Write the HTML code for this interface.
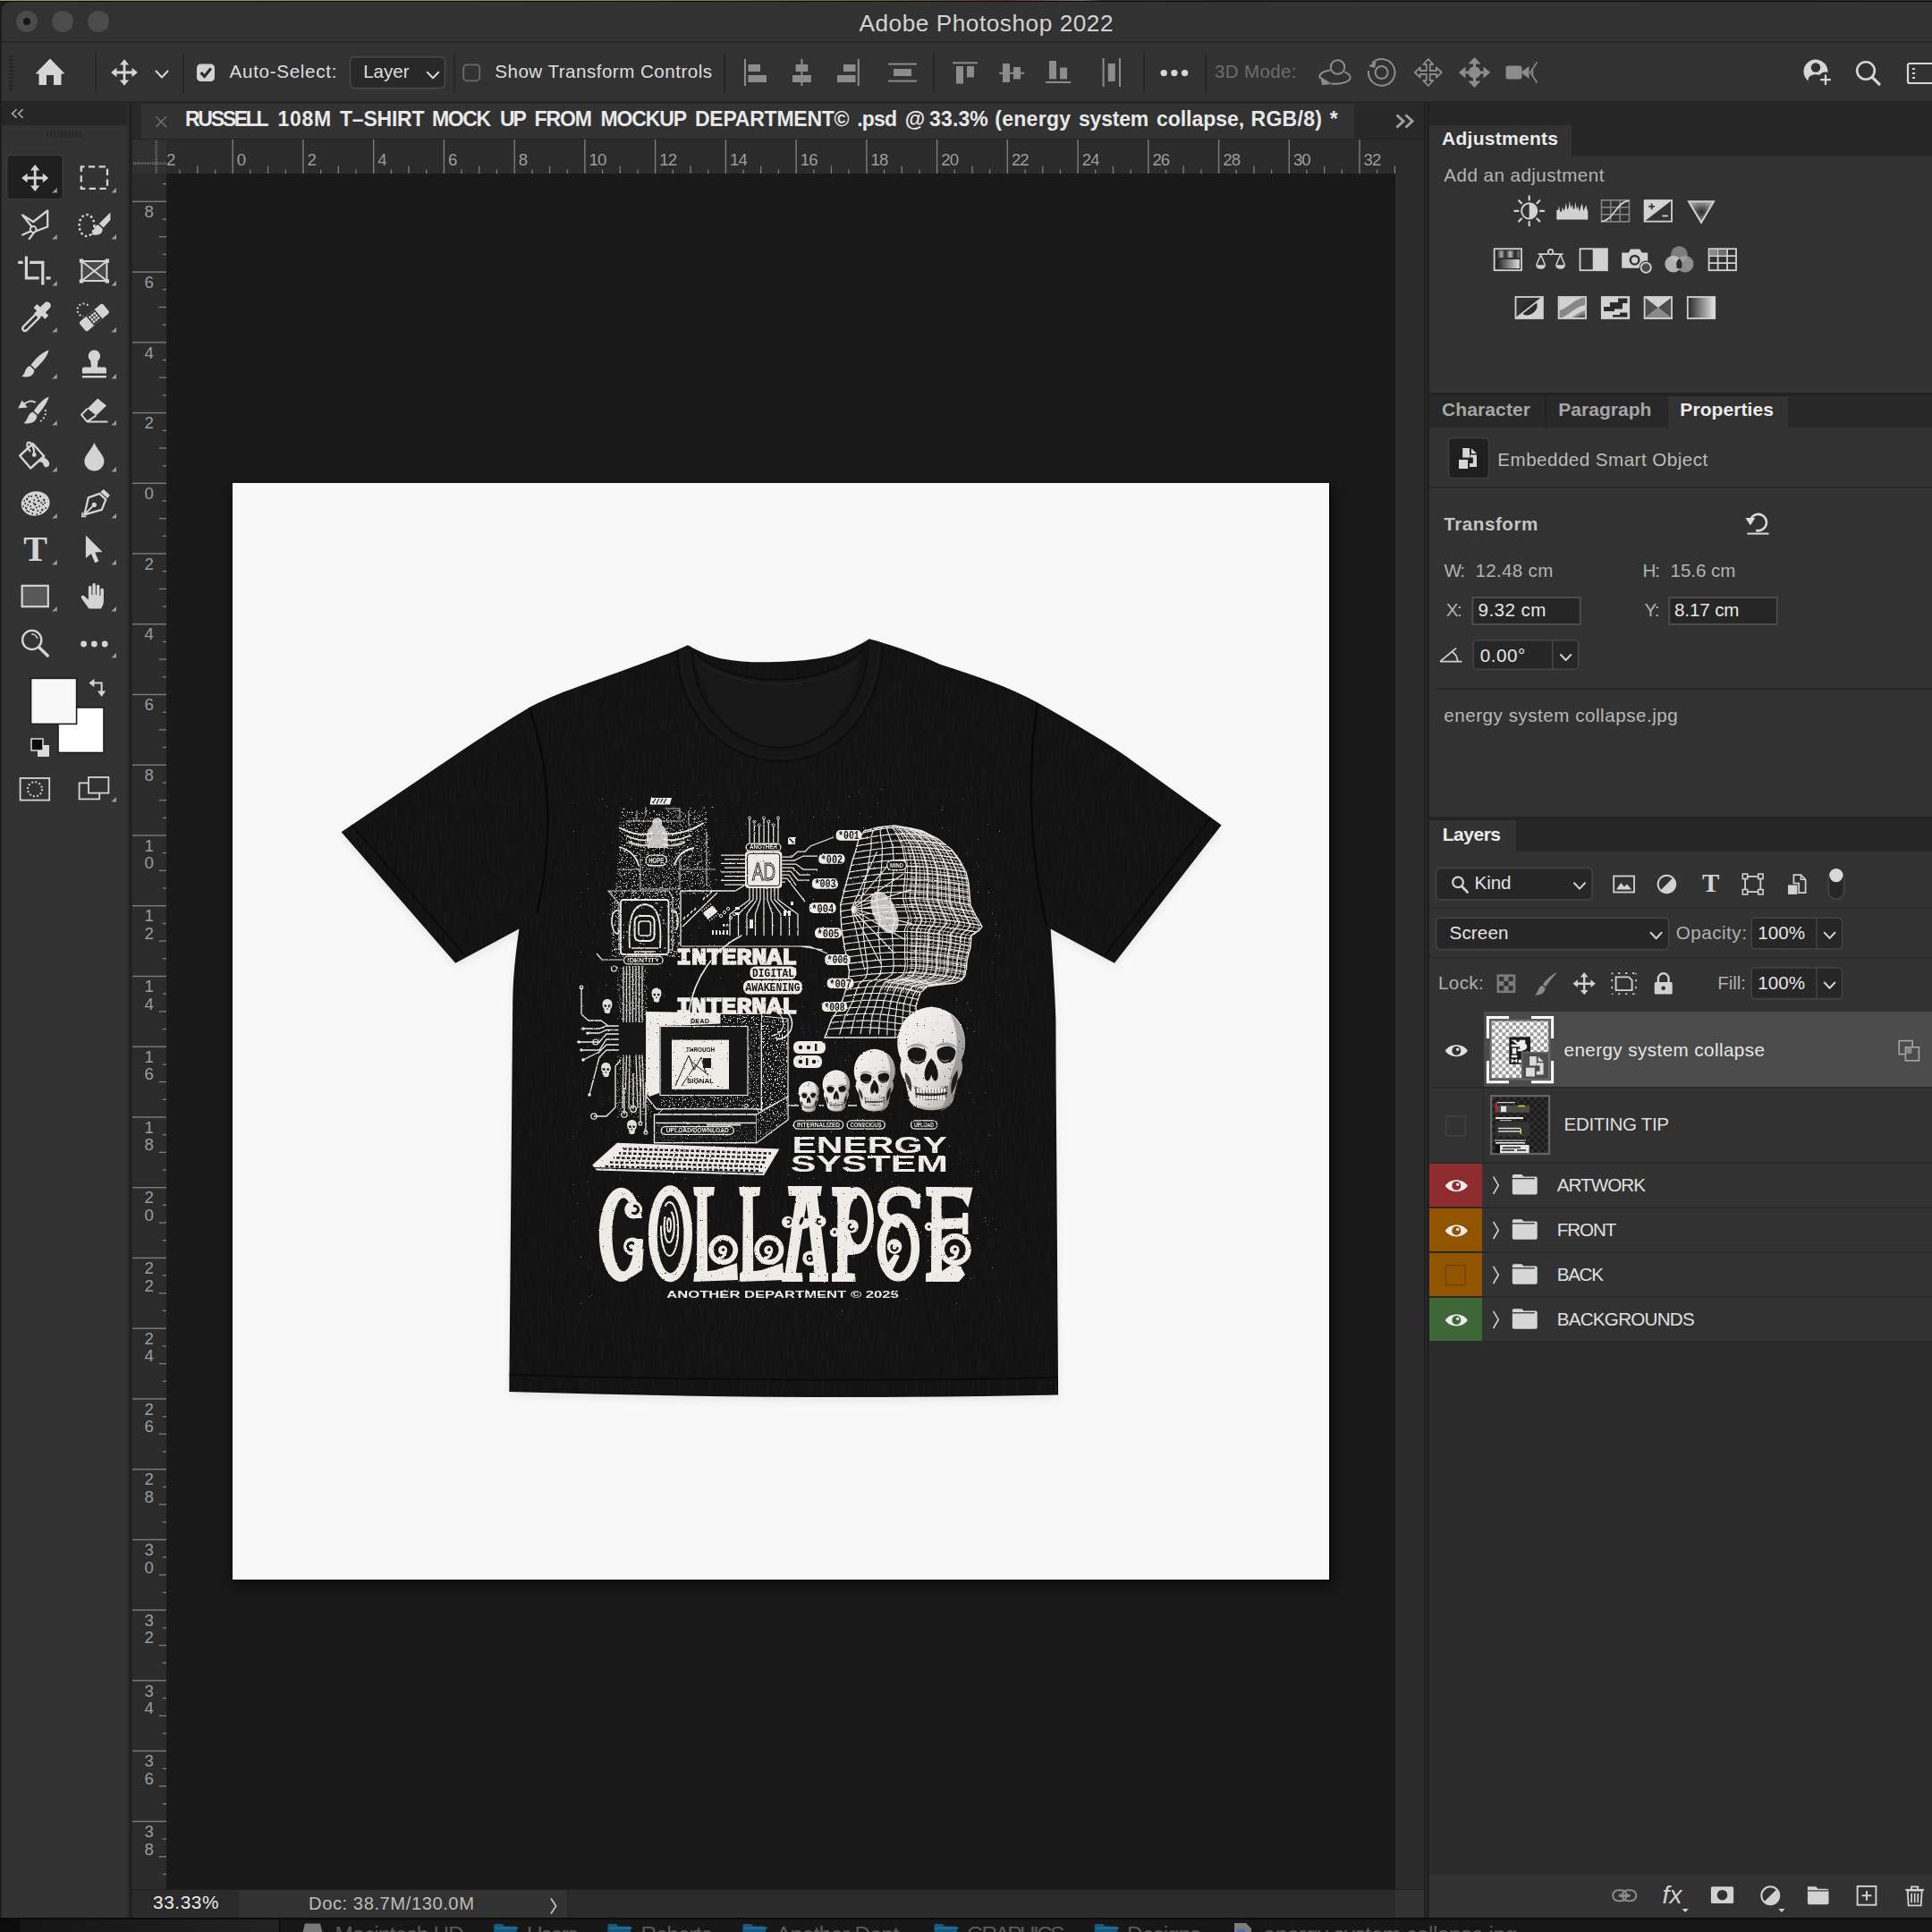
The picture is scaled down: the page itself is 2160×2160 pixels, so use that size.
<!DOCTYPE html>
<html><head><meta charset="utf-8"><title>Adobe Photoshop 2022</title>
<style>
html,body{margin:0;padding:0;background:#1c1c1c;}
body{width:2160px;height:2160px;position:relative;overflow:hidden;font-family:"Liberation Sans",sans-serif;}
.b{position:absolute;box-sizing:border-box;}
.t{position:absolute;white-space:pre;line-height:1;font-family:"Liberation Sans",sans-serif;}
svg{overflow:visible;}
</style></head>
<body>
<!-- p1_frame -->
<div class="b" style="left:0.0px;top:0.0px;width:2160.0px;height:3.0px;background:#0a0a0a;"></div>
<div class="b" style="left:0.0px;top:0.0px;width:2160.0px;height:1.3px;background:linear-gradient(90deg,#9c956a 0,#8a8560 30%,#6a6248 45%,#5a3a30 52%,#7a6a60 56%,#3a3030 57%,#20262e 70%,#2a3038 100%);"></div>
<div class="b" style="left:0.0px;top:2.0px;width:14.0px;height:2144.0px;background:#1d1d1d;"></div>
<div class="b" style="left:1.9px;top:2.4px;width:2160.0px;height:2143.6px;background:#323232;border-radius:10px 0 0 0;"></div>
<div class="b" style="left:2.0px;top:46.0px;width:2158.0px;height:2.0px;background:#262626;"></div>
<div class="b" style="left:18.0px;top:12.0px;width:24.0px;height:24.0px;background:#4b4b4b;border-radius:50%;"></div>
<div class="b" style="left:58.0px;top:12.0px;width:24.0px;height:24.0px;background:#4b4b4b;border-radius:50%;"></div>
<div class="b" style="left:98.0px;top:12.0px;width:24.0px;height:24.0px;background:#4b4b4b;border-radius:50%;"></div>
<div class="b" style="left:26.0px;top:20.0px;width:8.0px;height:8.0px;background:#151515;border-radius:50%;"></div>
<span class="t" style="left:960.5px;top:13.4px;font-size:26.2px;color:#d2d2d2;letter-spacing:0.54px;">Adobe Photoshop 2022</span>
<div class="b" style="left:2.0px;top:113.0px;width:2158.0px;height:2.0px;background:#262626;"></div>
<div class="b" style="left:2.0px;top:115.0px;width:2158.0px;height:2031.0px;background:#262626;"></div>
<div class="b" style="left:2.0px;top:115.0px;width:140.0px;height:24.0px;background:#262626;"></div>
<div class="b" style="left:2.0px;top:140.0px;width:140.0px;height:2005.0px;background:#323232;"></div>
<div class="b" style="left:142.0px;top:115.0px;width:2.0px;height:2031.0px;background:#2c2c2c;"></div>
<div class="b" style="left:144.0px;top:115.0px;width:4.0px;height:2031.0px;background:#212121;"></div>
<div class="b" style="left:148.0px;top:115.0px;width:1444.0px;height:40.0px;background:#282828;"></div>
<div class="b" style="left:158.0px;top:116.0px;width:1356.0px;height:39.0px;background:#323232;"></div>
<div class="b" style="left:148.0px;top:155.0px;width:1444.0px;height:1.5px;background:#222;"></div>
<div class="b" style="left:148.0px;top:156.0px;width:1444.0px;height:38.0px;background:#2b2b2b;"></div>
<div class="b" style="left:148.0px;top:156.0px;width:38.0px;height:38.0px;background:#303030;"></div>
<div class="b" style="left:148.0px;top:194.0px;width:38.0px;height:1918.0px;background:#2b2b2b;"></div>
<div class="b" style="left:186.0px;top:194.0px;width:1374.0px;height:1918.0px;background:#191919;"></div>
<div class="b" style="left:1560.0px;top:156.0px;width:32.0px;height:1988.0px;background:#2a2a2a;"></div>
<div class="b" style="left:148.0px;top:2112.0px;width:1412.0px;height:32.0px;background:#2a2a2a;"></div>
<div class="b" style="left:1560.0px;top:2112.0px;width:32.0px;height:32.4px;background:#323232;"></div>
<div class="b" style="left:148.0px;top:2112.0px;width:119.0px;height:32.0px;background:#2a2a2a;"></div>
<div class="b" style="left:267.0px;top:2112.0px;width:367.0px;height:32.0px;background:#323232;"></div>
<div class="b" style="left:148.0px;top:2111.5px;width:1444.0px;height:1.2px;background:#202020;"></div>
<div class="b" style="left:1592.0px;top:115.0px;width:1.5px;height:2031.0px;background:#1e1e1e;"></div>
<div class="b" style="left:1593.5px;top:115.0px;width:1.5px;height:2031.0px;background:#2d2d2d;"></div>
<div class="b" style="left:1595.0px;top:115.0px;width:2.8px;height:2031.0px;background:#202020;"></div>
<div class="b" style="left:0.0px;top:2145.5px;width:2160.0px;height:15.0px;background:#1c1c1c;"></div>
<div class="b" style="left:0.0px;top:2145.5px;width:22.0px;height:15.0px;background:#0c0c0c;"></div>
<div class="b" style="left:0.0px;top:2144.3px;width:2160.0px;height:2.2px;background:#0a0a0a;"></div>
<!-- p2_options -->
<svg class="b" style="left:0.0px;top:0.0px;" width="2160" height="114" viewBox="0 0 2160 114"><rect x="10" y="62" width="5" height="1.6" fill="#222"/><rect x="10" y="66.1" width="5" height="1.6" fill="#222"/><rect x="10" y="70.2" width="5" height="1.6" fill="#222"/><rect x="10" y="74.3" width="5" height="1.6" fill="#222"/><rect x="10" y="78.4" width="5" height="1.6" fill="#222"/><rect x="10" y="82.5" width="5" height="1.6" fill="#222"/><rect x="10" y="86.6" width="5" height="1.6" fill="#222"/><rect x="10" y="90.7" width="5" height="1.6" fill="#222"/><rect x="10" y="94.8" width="5" height="1.6" fill="#222"/><rect x="10" y="98.9" width="5" height="1.6" fill="#222"/><path d="M56,65.5 L72.5,82.5 L68.5,82.5 L68.5,95 L60,95 L60,84 L52,84 L52,95 L43.5,95 L43.5,82.5 L39.5,82.5 Z" fill="#d6d6d6"/><g transform="translate(139,81) scale(0.99)"><path d="M0,-15 L5.2,-8.6 L1.4,-8.6 L1.4,-1.4 L8.6,-1.4 L8.6,-5.2 L15,0 L8.6,5.2 L8.6,1.4 L1.4,1.4 L1.4,8.6 L5.2,8.6 L0,15 L-5.2,8.6 L-1.4,8.6 L-1.4,1.4 L-8.6,1.4 L-8.6,5.2 L-15,0 L-8.6,-5.2 L-8.6,-1.4 L-1.4,-1.4 L-1.4,-8.6 L-5.2,-8.6 Z" fill="#d6d6d6"/></g><path d="M174.5,79.5 L181,86.5 L187.5,79.5" fill="none" stroke="#d6d6d6" stroke-width="2" stroke-linecap="round" stroke-linejoin="round"/><rect x="220" y="71.5" width="20" height="19.5" rx="4.5" fill="#d2d2d2"/><path d="M224.6,81.2 L228.6,85.4 L235.8,76.6" fill="none" stroke="#2a2a2a" stroke-width="3.2"/><rect x="391.4" y="63.6" width="106" height="35" rx="5" fill="#282828" stroke="#474747" stroke-width="1.6"/><path d="M477.75,80.75 L484,87.25 L490.25,80.75" fill="none" stroke="#d6d6d6" stroke-width="2" stroke-linecap="round" stroke-linejoin="round"/><rect x="518.2" y="72.4" width="18" height="18" rx="4" fill="none" stroke="#6a6a6a" stroke-width="1.8"/><rect x="832" y="66" width="2" height="30" fill="#8c8c8c"/><rect x="836.5" y="72" width="13.5" height="8" fill="#8c8c8c"/><rect x="836.5" y="84" width="20.5" height="8" fill="#8c8c8c"/><rect x="895.4" y="66" width="2" height="30" fill="#8c8c8c"/><rect x="889.6" y="72" width="13.6" height="8" fill="#8c8c8c"/><rect x="886" y="84" width="20.8" height="8" fill="#8c8c8c"/><rect x="958.8" y="66" width="2" height="30" fill="#8c8c8c"/><rect x="943" y="72" width="13.5" height="8" fill="#8c8c8c"/><rect x="936" y="84" width="20.5" height="8" fill="#8c8c8c"/><rect x="993" y="70.6" width="32" height="2" fill="#8c8c8c"/><rect x="993" y="89.6" width="32" height="2" fill="#8c8c8c"/><rect x="999" y="77" width="20" height="8" fill="#8c8c8c"/><rect x="1065" y="69.3" width="28" height="2" fill="#8c8c8c"/><rect x="1069" y="74" width="8" height="19.6" fill="#8c8c8c"/><rect x="1081" y="74" width="8" height="12.4" fill="#8c8c8c"/><rect x="1117" y="80.8" width="28" height="2" fill="#8c8c8c"/><rect x="1121" y="71" width="8" height="21" fill="#8c8c8c"/><rect x="1133" y="75" width="8" height="13.4" fill="#8c8c8c"/><rect x="1169" y="91" width="28" height="2" fill="#8c8c8c"/><rect x="1173" y="68" width="8" height="20.4" fill="#8c8c8c"/><rect x="1185" y="75.6" width="8" height="12.8" fill="#8c8c8c"/><rect x="1232.6" y="65" width="2" height="32" fill="#8c8c8c"/><rect x="1251" y="65" width="2" height="32" fill="#8c8c8c"/><rect x="1238.8" y="71" width="8" height="20" fill="#8c8c8c"/><circle cx="1301.2" cy="81.6" r="3.7" fill="#d6d6d6"/><circle cx="1312.9" cy="81.6" r="3.7" fill="#d6d6d6"/><circle cx="1324.6" cy="81.6" r="3.7" fill="#d6d6d6"/><g transform="translate(1492.5,81)"><path d="M-5,-2.6 C-14,-1.6 -19,2.6 -16.4,6.6 M-4,12.6 C6,13.4 16,11 17,6.4 C17.6,3.6 14.6,1 10.6,-0.6" fill="none" stroke="#8c8c8c" stroke-width="2"/><circle cx="3" cy="-6" r="7.8" fill="#323232" stroke="#8c8c8c" stroke-width="2"/><path d="M-16.6,4.4 L-3.4,12.8 L-14.4,14.2 Z" fill="#8c8c8c"/></g><g transform="translate(1544.6,81)"><path d="M-10.5,-10.5 A14.8,14.8 0 1 1 -14.6,-2" fill="none" stroke="#8c8c8c" stroke-width="2"/><circle r="7" fill="none" stroke="#8c8c8c" stroke-width="2"/><path d="M-14.5,-7 L-6,-12.5 L-7.5,-5 Z" fill="#8c8c8c"/></g><g transform="translate(1596.8,81)"><path d="M0,-15 L5.5,-9 L2,-9 L2,-2 L9,-2 L9,-5.5 L15,0 L9,5.5 L9,2 L2,2 L2,9 L5.5,9 L0,15 L-5.5,9 L-2,9 L-2,2 L-9,2 L-9,5.5 L-15,0 L-9,-5.5 L-9,-2 L-2,-2 L-2,-9 L-5.5,-9 Z" fill="none" stroke="#8c8c8c" stroke-width="1.8" stroke-linejoin="round"/></g><g transform="translate(1648.5,81)"><circle r="6.8" fill="#8c8c8c"/><path d="M0,-17 L7,-9.6 L-7,-9.6 Z M0,17 L7,9.6 L-7,9.6 Z M-17.6,0 L-10,-6.6 L-10,6.6 Z M17.6,0 L10,-6.6 L10,6.6 Z" fill="#8c8c8c"/><path d="M0,-10 L0,10 M-10,0 L10,0" stroke="#8c8c8c" stroke-width="3"/></g><g transform="translate(1700.5,81)"><rect x="-17" y="-7.5" width="18" height="15" rx="2.5" fill="#8c8c8c"/><path d="M1,-1 L9,-7 L9,7 L1,1 Z" fill="#8c8c8c"/><path d="M18,-11.6 L10.4,0 L18,11.6" fill="none" stroke="#8c8c8c" stroke-width="1.6"/><path d="M12.4,-3 A6,6 0 0 1 12.4,3" fill="none" stroke="#8c8c8c" stroke-width="1.4"/></g><g transform="translate(2030,80)"><circle r="13.5" fill="#d6d6d6"/><circle cx="0" cy="-4.5" r="5.2" fill="#323232"/><path d="M-8.5,9.5 C-8.5,1 8.5,1 8.5,9.5 L8.5,14 L-8.5,14 Z" fill="#323232"/><circle cx="11" cy="9" r="8.5" fill="#323232"/><path d="M11,3.5 L11,15 M5.2,9.2 L16.8,9.2" stroke="#d6d6d6" stroke-width="2.2"/></g><g transform="translate(2086,79)"><circle r="9.8" fill="none" stroke="#d6d6d6" stroke-width="2.6"/><path d="M7.2,7.4 L15,15.2" stroke="#d6d6d6" stroke-width="3.2" stroke-linecap="round"/></g><g transform="translate(2132,70)"><rect x="1" y="1" width="34" height="22" rx="2" fill="none" stroke="#d6d6d6" stroke-width="2.2"/><path d="M6,7 L9,7 M6,12 L9,12 M6,17 L9,17" stroke="#d6d6d6" stroke-width="2"/></g></svg>
<div class="b" style="left:106.0px;top:58.5px;width:2.0px;height:45.0px;background:#272727;"></div>
<div class="b" style="left:204.0px;top:58.5px;width:2.0px;height:45.0px;background:#272727;"></div>
<div class="b" style="left:507.0px;top:58.5px;width:2.0px;height:45.0px;background:#272727;"></div>
<div class="b" style="left:809.0px;top:58.5px;width:2.0px;height:45.0px;background:#272727;"></div>
<div class="b" style="left:1043.0px;top:58.5px;width:2.0px;height:45.0px;background:#272727;"></div>
<div class="b" style="left:1277.5px;top:58.5px;width:2.0px;height:45.0px;background:#272727;"></div>
<div class="b" style="left:1347.0px;top:58.5px;width:2.0px;height:45.0px;background:#272727;"></div>
<span class="t" style="left:256.6px;top:70.3px;font-size:20.6px;color:#dedede;letter-spacing:0.69px;">Auto-Select:</span>
<span class="t" style="left:406.2px;top:70.3px;font-size:20.6px;color:#dedede;letter-spacing:-0.03px;">Layer</span>
<span class="t" style="left:553.3px;top:70.3px;font-size:20.6px;color:#dedede;letter-spacing:0.47px;">Show Transform Controls</span>
<span class="t" style="left:1358.0px;top:70.3px;font-size:20.6px;color:#6c6c6c;letter-spacing:0.30px;">3D Mode:</span>
<!-- p3_doc -->
<svg class="b" style="left:0.0px;top:0.0px;" width="2160" height="2160" viewBox="0 0 2160 2160"><path d="M174.4,130.4 L186,142 M186,130.4 L174.4,142" stroke="#7a7a7a" stroke-width="1.3"/><path d="M1561.5,128.5 L1569,135.5 L1561.5,142.5 M1571.5,128.5 L1579,135.5 L1571.5,142.5" fill="none" stroke="#a0a0a0" stroke-width="3"/><path d="M18.6,122.2 L13.6,127 L18.6,131.8 M25.6,122.2 L20.6,127 L25.6,131.8" fill="none" stroke="#b4b4b4" stroke-width="1.5"/><rect x="52.2" y="146" width="1.7" height="7.6" fill="#262626"/><rect x="56.25" y="146" width="1.7" height="7.6" fill="#262626"/><rect x="60.3" y="146" width="1.7" height="7.6" fill="#262626"/><rect x="64.35" y="146" width="1.7" height="7.6" fill="#262626"/><rect x="68.4" y="146" width="1.7" height="7.6" fill="#262626"/><rect x="72.45" y="146" width="1.7" height="7.6" fill="#262626"/><rect x="76.5" y="146" width="1.7" height="7.6" fill="#262626"/><rect x="80.55" y="146" width="1.7" height="7.6" fill="#262626"/><rect x="84.6" y="146" width="1.7" height="7.6" fill="#262626"/><rect x="88.65" y="146" width="1.7" height="7.6" fill="#262626"/><path d="M149,182.6 L186,182.6" stroke="#8a8a8a" stroke-width="2.6" stroke-dasharray="1,1.1" opacity=".75"/><path d="M174.6,157 L174.6,194" stroke="#8a8a8a" stroke-width="2.6" stroke-dasharray="1,1.1" opacity=".75"/><rect x="200.5" y="189.6" width="1.3" height="4.4" fill="#7c7c7c"/><rect x="220.2" y="185.5" width="1.3" height="8.5" fill="#7c7c7c"/><rect x="239.9" y="189.6" width="1.3" height="4.4" fill="#7c7c7c"/><rect x="259.5" y="156" width="1.4" height="38" fill="#7c7c7c"/><rect x="279.2" y="189.6" width="1.3" height="4.4" fill="#7c7c7c"/><rect x="298.9" y="185.5" width="1.3" height="8.5" fill="#7c7c7c"/><rect x="318.6" y="189.6" width="1.3" height="4.4" fill="#7c7c7c"/><rect x="338.2" y="156" width="1.4" height="38" fill="#7c7c7c"/><rect x="358.0" y="189.6" width="1.3" height="4.4" fill="#7c7c7c"/><rect x="377.7" y="185.5" width="1.3" height="8.5" fill="#7c7c7c"/><rect x="397.3" y="189.6" width="1.3" height="4.4" fill="#7c7c7c"/><rect x="417.0" y="156" width="1.4" height="38" fill="#7c7c7c"/><rect x="436.7" y="189.6" width="1.3" height="4.4" fill="#7c7c7c"/><rect x="456.4" y="185.5" width="1.3" height="8.5" fill="#7c7c7c"/><rect x="476.1" y="189.6" width="1.3" height="4.4" fill="#7c7c7c"/><rect x="495.7" y="156" width="1.4" height="38" fill="#7c7c7c"/><rect x="515.5" y="189.6" width="1.3" height="4.4" fill="#7c7c7c"/><rect x="535.1" y="185.5" width="1.3" height="8.5" fill="#7c7c7c"/><rect x="554.8" y="189.6" width="1.3" height="4.4" fill="#7c7c7c"/><rect x="574.5" y="156" width="1.4" height="38" fill="#7c7c7c"/><rect x="594.2" y="189.6" width="1.3" height="4.4" fill="#7c7c7c"/><rect x="613.9" y="185.5" width="1.3" height="8.5" fill="#7c7c7c"/><rect x="633.6" y="189.6" width="1.3" height="4.4" fill="#7c7c7c"/><rect x="653.2" y="156" width="1.4" height="38" fill="#7c7c7c"/><rect x="672.9" y="189.6" width="1.3" height="4.4" fill="#7c7c7c"/><rect x="692.6" y="185.5" width="1.3" height="8.5" fill="#7c7c7c"/><rect x="712.3" y="189.6" width="1.3" height="4.4" fill="#7c7c7c"/><rect x="731.9" y="156" width="1.4" height="38" fill="#7c7c7c"/><rect x="751.7" y="189.6" width="1.3" height="4.4" fill="#7c7c7c"/><rect x="771.4" y="185.5" width="1.3" height="8.5" fill="#7c7c7c"/><rect x="791.0" y="189.6" width="1.3" height="4.4" fill="#7c7c7c"/><rect x="810.7" y="156" width="1.4" height="38" fill="#7c7c7c"/><rect x="830.4" y="189.6" width="1.3" height="4.4" fill="#7c7c7c"/><rect x="850.1" y="185.5" width="1.3" height="8.5" fill="#7c7c7c"/><rect x="869.8" y="189.6" width="1.3" height="4.4" fill="#7c7c7c"/><rect x="889.4" y="156" width="1.4" height="38" fill="#7c7c7c"/><rect x="909.2" y="189.6" width="1.3" height="4.4" fill="#7c7c7c"/><rect x="928.8" y="185.5" width="1.3" height="8.5" fill="#7c7c7c"/><rect x="948.5" y="189.6" width="1.3" height="4.4" fill="#7c7c7c"/><rect x="968.2" y="156" width="1.4" height="38" fill="#7c7c7c"/><rect x="987.9" y="189.6" width="1.3" height="4.4" fill="#7c7c7c"/><rect x="1007.6" y="185.5" width="1.3" height="8.5" fill="#7c7c7c"/><rect x="1027.3" y="189.6" width="1.3" height="4.4" fill="#7c7c7c"/><rect x="1046.9" y="156" width="1.4" height="38" fill="#7c7c7c"/><rect x="1066.6" y="189.6" width="1.3" height="4.4" fill="#7c7c7c"/><rect x="1086.3" y="185.5" width="1.3" height="8.5" fill="#7c7c7c"/><rect x="1106.0" y="189.6" width="1.3" height="4.4" fill="#7c7c7c"/><rect x="1125.6" y="156" width="1.4" height="38" fill="#7c7c7c"/><rect x="1145.4" y="189.6" width="1.3" height="4.4" fill="#7c7c7c"/><rect x="1165.1" y="185.5" width="1.3" height="8.5" fill="#7c7c7c"/><rect x="1184.7" y="189.6" width="1.3" height="4.4" fill="#7c7c7c"/><rect x="1204.4" y="156" width="1.4" height="38" fill="#7c7c7c"/><rect x="1224.1" y="189.6" width="1.3" height="4.4" fill="#7c7c7c"/><rect x="1243.8" y="185.5" width="1.3" height="8.5" fill="#7c7c7c"/><rect x="1263.5" y="189.6" width="1.3" height="4.4" fill="#7c7c7c"/><rect x="1283.1" y="156" width="1.4" height="38" fill="#7c7c7c"/><rect x="1302.9" y="189.6" width="1.3" height="4.4" fill="#7c7c7c"/><rect x="1322.5" y="185.5" width="1.3" height="8.5" fill="#7c7c7c"/><rect x="1342.2" y="189.6" width="1.3" height="4.4" fill="#7c7c7c"/><rect x="1361.9" y="156" width="1.4" height="38" fill="#7c7c7c"/><rect x="1381.6" y="189.6" width="1.3" height="4.4" fill="#7c7c7c"/><rect x="1401.3" y="185.5" width="1.3" height="8.5" fill="#7c7c7c"/><rect x="1421.0" y="189.6" width="1.3" height="4.4" fill="#7c7c7c"/><rect x="1440.6" y="156" width="1.4" height="38" fill="#7c7c7c"/><rect x="1460.3" y="189.6" width="1.3" height="4.4" fill="#7c7c7c"/><rect x="1480.0" y="185.5" width="1.3" height="8.5" fill="#7c7c7c"/><rect x="1499.7" y="189.6" width="1.3" height="4.4" fill="#7c7c7c"/><rect x="1519.3" y="156" width="1.4" height="38" fill="#7c7c7c"/><rect x="1539.1" y="189.6" width="1.3" height="4.4" fill="#7c7c7c"/><rect x="1558.8" y="185.5" width="1.3" height="8.5" fill="#7c7c7c"/><rect x="181.8" y="205.0" width="4.2" height="1.3" fill="#7c7c7c"/><rect x="148" y="224.6" width="38" height="1.4" fill="#7c7c7c"/><rect x="181.8" y="244.4" width="4.2" height="1.3" fill="#7c7c7c"/><rect x="177.6" y="264.1" width="8.4" height="1.3" fill="#7c7c7c"/><rect x="181.8" y="283.7" width="4.2" height="1.3" fill="#7c7c7c"/><rect x="148" y="303.4" width="38" height="1.4" fill="#7c7c7c"/><rect x="181.8" y="323.1" width="4.2" height="1.3" fill="#7c7c7c"/><rect x="177.6" y="342.8" width="8.4" height="1.3" fill="#7c7c7c"/><rect x="181.8" y="362.5" width="4.2" height="1.3" fill="#7c7c7c"/><rect x="148" y="382.1" width="38" height="1.4" fill="#7c7c7c"/><rect x="181.8" y="401.9" width="4.2" height="1.3" fill="#7c7c7c"/><rect x="177.6" y="421.5" width="8.4" height="1.3" fill="#7c7c7c"/><rect x="181.8" y="441.2" width="4.2" height="1.3" fill="#7c7c7c"/><rect x="148" y="460.9" width="38" height="1.4" fill="#7c7c7c"/><rect x="181.8" y="480.6" width="4.2" height="1.3" fill="#7c7c7c"/><rect x="177.6" y="500.3" width="8.4" height="1.3" fill="#7c7c7c"/><rect x="181.8" y="520.0" width="4.2" height="1.3" fill="#7c7c7c"/><rect x="148" y="539.6" width="38" height="1.4" fill="#7c7c7c"/><rect x="181.8" y="559.3" width="4.2" height="1.3" fill="#7c7c7c"/><rect x="177.6" y="579.0" width="8.4" height="1.3" fill="#7c7c7c"/><rect x="181.8" y="598.7" width="4.2" height="1.3" fill="#7c7c7c"/><rect x="148" y="618.3" width="38" height="1.4" fill="#7c7c7c"/><rect x="181.8" y="638.1" width="4.2" height="1.3" fill="#7c7c7c"/><rect x="177.6" y="657.8" width="8.4" height="1.3" fill="#7c7c7c"/><rect x="181.8" y="677.4" width="4.2" height="1.3" fill="#7c7c7c"/><rect x="148" y="697.1" width="38" height="1.4" fill="#7c7c7c"/><rect x="181.8" y="716.8" width="4.2" height="1.3" fill="#7c7c7c"/><rect x="177.6" y="736.5" width="8.4" height="1.3" fill="#7c7c7c"/><rect x="181.8" y="756.2" width="4.2" height="1.3" fill="#7c7c7c"/><rect x="148" y="775.8" width="38" height="1.4" fill="#7c7c7c"/><rect x="181.8" y="795.6" width="4.2" height="1.3" fill="#7c7c7c"/><rect x="177.6" y="815.2" width="8.4" height="1.3" fill="#7c7c7c"/><rect x="181.8" y="834.9" width="4.2" height="1.3" fill="#7c7c7c"/><rect x="148" y="854.6" width="38" height="1.4" fill="#7c7c7c"/><rect x="181.8" y="874.3" width="4.2" height="1.3" fill="#7c7c7c"/><rect x="177.6" y="894.0" width="8.4" height="1.3" fill="#7c7c7c"/><rect x="181.8" y="913.7" width="4.2" height="1.3" fill="#7c7c7c"/><rect x="148" y="933.3" width="38" height="1.4" fill="#7c7c7c"/><rect x="181.8" y="953.0" width="4.2" height="1.3" fill="#7c7c7c"/><rect x="177.6" y="972.7" width="8.4" height="1.3" fill="#7c7c7c"/><rect x="181.8" y="992.4" width="4.2" height="1.3" fill="#7c7c7c"/><rect x="148" y="1012.0" width="38" height="1.4" fill="#7c7c7c"/><rect x="181.8" y="1031.8" width="4.2" height="1.3" fill="#7c7c7c"/><rect x="177.6" y="1051.5" width="8.4" height="1.3" fill="#7c7c7c"/><rect x="181.8" y="1071.1" width="4.2" height="1.3" fill="#7c7c7c"/><rect x="148" y="1090.8" width="38" height="1.4" fill="#7c7c7c"/><rect x="181.8" y="1110.5" width="4.2" height="1.3" fill="#7c7c7c"/><rect x="177.6" y="1130.2" width="8.4" height="1.3" fill="#7c7c7c"/><rect x="181.8" y="1149.9" width="4.2" height="1.3" fill="#7c7c7c"/><rect x="148" y="1169.5" width="38" height="1.4" fill="#7c7c7c"/><rect x="181.8" y="1189.3" width="4.2" height="1.3" fill="#7c7c7c"/><rect x="177.6" y="1208.9" width="8.4" height="1.3" fill="#7c7c7c"/><rect x="181.8" y="1228.6" width="4.2" height="1.3" fill="#7c7c7c"/><rect x="148" y="1248.3" width="38" height="1.4" fill="#7c7c7c"/><rect x="181.8" y="1268.0" width="4.2" height="1.3" fill="#7c7c7c"/><rect x="177.6" y="1287.7" width="8.4" height="1.3" fill="#7c7c7c"/><rect x="181.8" y="1307.4" width="4.2" height="1.3" fill="#7c7c7c"/><rect x="148" y="1327.0" width="38" height="1.4" fill="#7c7c7c"/><rect x="181.8" y="1346.7" width="4.2" height="1.3" fill="#7c7c7c"/><rect x="177.6" y="1366.4" width="8.4" height="1.3" fill="#7c7c7c"/><rect x="181.8" y="1386.1" width="4.2" height="1.3" fill="#7c7c7c"/><rect x="148" y="1405.7" width="38" height="1.4" fill="#7c7c7c"/><rect x="181.8" y="1425.5" width="4.2" height="1.3" fill="#7c7c7c"/><rect x="177.6" y="1445.2" width="8.4" height="1.3" fill="#7c7c7c"/><rect x="181.8" y="1464.8" width="4.2" height="1.3" fill="#7c7c7c"/><rect x="148" y="1484.5" width="38" height="1.4" fill="#7c7c7c"/><rect x="181.8" y="1504.2" width="4.2" height="1.3" fill="#7c7c7c"/><rect x="177.6" y="1523.9" width="8.4" height="1.3" fill="#7c7c7c"/><rect x="181.8" y="1543.6" width="4.2" height="1.3" fill="#7c7c7c"/><rect x="148" y="1563.2" width="38" height="1.4" fill="#7c7c7c"/><rect x="181.8" y="1583.0" width="4.2" height="1.3" fill="#7c7c7c"/><rect x="177.6" y="1602.6" width="8.4" height="1.3" fill="#7c7c7c"/><rect x="181.8" y="1622.3" width="4.2" height="1.3" fill="#7c7c7c"/><rect x="148" y="1642.0" width="38" height="1.4" fill="#7c7c7c"/><rect x="181.8" y="1661.7" width="4.2" height="1.3" fill="#7c7c7c"/><rect x="177.6" y="1681.4" width="8.4" height="1.3" fill="#7c7c7c"/><rect x="181.8" y="1701.1" width="4.2" height="1.3" fill="#7c7c7c"/><rect x="148" y="1720.7" width="38" height="1.4" fill="#7c7c7c"/><rect x="181.8" y="1740.4" width="4.2" height="1.3" fill="#7c7c7c"/><rect x="177.6" y="1760.1" width="8.4" height="1.3" fill="#7c7c7c"/><rect x="181.8" y="1779.8" width="4.2" height="1.3" fill="#7c7c7c"/><rect x="148" y="1799.4" width="38" height="1.4" fill="#7c7c7c"/><rect x="181.8" y="1819.2" width="4.2" height="1.3" fill="#7c7c7c"/><rect x="177.6" y="1838.9" width="8.4" height="1.3" fill="#7c7c7c"/><rect x="181.8" y="1858.5" width="4.2" height="1.3" fill="#7c7c7c"/><rect x="148" y="1878.2" width="38" height="1.4" fill="#7c7c7c"/><rect x="181.8" y="1897.9" width="4.2" height="1.3" fill="#7c7c7c"/><rect x="177.6" y="1917.6" width="8.4" height="1.3" fill="#7c7c7c"/><rect x="181.8" y="1937.3" width="4.2" height="1.3" fill="#7c7c7c"/><rect x="148" y="1956.9" width="38" height="1.4" fill="#7c7c7c"/><rect x="181.8" y="1976.7" width="4.2" height="1.3" fill="#7c7c7c"/><rect x="177.6" y="1996.3" width="8.4" height="1.3" fill="#7c7c7c"/><rect x="181.8" y="2016.0" width="4.2" height="1.3" fill="#7c7c7c"/><rect x="148" y="2035.7" width="38" height="1.4" fill="#7c7c7c"/><rect x="181.8" y="2055.4" width="4.2" height="1.3" fill="#7c7c7c"/><rect x="177.6" y="2075.1" width="8.4" height="1.3" fill="#7c7c7c"/><rect x="181.8" y="2094.8" width="4.2" height="1.3" fill="#7c7c7c"/><path d="M616,2122.5 L621.6,2131 L616,2139.5" fill="none" stroke="#c8c8c8" stroke-width="1.6"/></svg>
<span class="t" style="left:207.0px;top:122.0px;font-size:23.0px;color:#e8e8e8;font-weight:700;letter-spacing:-2.29px;">RUSSELL</span>
<span class="t" style="left:310.6px;top:122.0px;font-size:23.0px;color:#e8e8e8;font-weight:700;letter-spacing:0.69px;">108M</span>
<span class="t" style="left:380.0px;top:122.0px;font-size:23.0px;color:#e8e8e8;font-weight:700;letter-spacing:-0.22px;">T–SHIRT</span>
<span class="t" style="left:483.0px;top:122.0px;font-size:23.0px;color:#e8e8e8;font-weight:700;letter-spacing:-1.42px;">MOCK</span>
<span class="t" style="left:559.0px;top:122.0px;font-size:23.0px;color:#e8e8e8;font-weight:700;letter-spacing:-2.15px;">UP</span>
<span class="t" style="left:597.5px;top:122.0px;font-size:23.0px;color:#e8e8e8;font-weight:700;letter-spacing:-1.07px;">FROM</span>
<span class="t" style="left:671.5px;top:122.0px;font-size:23.0px;color:#e8e8e8;font-weight:700;letter-spacing:-1.14px;">MOCKUP</span>
<span class="t" style="left:777.0px;top:122.0px;font-size:23.0px;color:#e8e8e8;font-weight:700;letter-spacing:-0.24px;">DEPARTMENT©</span>
<span class="t" style="left:958.3px;top:122.0px;font-size:23.0px;color:#e8e8e8;font-weight:700;letter-spacing:-0.86px;">.psd</span>
<span class="t" style="left:1011.7px;top:122.0px;font-size:23.0px;color:#e8e8e8;font-weight:700;">@</span>
<span class="t" style="left:1039.0px;top:122.0px;font-size:23.0px;color:#e8e8e8;font-weight:700;letter-spacing:0.15px;">33.3%</span>
<span class="t" style="left:1112.3px;top:122.0px;font-size:23.0px;color:#e8e8e8;font-weight:700;letter-spacing:0.27px;">(energy</span>
<span class="t" style="left:1206.0px;top:122.0px;font-size:23.0px;color:#e8e8e8;font-weight:700;letter-spacing:-0.22px;">system</span>
<span class="t" style="left:1293.0px;top:122.0px;font-size:23.0px;color:#e8e8e8;font-weight:700;letter-spacing:-0.05px;">collapse,</span>
<span class="t" style="left:1398.5px;top:122.0px;font-size:23.0px;color:#e8e8e8;font-weight:700;letter-spacing:0.31px;">RGB/8)</span>
<span class="t" style="left:1486.7px;top:122.0px;font-size:23.0px;color:#e8e8e8;font-weight:700;">*</span>
<span class="t" style="left:186.1px;top:169.5px;font-size:18.6px;color:#9c9c9c;letter-spacing:-0.9px;">2</span>
<span class="t" style="left:264.8px;top:169.5px;font-size:18.6px;color:#9c9c9c;letter-spacing:-0.9px;">0</span>
<span class="t" style="left:343.5px;top:169.5px;font-size:18.6px;color:#9c9c9c;letter-spacing:-0.9px;">2</span>
<span class="t" style="left:422.3px;top:169.5px;font-size:18.6px;color:#9c9c9c;letter-spacing:-0.9px;">4</span>
<span class="t" style="left:501.0px;top:169.5px;font-size:18.6px;color:#9c9c9c;letter-spacing:-0.9px;">6</span>
<span class="t" style="left:579.8px;top:169.5px;font-size:18.6px;color:#9c9c9c;letter-spacing:-0.9px;">8</span>
<span class="t" style="left:658.5px;top:169.5px;font-size:18.6px;color:#9c9c9c;letter-spacing:-0.9px;">10</span>
<span class="t" style="left:737.2px;top:169.5px;font-size:18.6px;color:#9c9c9c;letter-spacing:-0.9px;">12</span>
<span class="t" style="left:816.0px;top:169.5px;font-size:18.6px;color:#9c9c9c;letter-spacing:-0.9px;">14</span>
<span class="t" style="left:894.7px;top:169.5px;font-size:18.6px;color:#9c9c9c;letter-spacing:-0.9px;">16</span>
<span class="t" style="left:973.5px;top:169.5px;font-size:18.6px;color:#9c9c9c;letter-spacing:-0.9px;">18</span>
<span class="t" style="left:1052.2px;top:169.5px;font-size:18.6px;color:#9c9c9c;letter-spacing:-0.9px;">20</span>
<span class="t" style="left:1130.9px;top:169.5px;font-size:18.6px;color:#9c9c9c;letter-spacing:-0.9px;">22</span>
<span class="t" style="left:1209.7px;top:169.5px;font-size:18.6px;color:#9c9c9c;letter-spacing:-0.9px;">24</span>
<span class="t" style="left:1288.4px;top:169.5px;font-size:18.6px;color:#9c9c9c;letter-spacing:-0.9px;">26</span>
<span class="t" style="left:1367.2px;top:169.5px;font-size:18.6px;color:#9c9c9c;letter-spacing:-0.9px;">28</span>
<span class="t" style="left:1445.9px;top:169.5px;font-size:18.6px;color:#9c9c9c;letter-spacing:-0.9px;">30</span>
<span class="t" style="left:1524.6px;top:169.5px;font-size:18.6px;color:#9c9c9c;letter-spacing:-0.9px;">32</span>
<span class="t" style="left:161.4px;top:228.0px;font-size:18.6px;color:#9c9c9c;">8</span>
<span class="t" style="left:161.4px;top:306.7px;font-size:18.6px;color:#9c9c9c;">6</span>
<span class="t" style="left:161.4px;top:385.5px;font-size:18.6px;color:#9c9c9c;">4</span>
<span class="t" style="left:161.4px;top:464.2px;font-size:18.6px;color:#9c9c9c;">2</span>
<span class="t" style="left:161.4px;top:543.0px;font-size:18.6px;color:#9c9c9c;">0</span>
<span class="t" style="left:161.4px;top:621.7px;font-size:18.6px;color:#9c9c9c;">2</span>
<span class="t" style="left:161.4px;top:700.4px;font-size:18.6px;color:#9c9c9c;">4</span>
<span class="t" style="left:161.4px;top:779.2px;font-size:18.6px;color:#9c9c9c;">6</span>
<span class="t" style="left:161.4px;top:857.9px;font-size:18.6px;color:#9c9c9c;">8</span>
<span class="t" style="left:161.4px;top:936.7px;font-size:18.6px;color:#9c9c9c;">1</span>
<span class="t" style="left:161.4px;top:956.2px;font-size:18.6px;color:#9c9c9c;">0</span>
<span class="t" style="left:161.4px;top:1015.4px;font-size:18.6px;color:#9c9c9c;">1</span>
<span class="t" style="left:161.4px;top:1034.9px;font-size:18.6px;color:#9c9c9c;">2</span>
<span class="t" style="left:161.4px;top:1094.1px;font-size:18.6px;color:#9c9c9c;">1</span>
<span class="t" style="left:161.4px;top:1113.6px;font-size:18.6px;color:#9c9c9c;">4</span>
<span class="t" style="left:161.4px;top:1172.9px;font-size:18.6px;color:#9c9c9c;">1</span>
<span class="t" style="left:161.4px;top:1192.4px;font-size:18.6px;color:#9c9c9c;">6</span>
<span class="t" style="left:161.4px;top:1251.6px;font-size:18.6px;color:#9c9c9c;">1</span>
<span class="t" style="left:161.4px;top:1271.1px;font-size:18.6px;color:#9c9c9c;">8</span>
<span class="t" style="left:161.4px;top:1330.4px;font-size:18.6px;color:#9c9c9c;">2</span>
<span class="t" style="left:161.4px;top:1349.9px;font-size:18.6px;color:#9c9c9c;">0</span>
<span class="t" style="left:161.4px;top:1409.1px;font-size:18.6px;color:#9c9c9c;">2</span>
<span class="t" style="left:161.4px;top:1428.6px;font-size:18.6px;color:#9c9c9c;">2</span>
<span class="t" style="left:161.4px;top:1487.8px;font-size:18.6px;color:#9c9c9c;">2</span>
<span class="t" style="left:161.4px;top:1507.3px;font-size:18.6px;color:#9c9c9c;">4</span>
<span class="t" style="left:161.4px;top:1566.6px;font-size:18.6px;color:#9c9c9c;">2</span>
<span class="t" style="left:161.4px;top:1586.1px;font-size:18.6px;color:#9c9c9c;">6</span>
<span class="t" style="left:161.4px;top:1645.3px;font-size:18.6px;color:#9c9c9c;">2</span>
<span class="t" style="left:161.4px;top:1664.8px;font-size:18.6px;color:#9c9c9c;">8</span>
<span class="t" style="left:161.4px;top:1724.1px;font-size:18.6px;color:#9c9c9c;">3</span>
<span class="t" style="left:161.4px;top:1743.6px;font-size:18.6px;color:#9c9c9c;">0</span>
<span class="t" style="left:161.4px;top:1802.8px;font-size:18.6px;color:#9c9c9c;">3</span>
<span class="t" style="left:161.4px;top:1822.3px;font-size:18.6px;color:#9c9c9c;">2</span>
<span class="t" style="left:161.4px;top:1881.5px;font-size:18.6px;color:#9c9c9c;">3</span>
<span class="t" style="left:161.4px;top:1901.0px;font-size:18.6px;color:#9c9c9c;">4</span>
<span class="t" style="left:161.4px;top:1960.3px;font-size:18.6px;color:#9c9c9c;">3</span>
<span class="t" style="left:161.4px;top:1979.8px;font-size:18.6px;color:#9c9c9c;">6</span>
<span class="t" style="left:161.4px;top:2039.0px;font-size:18.6px;color:#9c9c9c;">3</span>
<span class="t" style="left:161.4px;top:2058.5px;font-size:18.6px;color:#9c9c9c;">8</span>
<span class="t" style="left:171.0px;top:2117.4px;font-size:20.8px;color:#ececec;letter-spacing:0.59px;">33.33%</span>
<span class="t" style="left:345.0px;top:2117.9px;font-size:20.2px;color:#bdbdbd;letter-spacing:0.55px;">Doc: 38.7M/130.0M</span>
<!-- p4_tools -->
<svg class="b" style="left:0.0px;top:0.0px;" width="160" height="920" viewBox="0 0 160 920"><rect x="7.6" y="173.4" width="62.8" height="49.6" rx="4.5" fill="#1f1f1f" stroke="#3e3e3e" stroke-width="1.4"/><g transform="translate(39.2,199) scale(1)"><path d="M0,-15 L5.2,-8.6 L1.4,-8.6 L1.4,-1.4 L8.6,-1.4 L8.6,-5.2 L15,0 L8.6,5.2 L8.6,1.4 L1.4,1.4 L1.4,8.6 L5.2,8.6 L0,15 L-5.2,8.6 L-1.4,8.6 L-1.4,1.4 L-8.6,1.4 L-8.6,5.2 L-15,0 L-8.6,-5.2 L-8.6,-1.4 L-1.4,-1.4 L-1.4,-8.6 L-5.2,-8.6 Z" fill="#d4d4d4"/></g><g transform="translate(105.4,199)"><rect x="-14.6" y="-12.6" width="29.2" height="24.4" fill="none" stroke="#d4d4d4" stroke-width="2.3" stroke-dasharray="7.3,4.4" stroke-dashoffset="3.6"/></g><g transform="translate(39.2,251)"><path d="M-14,-10.5 L-2,-3 L14,-15.5 L14,2.5 L-0.5,8 L-4.5,1.5 Z" fill="none" stroke="#d4d4d4" stroke-width="2.3" stroke-linejoin="round"/><circle cx="-2" cy="5.5" r="3.4" fill="#323232" stroke="#d4d4d4" stroke-width="2"/><path d="M-4.8,7.5 L-14,11.5 M-1,8.8 L-6.5,16" stroke="#d4d4d4" stroke-width="2.2" stroke-linecap="round"/></g><g transform="translate(105.4,251)"><ellipse cx="-8.4" cy="1" rx="8.4" ry="12" fill="none" stroke="#d4d4d4" stroke-width="2.5" stroke-dasharray="2.5,2.77"/><path d="M18,-13.6 L18,-5 L10.2,3.4 L5.4,-1 Z" fill="#d4d4d4"/><path d="M4.2,0.2 L9,4.6 C10.4,10.6 3,13.4 -4,10.8 C0.4,9 -1.6,2.2 4.2,0.2 Z" fill="#d4d4d4"/></g><g transform="translate(39.2,303)"><path d="M-19,-9.6 H-13.6 M-9.8,-16.6 V7.8 H4.4 M-6,-9.6 H8.6 V15.4 M12.4,7.8 H17.4" fill="none" stroke="#d4d4d4" stroke-width="3.2"/></g><g transform="translate(105.4,303)"><rect x="-14" y="-11" width="28" height="22" fill="#4a4a4a" stroke="#d4d4d4" stroke-width="2"/><path d="M-14,-11 L14,11 M14,-11 L-14,11" stroke="#d4d4d4" stroke-width="2"/><path d="M-16.6,-13.6h4.4v4.4h-4.4z M12.2,-13.6h4.4v4.4h-4.4z M-16.6,9.2h4.4v4.4h-4.4z M12.2,9.2h4.4v4.4h-4.4z" fill="#d4d4d4"/></g><g transform="translate(39.2,355)"><path d="M1.5,-4.5 L-12.8,9.8 C-15.6,12.6 -12.6,16.6 -9.2,14 L5.4,-0.6" fill="none" stroke="#d4d4d4" stroke-width="2.4" stroke-linejoin="round"/><g transform="rotate(45 6.5 -6.5)"><rect x="-2.5" y="-9.6" width="18" height="5.6" fill="#d4d4d4"/><path d="M2.4,-9 L2.4,-16 C2.4,-22 10.6,-22 10.6,-16 L10.6,-9 Z" fill="#d4d4d4"/><rect x="2.6" y="-4.6" width="7.8" height="5" fill="#d4d4d4"/></g></g><g transform="translate(105.4,355)"><g transform="rotate(-40)"><rect x="-17" y="-6.8" width="34" height="13.6" rx="2.2" fill="#d4d4d4"/><rect x="-6" y="-6.8" width="12" height="13.6" fill="#323232"/><g fill="#d4d4d4"><circle cx="-3.3" cy="-3.4" r="1.45"/><circle cx="0" cy="-3.4" r="1.45"/><circle cx="3.3" cy="-3.4" r="1.45"/><circle cx="-3.3" cy="0" r="1.45"/><circle cx="0" cy="0" r="1.45"/><circle cx="3.3" cy="0" r="1.45"/><circle cx="-3.3" cy="3.4" r="1.45"/><circle cx="0" cy="3.4" r="1.45"/><circle cx="3.3" cy="3.4" r="1.45"/></g></g><path d="M-7,-13.5 A7,7 0 1 0 -12,-1.5" fill="none" stroke="#d4d4d4" stroke-width="2" stroke-dasharray="2,2.4"/></g><g transform="translate(39.2,407)"><path d="M15.4,-15.6 C13.6,-8 6.4,-0.4 0.2,5.4 L-4.6,1 C0.6,-6.6 8,-13.4 15.4,-15.6 Z" fill="#d4d4d4"/><path d="M-5.8,2 L-1,6.6 C-0.4,12.8 -7.6,16.2 -15,13.8 C-10.6,11.4 -11.8,4 -5.8,2 Z" fill="#d4d4d4"/></g><g transform="translate(105.4,407)"><path d="M0,-15.5 A6.6,6.6 0 0 1 4.2,-3.8 L3.4,3.5 L12,3.5 L13.5,5 L13.5,10.6 L-13.5,10.6 L-13.5,5 L-12,3.5 L-3.4,3.5 L-4.2,-3.8 A6.6,6.6 0 0 1 0,-15.5 Z" fill="#d4d4d4"/><rect x="-13.5" y="13" width="27" height="2.4" fill="#d4d4d4"/></g><g transform="translate(39.2,459)"><path d="M15.4,-15.6 C13.8,-8.6 8,-1.4 3.2,4.4 L-1.4,0.6 C3,-6.6 9,-13 15.4,-15.6 Z" fill="#d4d4d4"/><path d="M-2.6,1.6 L2,5.6 C2.4,12 -4.6,16 -12.6,14 C-8,11.6 -8.8,3.8 -2.6,1.6 Z" fill="#d4d4d4"/><path d="M-13,-6.5 C-9,-11 -3,-11.5 0.5,-9" fill="none" stroke="#d4d4d4" stroke-width="2"/><path d="M-19,-2.5 L-14.5,-11.5 L-8.5,-3.5 Z" fill="#d4d4d4"/><path d="M11.5,-1 C13,5 9,11 4,13" fill="none" stroke="#d4d4d4" stroke-width="2" stroke-dasharray="1.8,2.6"/></g><g transform="translate(105.4,459)"><path d="M-7.6,-2.2 L3.8,-13.6 L13.6,-5.6 L2.2,5.4 Z" fill="#d4d4d4"/><path d="M-7.6,-2.2 L-14.4,4.6 L-8,12.4 L15,12.4 M-8,12.4 L2.2,5.4" fill="none" stroke="#d4d4d4" stroke-width="2" stroke-linejoin="round"/></g><g transform="translate(39.2,511)"><path d="M-2.5,-15 L-17,-1.5 L-5,12.5 L10,-1 Z" fill="none" stroke="#d4d4d4" stroke-width="2.4" stroke-linejoin="round"/><path d="M-1,-3 C-1,-14 -6,-18.5 -8.5,-15.5 C-10,-13.5 -8,-9 -5,-6" fill="none" stroke="#d4d4d4" stroke-width="2.2"/><circle cx="-1" cy="-2.5" r="2.4" fill="#d4d4d4"/><path d="M9.5,0.5 L3.5,6 C8,4.5 9,7 9.5,9 C10.5,12.5 16,12 16,7.5 C16,4 12,1 9.5,0.5 Z" fill="#d4d4d4"/></g><g transform="translate(105.4,511)"><path d="M0,-16 C3,-8.5 11,-2 11,4.5 A11,11 0 0 1 -11,4.5 C-11,-2 -3,-8.5 0,-16 Z" fill="#d4d4d4"/></g><g transform="translate(39.2,563)"><ellipse cx="0.5" cy="0" rx="16" ry="13.6" fill="#d4d4d4" transform="rotate(-12)"/><circle cx="-9" cy="-5" r="1.2" fill="#323232"/><circle cx="-4" cy="-8" r="1" fill="#323232"/><circle cx="1" cy="-9" r="1.2" fill="#323232"/><circle cx="6" cy="-8" r="1" fill="#323232"/><circle cx="10" cy="-4" r="1.2" fill="#323232"/><circle cx="-11" cy="0" r="1" fill="#323232"/><circle cx="-6" cy="-2" r="1.3" fill="#323232"/><circle cx="-1" cy="-4" r="1" fill="#323232"/><circle cx="4" cy="-3" r="1.3" fill="#323232"/><circle cx="9" cy="1" r="1" fill="#323232"/><circle cx="12" cy="5" r="1" fill="#323232"/><circle cx="-10" cy="5" r="1.2" fill="#323232"/><circle cx="-5" cy="3" r="1" fill="#323232"/><circle cx="0" cy="1" r="1.3" fill="#323232"/><circle cx="5" cy="3" r="1" fill="#323232"/><circle cx="8" cy="7" r="1.2" fill="#323232"/><circle cx="-7" cy="9" r="1" fill="#323232"/><circle cx="-2" cy="7" r="1.3" fill="#323232"/><circle cx="3" cy="8" r="1" fill="#323232"/><circle cx="-3" cy="11" r="1" fill="#323232"/><circle cx="2" cy="12" r="1" fill="#323232"/><circle cx="-12" cy="-3" r="0.9" fill="#323232"/><circle cx="7" cy="-1" r="0.9" fill="#323232"/><circle cx="-8" cy="1.5" r="0.9" fill="#323232"/><circle cx="1.5" cy="4.5" r="0.9" fill="#323232"/><circle cx="-4.5" cy="6" r="0.9" fill="#323232"/><circle cx="6" cy="10" r="0.9" fill="#323232"/><circle cx="11" cy="-1" r="0.9" fill="#323232"/><circle cx="-1.5" cy="-0.5" r="0.9" fill="#323232"/><circle cx="3" cy="-6.5" r="0.9" fill="#323232"/><circle cx="-7" cy="-8" r="0.9" fill="#323232"/><circle cx="-13" cy="3" r="0.9" fill="#323232"/><circle cx="-9" cy="8" r="0.9" fill="#323232"/></g><g transform="translate(104.8,564.4)"><path d="M6.5,-12.5 L13.5,-6 L9,5.5 L-10.5,11 L-6,-8 Z" fill="none" stroke="#d4d4d4" stroke-width="2.3" stroke-linejoin="round"/><path d="M-10.5,11 L-0.5,1" stroke="#d4d4d4" stroke-width="2"/><circle cx="0.5" cy="0" r="2.6" fill="#d4d4d4"/><path d="M7.5,-14.5 L11,-17.5 L18,-11 L15.5,-7.5 Z" fill="#d4d4d4"/><path d="M-12.5,8.5 L-13,13 L-8.5,13" fill="none" stroke="#d4d4d4" stroke-width="1.6"/></g><g transform="translate(105.4,615)"><path d="M-9.5,-16.5 L-9.5,9 L-3.5,4 L0.8,14.2 L5,12.4 L0.8,2.6 L9,2 Z" fill="#d4d4d4"/></g><g transform="translate(39.2,667)"><rect x="-14.6" y="-12.2" width="29.2" height="23.4" fill="#585858" stroke="#d4d4d4" stroke-width="2.2"/></g><g transform="translate(105.4,667)"><path d="M-6,13.5 C-9,9 -12.5,4.5 -14.5,1.5 C-15.5,-0.5 -13,-2.5 -11,-0.5 L-6.5,3.5 L-6.5,-10 C-6.5,-12.6 -3,-12.6 -3,-10 L-3,-2 L-2,-2 L-2,-13 C-2,-15.6 1.5,-15.6 1.5,-13 L1.5,-2 L2.5,-2 L2.5,-11.5 C2.5,-14 6,-14 6,-11.5 L6,-1 L7,-1 L7,-7.5 C7,-10 10.5,-10 10.5,-7.5 L10.5,5 C10.5,9 9,11 7.5,13.5 Z" fill="#d4d4d4"/></g><g transform="translate(39.2,719)"><circle cx="-3.5" cy="-3.5" r="10.6" fill="none" stroke="#d4d4d4" stroke-width="2.4"/><path d="M4.5,4.8 L14,14" stroke="#d4d4d4" stroke-width="3.4" stroke-linecap="round"/><path d="M-4,-10 A6.4,6.4 0 0 1 2.6,-5" fill="none" stroke="#d4d4d4" stroke-width="1.6"/></g><g transform="translate(105.4,719)"><circle cx="-11.8" cy="1" r="3.4" fill="#d4d4d4"/><circle cx="0" cy="1" r="3.4" fill="#d4d4d4"/><circle cx="11.8" cy="1" r="3.4" fill="#d4d4d4"/></g><path d="M63.8,210 L63.8,215.6 L58.2,215.6 Z" fill="#9a9a9a"/><path d="M130,210 L130,215.6 L124.4,215.6 Z" fill="#9a9a9a"/><path d="M63.8,262 L63.8,267.6 L58.2,267.6 Z" fill="#9a9a9a"/><path d="M130,262 L130,267.6 L124.4,267.6 Z" fill="#9a9a9a"/><path d="M63.8,314 L63.8,319.6 L58.2,319.6 Z" fill="#9a9a9a"/><path d="M130,314 L130,319.6 L124.4,319.6 Z" fill="#9a9a9a"/><path d="M63.8,366 L63.8,371.6 L58.2,371.6 Z" fill="#9a9a9a"/><path d="M130,366 L130,371.6 L124.4,371.6 Z" fill="#9a9a9a"/><path d="M63.8,418 L63.8,423.6 L58.2,423.6 Z" fill="#9a9a9a"/><path d="M130,418 L130,423.6 L124.4,423.6 Z" fill="#9a9a9a"/><path d="M63.8,470 L63.8,475.6 L58.2,475.6 Z" fill="#9a9a9a"/><path d="M130,470 L130,475.6 L124.4,475.6 Z" fill="#9a9a9a"/><path d="M63.8,522 L63.8,527.6 L58.2,527.6 Z" fill="#9a9a9a"/><path d="M130,522 L130,527.6 L124.4,527.6 Z" fill="#9a9a9a"/><path d="M63.8,574 L63.8,579.6 L58.2,579.6 Z" fill="#9a9a9a"/><path d="M130,574 L130,579.6 L124.4,579.6 Z" fill="#9a9a9a"/><path d="M63.8,626 L63.8,631.6 L58.2,631.6 Z" fill="#9a9a9a"/><path d="M130,626 L130,631.6 L124.4,631.6 Z" fill="#9a9a9a"/><path d="M63.8,678 L63.8,683.6 L58.2,683.6 Z" fill="#9a9a9a"/><path d="M130,678 L130,683.6 L124.4,683.6 Z" fill="#9a9a9a"/><path d="M130,730 L130,735.6 L124.4,735.6 Z" fill="#9a9a9a"/><rect x="65" y="791" width="51" height="50.5" fill="#ffffff" stroke="#1d1d1d" stroke-width="1.6"/><rect x="34.6" y="758.4" width="51" height="51" fill="#f8f8f8" stroke="#1d1d1d" stroke-width="1.6"/><path d="M104,763.6 L113.6,763.6 L113.6,773" fill="none" stroke="#d4d4d4" stroke-width="2"/><path d="M99.4,763.6 L105.4,759 L105.4,768.2 Z M113.6,779 L109,772.6 L118.2,772.6 Z" fill="#d4d4d4"/><rect x="42" y="833" width="13" height="13" fill="#dcdcdc"/><rect x="35" y="826" width="13" height="13" fill="#0a0a0a" stroke="#dcdcdc" stroke-width="1.5"/><rect x="22.6" y="870" width="32.6" height="24.6" fill="none" stroke="#d4d4d4" stroke-width="1.8"/><circle cx="39" cy="882.3" r="8" fill="none" stroke="#d4d4d4" stroke-width="2" stroke-dasharray="2,2.2"/><rect x="88.6" y="875.4" width="22.6" height="18" fill="#323232" stroke="#d4d4d4" stroke-width="1.8"/><rect x="99" y="869" width="22.4" height="17.6" fill="#323232" stroke="#d4d4d4" stroke-width="1.8"/><path d="M130,891 L130,896.6 L124.4,896.6 Z" fill="#9a9a9a"/></svg>
<span class="t" style="left:26.2px;top:594.1px;font-size:40.0px;color:#d4d4d4;font-weight:700;font-family:'Liberation Serif',serif;">T</span>
<!-- p5_right_top -->
<div class="b" style="left:1597.7px;top:115.0px;width:562.3px;height:24.5px;background:#262626;"></div>
<div class="b" style="left:1597.7px;top:139.5px;width:562.3px;height:34.5px;background:#262626;"></div>
<div class="b" style="left:1597.7px;top:139.5px;width:159.0px;height:34.5px;background:#323232;"></div>
<div class="b" style="left:1597.7px;top:174.0px;width:562.3px;height:264.5px;background:#323232;"></div>
<div class="b" style="left:1597.7px;top:438.5px;width:562.3px;height:4.5px;background:#232323;"></div>
<div class="b" style="left:1597.7px;top:443.0px;width:562.3px;height:34.5px;background:#282828;"></div>
<div class="b" style="left:1726.7px;top:443.0px;width:2.0px;height:34.5px;background:#232323;"></div>
<div class="b" style="left:1864.7px;top:443.0px;width:134.0px;height:34.5px;background:#323232;"></div>
<div class="b" style="left:1597.7px;top:477.5px;width:562.3px;height:435.0px;background:#323232;"></div>
<div class="b" style="left:1597.7px;top:544.0px;width:562.3px;height:2.0px;background:#292929;"></div>
<div class="b" style="left:1606.0px;top:769.4px;width:554.0px;height:1.6px;background:#282828;"></div>
<div class="b" style="left:1597.7px;top:912.5px;width:562.3px;height:4.5px;background:#232323;"></div>
<svg class="b" style="left:0.0px;top:0.0px;" width="2160" height="920" viewBox="0 0 2160 920"><rect x="1646.4" y="668" width="120.4" height="30" fill="#262626" stroke="#4c4c4c" stroke-width="2"/><rect x="1866.2" y="668" width="120.6" height="30" fill="#262626" stroke="#4c4c4c" stroke-width="2"/><path d="M1610,739.6 L1634.5,739.6 M1610,739.6 L1628,724.6" fill="none" stroke="#d2d2d2" stroke-width="1.8"/><path d="M1623,728.5 A13,13 0 0 1 1629.6,739.6" fill="none" stroke="#d2d2d2" stroke-width="1.6"/><rect x="1647" y="715.8" width="117.6" height="32.4" rx="4" fill="#262626" stroke="#454545" stroke-width="1.6"/><path d="M1735.8,716 L1735.8,748" stroke="#454545" stroke-width="1.6"/><path d="M1744.85,732 L1750.6,738 L1756.35,732" fill="none" stroke="#d2d2d2" stroke-width="2" stroke-linecap="round" stroke-linejoin="round"/><rect x="1619.6" y="489.6" width="45" height="45" rx="4.5" fill="#1f1f1f" stroke="#3c3c3c" stroke-width="1.6"/><g transform="translate(1631,501) scale(1)" fill="#d6d6d6"><rect x="4.2" y="0" width="7.8" height="10.6"/><path d="M14,0.2 L20,5.9 L14,5.9 Z"/><path d="M12.5,7.5 H20 V21 H12 V17.1 H15.9 V10.4 H12.5 Z"/><rect x="0" y="12.9" width="10.1" height="10.1"/></g><g transform="translate(1965.5,584)"><path d="M-7.6,-4.6 A9.2,9.2 0 1 1 -2.4,8.9" fill="none" stroke="#dcdcdc" stroke-width="2.6"/><path d="M-14,-5 L-3.2,-5 L-8.6,3.4 Z" fill="#dcdcdc"/><rect x="-12" y="11.6" width="24" height="2" fill="#dcdcdc"/></g><g transform="translate(1709.7,235.8)"><circle r="8.6" fill="none" stroke="#d2d2d2" stroke-width="2"/><path d="M0,-8.6 A8.6,8.6 0 0 1 0,8.6 Z" fill="#d2d2d2"/><path d="M0,-12.2 L0,-16.4" stroke="#d2d2d2" stroke-width="2.2" stroke-linecap="round" transform="rotate(0)"/><path d="M0,-12.2 L0,-16.4" stroke="#d2d2d2" stroke-width="2.2" stroke-linecap="round" transform="rotate(45)"/><path d="M0,-12.2 L0,-16.4" stroke="#d2d2d2" stroke-width="2.2" stroke-linecap="round" transform="rotate(90)"/><path d="M0,-12.2 L0,-16.4" stroke="#d2d2d2" stroke-width="2.2" stroke-linecap="round" transform="rotate(135)"/><path d="M0,-12.2 L0,-16.4" stroke="#d2d2d2" stroke-width="2.2" stroke-linecap="round" transform="rotate(180)"/><path d="M0,-12.2 L0,-16.4" stroke="#d2d2d2" stroke-width="2.2" stroke-linecap="round" transform="rotate(225)"/><path d="M0,-12.2 L0,-16.4" stroke="#d2d2d2" stroke-width="2.2" stroke-linecap="round" transform="rotate(270)"/><path d="M0,-12.2 L0,-16.4" stroke="#d2d2d2" stroke-width="2.2" stroke-linecap="round" transform="rotate(315)"/></g><g transform="translate(1757.8,235.8)"><path d="M-17.5,9.6 L-17.5,-1 L-15.5,-1 L-15,-6 L-13.5,1 L-12,1 L-11,-4.5 L-9.5,0 L-8,-3 L-7,-9 L-5.5,-1 L-4,-4 L-3,-11 L-1.5,-3 L0,-7 L1,-2 L2.5,-2 L3.5,-10 L5,-1.5 L6.5,-5.5 L8,1 L9.5,-4.5 L11,-8.5 L12.5,0 L14,-3 L15.5,-6.5 L17,0 L17.5,0 L17.5,9.6 Z" fill="#d2d2d2"/></g><g transform="translate(1806,235.8)"><rect x="-15.5" y="-12" width="31" height="24" fill="none" stroke="#858585" stroke-width="1.6"/><path d="M-5.2,-12 V12 M5.2,-12 V12 M-15.5,-4 H15.5 M-15.5,4 H15.5" stroke="#858585" stroke-width="1.5"/><path d="M-15.5,11.5 C-2,11 2,-11 15.5,-11.5" fill="none" stroke="#d2d2d2" stroke-width="1.8"/></g><g transform="translate(1853.8,235.8)"><rect x="-15.2" y="-11.8" width="30.4" height="23.6" fill="#323232" stroke="#d2d2d2" stroke-width="1.8"/><path d="M-15.2,11.8 L15.2,-11.8 L-15.2,-11.8 Z" fill="#d2d2d2"/><path d="M-10.6,-5 H-3.8 M-7.2,-8.4 V-1.6" stroke="#323232" stroke-width="1.8"/><path d="M4.5,5.6 H11" stroke="#d2d2d2" stroke-width="1.8"/></g><defs><radialGradient id="vib" cx="50%%" cy="35%%" r="55%%"><stop offset="0" stop-color="#2a2a2a"/><stop offset="1" stop-color="#9a9a9a"/></radialGradient></defs><g transform="translate(1902,235.8)"><path d="M-14,-10.5 L14,-10.5 L0,13 Z" fill="url(#vib)" stroke="#d2d2d2" stroke-width="2" stroke-linejoin="miter"/></g><defs><linearGradient id="hs1" x1="0" x2="1"><stop offset="0" stop-color="#111"/><stop offset=".22" stop-color="#aaa"/><stop offset=".4" stop-color="#222"/><stop offset=".6" stop-color="#bbb"/><stop offset=".8" stop-color="#222"/><stop offset="1" stop-color="#777"/></linearGradient><linearGradient id="hs2" x1="0" x2="1"><stop offset="0" stop-color="#1a1a1a"/><stop offset="1" stop-color="#e0e0e0"/></linearGradient></defs><g transform="translate(1685.8,290.2)"><rect x="-15.2" y="-12" width="30.4" height="24" fill="#323232" stroke="#d2d2d2" stroke-width="1.8"/><rect x="-13" y="-9.8" width="26" height="7.6" fill="url(#hs1)"/><rect x="-13" y="-0.2" width="26" height="10" fill="url(#hs2)"/></g><g transform="translate(1733.6,290.2)"><circle cx="0" cy="-8.6" r="2.8" fill="none" stroke="#d2d2d2" stroke-width="1.8"/><path d="M-14,-6 H-2.8 M2.8,-6 H14" stroke="#d2d2d2" stroke-width="1.8"/><path d="M-11,-5.4 L-15.8,6 M-11,-5.4 L-6.2,6 M11,-5.4 L6.2,6 M11,-5.4 L15.8,6" stroke="#d2d2d2" stroke-width="1.5"/><path d="M-16.6,6 A5.7,5.7 0 0 0 -5.4,6 Z M5.4,6 A5.7,5.7 0 0 0 16.6,6 Z" fill="#d2d2d2"/></g><g transform="translate(1781.7,290.2)"><rect x="-15.2" y="-12" width="30.4" height="24" fill="#323232" stroke="#d2d2d2" stroke-width="1.8"/><rect x="-1" y="-12" width="16.2" height="24" fill="#d2d2d2"/></g><g transform="translate(1830.2,290.2)"><path d="M-17,-7.6 L-9.5,-7.6 L-7,-11.6 L3,-11.6 L5.5,-7.6 L12,-7.6 L12,9.6 L-17,9.6 Z" fill="#d2d2d2"/><circle cx="-2.6" cy="0.6" r="6" fill="#323232"/><circle cx="-2.6" cy="0.6" r="3.6" fill="#d2d2d2"/><circle cx="10" cy="9" r="7.6" fill="#323232"/><circle cx="10" cy="9" r="5.6" fill="#4a4a4a" stroke="#d2d2d2" stroke-width="1.8"/></g><g transform="translate(1877.4,290.2)"><circle cx="0" cy="-5.6" r="9.4" fill="#7e7e7e"/><circle cx="-6.6" cy="5" r="9.4" fill="#c8c8c8" opacity=".85"/><circle cx="6.6" cy="5" r="9.4" fill="#a4a4a4" opacity=".8"/><path d="M0,-1 C3,1 4,5 2.5,9.5 C0,10.5 -1.5,10 -2.5,9.5 C-4,5 -3,1 0,-1 Z" fill="#2e2e2e"/></g><g transform="translate(1925.8,290.2)"><rect x="-15.2" y="-12" width="30.4" height="24" fill="none" stroke="#d2d2d2" stroke-width="1.8"/><path d="M-5.2,-12 V12 M5.2,-12 V12 M-15.2,-4 H15.2 M-15.2,4 H15.2" stroke="#d2d2d2" stroke-width="1.8"/><rect x="-14.3" y="-11.1" width="8.2" height="6.2" fill="#8a8a8a"/><rect x="-4.3" y="-11.1" width="8.6" height="6.2" fill="#6e6e6e"/></g><g transform="translate(1709.7,344)"><rect x="-15.2" y="-12" width="30.4" height="24" fill="#323232" stroke="#d2d2d2" stroke-width="1.8"/><path d="M-15.2,12 L15.2,-12 L15.2,12 Z" fill="#d2d2d2"/><ellipse cx="0" cy="0" rx="10" ry="7.4" fill="#2c2c2c" transform="rotate(-38)"/><path d="M-14.4,11.4 L14.4,-11.4" stroke="#d2d2d2" stroke-width="1.8"/></g><g transform="translate(1757.8,344)"><rect x="-15.2" y="-12" width="30.4" height="24" fill="#888" stroke="#d2d2d2" stroke-width="1.8"/><clipPath id="pz"><rect x="-14.3" y="-11.1" width="28.6" height="22.2"/></clipPath><g clip-path="url(#pz)"><path d="M-16,3 C-6,3 0,-10 16,-12 L16,-18 L-16,-18 Z" fill="#d2d2d2"/><path d="M-16,12 C-4,11 2,-2 16,-3 L16,3 C6,4 0,14 -10,14 Z" fill="#d2d2d2"/><path d="M0,14 C6,10 10,7 16,7 L16,14 Z" fill="#5a5a5a"/></g></g><g transform="translate(1806,344)"><rect x="-15.2" y="-12" width="30.4" height="24" fill="#d2d2d2" stroke="#d2d2d2" stroke-width="1.8"/><path d="M-13,4 L-13,-1 L-6,-1 L-6,-6 L3,-6 L3,-10.4 L13.4,-10.4 L13.4,-5 L8,-5 L8,1.6 L-1,1.6 L-1,4 Z" fill="#2a2a2a"/><path d="M-3,10.4 L-3,8 L5,8 L5,5.4 L13.4,5.4 L13.4,10.4 Z" fill="#2a2a2a"/></g><g transform="translate(1853.8,344)"><rect x="-15.2" y="-12" width="30.4" height="24" fill="#d2d2d2" stroke="#d2d2d2" stroke-width="1.8"/><path d="M-14.3,-11.1 L0,0 L-14.3,11.1 Z" fill="#4e4e4e"/><path d="M14.3,-11.1 L0,0 L14.3,11.1 Z" fill="#4e4e4e"/><path d="M-14.3,11.1 L0,0 L14.3,11.1 Z" fill="#8a8a8a"/></g><defs><linearGradient id="gm" x1="0" x2="1"><stop offset="0" stop-color="#262626"/><stop offset="1" stop-color="#e6e6e6"/></linearGradient></defs><g transform="translate(1902,344)"><rect x="-15.2" y="-12" width="30.4" height="24" fill="url(#gm)" stroke="#d2d2d2" stroke-width="1.8"/></g></svg>
<span class="t" style="left:1612.0px;top:144.2px;font-size:21.0px;color:#ececec;font-weight:700;letter-spacing:0.28px;">Adjustments</span>
<span class="t" style="left:1614.3px;top:186.4px;font-size:20.6px;color:#b4b4b4;letter-spacing:0.46px;">Add an adjustment</span>
<span class="t" style="left:1612.0px;top:446.9px;font-size:21.0px;color:#a6a6a6;font-weight:700;letter-spacing:0.12px;">Character</span>
<span class="t" style="left:1742.3px;top:446.9px;font-size:21.0px;color:#a6a6a6;font-weight:700;letter-spacing:0.02px;">Paragraph</span>
<span class="t" style="left:1878.3px;top:446.9px;font-size:21.0px;color:#ececec;font-weight:700;letter-spacing:0.09px;">Properties</span>
<span class="t" style="left:1674.3px;top:503.6px;font-size:20.6px;color:#bcbcbc;letter-spacing:0.47px;">Embedded Smart Object</span>
<span class="t" style="left:1614.3px;top:575.6px;font-size:20.6px;color:#c4c4c4;font-weight:700;letter-spacing:0.53px;">Transform</span>
<span class="t" style="left:1614.6px;top:628.4px;font-size:20.6px;color:#b2b2b2;letter-spacing:-1.39px;">W:</span>
<span class="t" style="left:1649.4px;top:628.4px;font-size:20.6px;color:#b2b2b2;letter-spacing:0.32px;">12.48 cm</span>
<span class="t" style="left:1836.4px;top:628.4px;font-size:20.6px;color:#b2b2b2;letter-spacing:-1.00px;">H:</span>
<span class="t" style="left:1867.5px;top:628.4px;font-size:20.6px;color:#b2b2b2;letter-spacing:-0.05px;">15.6 cm</span>
<span class="t" style="left:1616.8px;top:672.2px;font-size:20.6px;color:#b2b2b2;letter-spacing:-1.46px;">X:</span>
<span class="t" style="left:1838.6px;top:672.2px;font-size:20.6px;color:#b2b2b2;letter-spacing:-1.33px;">Y:</span>
<span class="t" style="left:1652.5px;top:672.2px;font-size:20.6px;color:#e6e6e6;letter-spacing:0.45px;">9.32 cm</span>
<span class="t" style="left:1872.0px;top:672.2px;font-size:20.6px;color:#e6e6e6;letter-spacing:-0.13px;">8.17 cm</span>
<span class="t" style="left:1654.7px;top:722.5px;font-size:20.6px;color:#e6e6e6;letter-spacing:0.57px;">0.00°</span>
<span class="t" style="left:1614.3px;top:790.2px;font-size:20.6px;color:#b8b8b8;letter-spacing:0.52px;">energy system collapse.jpg</span>
<!-- p6_layers -->
<div class="b" style="left:1597.7px;top:917.0px;width:562.3px;height:34.5px;background:#262626;"></div>
<div class="b" style="left:1597.7px;top:917.0px;width:97.4px;height:34.5px;background:#323232;"></div>
<div class="b" style="left:1597.7px;top:951.5px;width:562.3px;height:180.0px;background:#323232;"></div>
<div class="b" style="left:1597.7px;top:1014.4px;width:562.3px;height:1.8px;background:#2a2a2a;"></div>
<div class="b" style="left:1597.7px;top:1070.0px;width:562.3px;height:1.8px;background:#2a2a2a;"></div>
<div class="b" style="left:1597.7px;top:1131.4px;width:562.3px;height:964.4px;background:#2b2b2b;"></div>
<div class="b" style="left:1597.7px;top:1131.4px;width:61.2px;height:84.0px;background:#323232;"></div>
<div class="b" style="left:1658.9px;top:1131.4px;width:501.1px;height:84.0px;background:#4b4b4b;"></div>
<div class="b" style="left:1597.7px;top:1215.4px;width:562.3px;height:1.6px;background:#292929;"></div>
<div class="b" style="left:1597.7px;top:1217.0px;width:562.3px;height:82.4px;background:#323232;"></div>
<div class="b" style="left:1657.5px;top:1217.0px;width:1.4px;height:82.4px;background:#2a2a2a;"></div>
<div class="b" style="left:1597.7px;top:1299.4px;width:562.3px;height:1.8px;background:#292929;"></div>
<div class="b" style="left:1597.7px;top:1301.2px;width:562.3px;height:48.0px;background:#323232;"></div>
<div class="b" style="left:1597.9px;top:1301.2px;width:59.4px;height:48.0px;background:#8f2c2f;"></div>
<div class="b" style="left:1597.7px;top:1349.2px;width:562.3px;height:2.0px;background:#292929;"></div>
<div class="b" style="left:1597.7px;top:1351.4px;width:562.3px;height:48.0px;background:#323232;"></div>
<div class="b" style="left:1597.9px;top:1351.4px;width:59.4px;height:48.0px;background:#935400;"></div>
<div class="b" style="left:1597.7px;top:1399.4px;width:562.3px;height:2.0px;background:#292929;"></div>
<div class="b" style="left:1597.7px;top:1401.4px;width:562.3px;height:48.0px;background:#323232;"></div>
<div class="b" style="left:1597.9px;top:1401.4px;width:59.4px;height:48.0px;background:#935400;"></div>
<div class="b" style="left:1597.7px;top:1449.4px;width:562.3px;height:2.0px;background:#292929;"></div>
<div class="b" style="left:1597.7px;top:1451.4px;width:562.3px;height:48.0px;background:#323232;"></div>
<div class="b" style="left:1597.9px;top:1451.4px;width:59.4px;height:48.0px;background:#3e6636;"></div>
<div class="b" style="left:1597.7px;top:1499.4px;width:562.3px;height:2.0px;background:#292929;"></div>
<div class="b" style="left:1597.7px;top:2095.8px;width:562.3px;height:48.4px;background:#323232;"></div>
<svg class="b" style="left:0.0px;top:0.0px;" width="2160" height="2160" viewBox="0 0 2160 2160"><rect x="1605.6" y="970.4" width="174.6" height="35.4" rx="4.5" fill="#262626" stroke="#434343" stroke-width="1.6"/><circle cx="1630" cy="986.4" r="5.8" fill="none" stroke="#d2d2d2" stroke-width="2.2"/><path d="M1634.4,991 L1640.6,997.4" stroke="#d2d2d2" stroke-width="2.8" stroke-linecap="round"/><path d="M1760,987.2 L1766,993.6 L1772,987.2" fill="none" stroke="#d2d2d2" stroke-width="2" stroke-linecap="round" stroke-linejoin="round"/><g transform="translate(1815.6,988.5) scale(1)"><rect x="-11.4" y="-9" width="22.8" height="18" fill="none" stroke="#d2d2d2" stroke-width="1.8"/><path d="M-8.6,6 L-3.4,-1.4 L0.4,3 L3.4,0 L8.6,6 Z" fill="#d2d2d2"/></g><g transform="translate(1863.4,988.5) scale(1)"><circle r="9.8" fill="none" stroke="#d2d2d2" stroke-width="1.9"/><path d="M6.93,-6.93 A9.8,9.8 0 0 1 -6.93,6.93 Z" fill="#d2d2d2"/></g><g transform="translate(1959.7,988.5) scale(1)"><rect x="-8.6" y="-8.6" width="17.2" height="17.2" fill="none" stroke="#d2d2d2" stroke-width="1.8"/><g fill="#323232" stroke="#d2d2d2" stroke-width="1.6"><rect x="-11.4" y="-11.4" width="5.4" height="5.4"/><rect x="6" y="-11.4" width="5.4" height="5.4"/><rect x="-11.4" y="6" width="5.4" height="5.4"/><rect x="6" y="6" width="5.4" height="5.4"/></g></g><g transform="translate(2008.8,988.5) scale(1)"><path d="M-3.4,-10.4 L4.6,-10.4 L9.8,-5.2 L9.8,9.6 L2.4,9.6 L2.4,-1 L-3.4,-1 Z" fill="none" stroke="#d2d2d2" stroke-width="1.7"/><path d="M4.6,-10.4 L4.6,-5.2 L9.8,-5.2" fill="none" stroke="#d2d2d2" stroke-width="1.5"/><rect x="-9.8" y="1" width="10.4" height="10.4" fill="#d2d2d2"/></g><rect x="2044.2" y="972.8" width="17.4" height="32.4" rx="8.7" fill="#262626" stroke="#454545" stroke-width="1.6"/><circle cx="2052.9" cy="978.6" r="7.6" fill="#d8d8d8"/><rect x="1605.6" y="1026.2" width="260" height="35.4" rx="4.5" fill="#262626" stroke="#434343" stroke-width="1.6"/><path d="M1845.6,1042.8 L1851.6,1049.2 L1857.6,1042.8" fill="none" stroke="#d2d2d2" stroke-width="2" stroke-linecap="round" stroke-linejoin="round"/><rect x="1958" y="1026.2" width="101.6" height="34.6" rx="4.5" fill="#262626" stroke="#434343" stroke-width="1.6"/><path d="M2031,1026.2 v34.6" stroke="#434343" stroke-width="1.6"/><path d="M2039.8,1042.7 L2045.6,1048.9 L2051.4,1042.7" fill="none" stroke="#d2d2d2" stroke-width="2" stroke-linecap="round" stroke-linejoin="round"/><rect x="1958" y="1082" width="101.6" height="34.6" rx="4.5" fill="#262626" stroke="#434343" stroke-width="1.6"/><path d="M2031,1082 v34.6" stroke="#434343" stroke-width="1.6"/><path d="M2039.8,1098.5 L2045.6,1104.7 L2051.4,1098.5" fill="none" stroke="#d2d2d2" stroke-width="2" stroke-linecap="round" stroke-linejoin="round"/><g transform="translate(1683.9,1099.7) scale(1)"><rect x="-10.4" y="-10.4" width="20.8" height="20.8" fill="#7a7a7a"/><path d="M-7.8,-7.8 h5.2 v5.2 h-5.2 z M2.6,-7.8 h5.2 v5.2 h-5.2 z M-2.6,-2.6 h5.2 v5.2 h-5.2 z M-7.8,2.6 h5.2 v5.2 h-5.2 z M2.6,2.6 h5.2 v5.2 h-5.2 z" fill="#323232"/></g><g transform="translate(1729.3,1099.7) scale(1)"><path d="M12.6,-13 C8,-9 2.5,-2.5 -1,3.6 L-4.4,1 C0,-5.6 7,-11 12.6,-13 Z" fill="#8a8a8a"/><path d="M-5.2,2 L-1.8,4.8 C-2,10.4 -7,13.6 -13.4,12.6 C-9.4,10.4 -10.2,3.6 -5.2,2 Z" fill="#8a8a8a"/></g><g transform="translate(1771.2,1099.7) scale(0.84)"><path d="M0,-15 L5.2,-8.6 L1.4,-8.6 L1.4,-1.4 L8.6,-1.4 L8.6,-5.2 L15,0 L8.6,5.2 L8.6,1.4 L1.4,1.4 L1.4,8.6 L5.2,8.6 L0,15 L-5.2,8.6 L-1.4,8.6 L-1.4,1.4 L-8.6,1.4 L-8.6,5.2 L-15,0 L-8.6,-5.2 L-8.6,-1.4 L-1.4,-1.4 L-1.4,-8.6 L-5.2,-8.6 Z" fill="#d2d2d2"/></g><g transform="translate(1815.6,1099.7) scale(1)"><path d="M-9,-7.4 L5.4,-7.4 L9,-3.8 L9,7.4 L-9,7.4 Z" fill="none" stroke="#d2d2d2" stroke-width="1.8"/><path d="M-13.4,-11.6 H13.4 M-13.4,11.6 H13.4 M-13.4,-11.6 V11.6 M13.4,-11.6 V11.6" stroke="#d2d2d2" stroke-width="1.6" stroke-dasharray="2.4,5.6" stroke-dashoffset="1.2"/></g><g transform="translate(1859.7,1099.7) scale(1)"><rect x="-10" y="-1.6" width="20" height="13.4" rx="1.6" fill="#d2d2d2"/><path d="M-5.8,-1.6 V-5.6 A5.8,5.8 0 0 1 5.8,-5.6 V-1.6" fill="none" stroke="#d2d2d2" stroke-width="2.4"/><circle cx="0" cy="5" r="2.3" fill="#323232"/></g><g transform="translate(1628.3,1174.8) scale(1)"><path d="M-12.6,0 C-7,-8.6 7,-8.6 12.6,0 C7,8.6 -7,8.6 -12.6,0 Z" fill="#e2e2e2"/><circle r="5" fill="#323232"/><circle cx="1.4" cy="-1.6" r="1.7" fill="#e2e2e2"/></g><defs><pattern id="chk" x="1667.7" y="1142.7" width="7.8" height="7.8" patternUnits="userSpaceOnUse"><rect width="7.8" height="7.8" fill="#fff"/><rect width="3.9" height="3.9" fill="#9c9c9c"/><rect x="3.9" y="3.9" width="3.9" height="3.9" fill="#9c9c9c"/></pattern></defs><rect x="1666.5" y="1140.5" width="65.8" height="65.8" fill="url(#chk)" stroke="#666" stroke-width="2.3"/><rect x="1687.3" y="1159.3" width="23.7" height="30.5" fill="#1c1c1c"/><path d="M1690,1163 h5 v2 h4 v-2 h6 v3 h-3 v2 h3 v3 h-4 M1690,1168 h8 v2 h-8 z M1691,1172 h4 v6 h-4 z M1697,1173 h5 v2 h-5 z M1690,1180 h6 v2 h-6 z M1690,1184 l3,2 l3,-2 l0,4 l-3,-2 l-3,2 z M1698,1185 h4 v3 h-4 z M1703,1166 a4,4 0 1 1 -0.1,0 M1706,1176 h3 v3 h-3z" fill="#f0f0f0" stroke="#f0f0f0" stroke-width=".6"/><rect x="1701.6" y="1176.6" width="30" height="30" fill="#4d4d4d" stroke="#6a6a6a" stroke-width="1.6"/><g transform="translate(1706,1181) scale(0.98)" fill="#dcdcdc"><rect x="4.2" y="0" width="7.8" height="10.6"/><path d="M14,0.2 L20,5.9 L14,5.9 Z"/><path d="M12.5,7.5 H20 V21 H12 V17.1 H15.9 V10.4 H12.5 Z"/><rect x="0" y="12.9" width="10.1" height="10.1"/></g><path d="M1663.4,1161.1 V1137.5 H1687 M1712,1137.5 H1735.6 V1161.1 M1735.6,1186.1 V1209.7 H1712 M1687,1209.7 H1663.4 V1186.1" fill="none" stroke="#fff" stroke-width="3"/><g transform="translate(2134,1174.4) scale(1)"><rect x="-10.8" y="-10.8" width="15" height="15" fill="none" stroke="#a6a6a6" stroke-width="1.6"/><rect x="-3.6" y="-3.6" width="15" height="15" fill="#4b4b4b" stroke="#a6a6a6" stroke-width="1.6"/><rect x="-2.8" y="-2.8" width="6.2" height="6.2" fill="#8a8a8a"/></g><rect x="1616.6" y="1247.8" width="21.6" height="22" fill="none" stroke="#444" stroke-width="1.4"/><defs><pattern id="chk2" x="1668" y="1226.3" width="7.8" height="7.8" patternUnits="userSpaceOnUse"><rect width="7.8" height="7.8" fill="#1b1b1b"/><rect width="3.9" height="3.9" fill="#2e2e2e"/><rect x="3.9" y="3.9" width="3.9" height="3.9" fill="#2e2e2e"/></pattern></defs><rect x="1667.2" y="1225.2" width="64.8" height="64.8" fill="url(#chk2)" stroke="#646464" stroke-width="2.3"/><g><rect x="1671.6" y="1233" width="2.4" height="10.8" fill="#a8302f"/><rect x="1674" y="1236" width="36" height="7.8" fill="#4a4a4a"/><rect x="1678" y="1236.6" width="6" height="6.6" fill="#e2e2e2"/><rect x="1697" y="1235.8" width="8" height="1.4" fill="#e8dc1e"/><rect x="1674" y="1232" width="20" height="1.2" fill="#cfcfcf"/><rect x="1672" y="1249" width="31" height="2" fill="#e6e6e6"/><rect x="1677" y="1252" width="13" height="1.2" fill="#aaa"/><rect x="1672" y="1254.5" width="38.6" height="16" rx="3" fill="#333"/><rect x="1675" y="1260.8" width="25" height="1.4" fill="#e0e0e0"/><rect x="1675" y="1264.2" width="25" height="1.4" fill="#e0e0e0"/><rect x="1699.6" y="1262" width="1.4" height="6" fill="#e8dc1e"/><rect x="1671" y="1274.4" width="35" height="1.2" fill="#bdbdbd"/><rect x="1672" y="1277" width="33" height="1.6" fill="#e6e6e6"/><rect x="1677" y="1280" width="32.6" height="9" fill="#e4e4e4"/><path d="M1680,1283 h20 M1679,1286 h14 M1696,1286 h10" stroke="#222" stroke-width="1.5"/><rect x="1672" y="1279.6" width="5" height="9.6" fill="#111"/></g><g transform="translate(1628.3,1325.8) scale(1)"><path d="M-12.6,0 C-7,-8.6 7,-8.6 12.6,0 C7,8.6 -7,8.6 -12.6,0 Z" fill="#ececec"/><circle r="5" fill="#8f2c2f"/><circle cx="1.4" cy="-1.6" r="1.7" fill="#ececec"/></g><path d="M1669.6,1315.6 l5.6,9.6 l-5.6,9.6" fill="none" stroke="#d2d2d2" stroke-width="1.6"/><path d="M1690.8,1313 h10.5 l2.2,2.4 h13.4 q1.8,0 1.8,1.8 v16.6 q0,1.8 -1.8,1.8 h-24.3 q-1.8,0 -1.8,-1.8 v-19 q0,-1.8 1.8,-1.8 z" fill="#d6d6d6"/><path d="M1690,1317.6 h25.8" stroke="#323232" stroke-width="1.3"/><g transform="translate(1628.3,1376) scale(1)"><path d="M-12.6,0 C-7,-8.6 7,-8.6 12.6,0 C7,8.6 -7,8.6 -12.6,0 Z" fill="#ececec"/><circle r="5" fill="#935400"/><circle cx="1.4" cy="-1.6" r="1.7" fill="#ececec"/></g><path d="M1669.6,1365.8 l5.6,9.6 l-5.6,9.6" fill="none" stroke="#d2d2d2" stroke-width="1.6"/><path d="M1690.8,1363.2 h10.5 l2.2,2.4 h13.4 q1.8,0 1.8,1.8 v16.6 q0,1.8 -1.8,1.8 h-24.3 q-1.8,0 -1.8,-1.8 v-19 q0,-1.8 1.8,-1.8 z" fill="#d6d6d6"/><path d="M1690,1367.8 h25.8" stroke="#323232" stroke-width="1.3"/><rect x="1616.6" y="1414.8" width="21.6" height="22" fill="none" stroke="#6e4208" stroke-width="1.4"/><path d="M1669.6,1415.8 l5.6,9.6 l-5.6,9.6" fill="none" stroke="#d2d2d2" stroke-width="1.6"/><path d="M1690.8,1413.2 h10.5 l2.2,2.4 h13.4 q1.8,0 1.8,1.8 v16.6 q0,1.8 -1.8,1.8 h-24.3 q-1.8,0 -1.8,-1.8 v-19 q0,-1.8 1.8,-1.8 z" fill="#d6d6d6"/><path d="M1690,1417.8 h25.8" stroke="#323232" stroke-width="1.3"/><g transform="translate(1628.3,1476) scale(1)"><path d="M-12.6,0 C-7,-8.6 7,-8.6 12.6,0 C7,8.6 -7,8.6 -12.6,0 Z" fill="#ececec"/><circle r="5" fill="#3e6636"/><circle cx="1.4" cy="-1.6" r="1.7" fill="#ececec"/></g><path d="M1669.6,1465.8 l5.6,9.6 l-5.6,9.6" fill="none" stroke="#d2d2d2" stroke-width="1.6"/><path d="M1690.8,1463.2 h10.5 l2.2,2.4 h13.4 q1.8,0 1.8,1.8 v16.6 q0,1.8 -1.8,1.8 h-24.3 q-1.8,0 -1.8,-1.8 v-19 q0,-1.8 1.8,-1.8 z" fill="#d6d6d6"/><path d="M1690,1467.8 h25.8" stroke="#323232" stroke-width="1.3"/><g transform="translate(1816.2,2119.3) scale(1)"><rect x="-13" y="-6" width="15.4" height="12" rx="6" fill="none" stroke="#8c8c8c" stroke-width="2"/><rect x="-2.4" y="-6" width="15.4" height="12" rx="6" fill="none" stroke="#8c8c8c" stroke-width="2"/><rect x="-6.6" y="-1.6" width="13.2" height="3.2" rx="1.4" fill="#8c8c8c"/></g><path d="M1880.6,2134 l3.6,4 l3.6,-4 z M1988.4,2134 l3.6,4 l3.6,-4 z" fill="#d2d2d2"/><g transform="translate(1925.5,2118.7) scale(1)"><rect x="-12.6" y="-9.4" width="25.2" height="18.8" rx="1.6" fill="#d2d2d2"/><circle r="5.8" fill="#323232"/></g><g transform="translate(1979.3,2119.3) scale(1)"><circle r="10" fill="none" stroke="#d2d2d2" stroke-width="2"/><path d="M7.07,-7.07 A10,10 0 0 1 -7.07,7.07 Z" fill="#d2d2d2"/></g><g transform="translate(2032.7,2119.3) scale(1)"><path d="M-11.8,-10 h9.4 l2.2,2.4 h10 q2,0 2,2 v13.6 q0,2 -2,2 h-19.6 q-2,0 -2,-2 z" fill="#d2d2d2"/><path d="M-11.8,-5.4 h23.6" stroke="#323232" stroke-width="1.2"/></g><g transform="translate(2087,2119.3) scale(1)"><rect x="-10.4" y="-10.4" width="20.8" height="20.8" fill="none" stroke="#d2d2d2" stroke-width="1.9"/><path d="M0,-5.4 V5.4 M-5.4,0 H5.4" stroke="#d2d2d2" stroke-width="2"/></g><g transform="translate(2140.7,2119.3) scale(1)"><path d="M-8,-5.6 L-7,11 L7,11 L8,-5.6 Z" fill="none" stroke="#d2d2d2" stroke-width="1.8"/><path d="M-10.4,-6.4 H10.4" stroke="#d2d2d2" stroke-width="2"/><path d="M-3.6,-7 V-10 H3.6 V-7" fill="none" stroke="#d2d2d2" stroke-width="1.8"/><path d="M-3.6,-2.6 V8 M0,-2.6 V8 M3.6,-2.6 V8" stroke="#d2d2d2" stroke-width="1.7"/></g></svg>
<span class="t" style="left:1612.8px;top:922.0px;font-size:21.0px;color:#ececec;font-weight:700;letter-spacing:-0.50px;">Layers</span>
<span class="t" style="left:1648.5px;top:976.7px;font-size:20.6px;color:#e4e4e4;letter-spacing:-0.08px;">Kind</span>
<span class="t" style="left:1903.0px;top:973.1px;font-size:29.0px;color:#d2d2d2;font-weight:700;font-family:'Liberation Serif',serif;">T</span>
<span class="t" style="left:1620.6px;top:1033.2px;font-size:20.6px;color:#e4e4e4;letter-spacing:0.11px;">Screen</span>
<span class="t" style="left:1873.7px;top:1033.2px;font-size:20.6px;color:#b0b0b0;letter-spacing:0.52px;">Opacity:</span>
<span class="t" style="left:1965.3px;top:1033.2px;font-size:20.6px;color:#e4e4e4;letter-spacing:0.00px;">100%</span>
<span class="t" style="left:1608.0px;top:1089.1px;font-size:20.6px;color:#b0b0b0;letter-spacing:0.39px;">Lock:</span>
<span class="t" style="left:1920.2px;top:1089.1px;font-size:20.6px;color:#b0b0b0;letter-spacing:-0.06px;">Fill:</span>
<span class="t" style="left:1965.3px;top:1089.1px;font-size:20.6px;color:#e4e4e4;letter-spacing:0.00px;">100%</span>
<span class="t" style="left:1748.5px;top:1163.6px;font-size:20.6px;color:#e6e6e6;letter-spacing:0.44px;">energy system collapse</span>
<span class="t" style="left:1748.5px;top:1246.6px;font-size:20.6px;color:#dedede;letter-spacing:-0.34px;">EDITING TIP</span>
<span class="t" style="left:1740.7px;top:1314.5px;font-size:20.6px;color:#e0e0e0;letter-spacing:-0.94px;">ARTWORK</span>
<span class="t" style="left:1740.7px;top:1364.7px;font-size:20.6px;color:#e0e0e0;letter-spacing:-1.04px;">FRONT</span>
<span class="t" style="left:1740.7px;top:1414.7px;font-size:20.6px;color:#e0e0e0;letter-spacing:-1.27px;">BACK</span>
<span class="t" style="left:1740.7px;top:1464.7px;font-size:20.6px;color:#e0e0e0;letter-spacing:-0.73px;">BACKGROUNDS</span>
<span class="t" style="left:1858.6px;top:2104.9px;font-size:28.0px;color:#d2d2d2;font-style:italic;letter-spacing:0.22px;">fx</span>
<!-- p7_canvas -->
<svg class="b" style="left:0.0px;top:0.0px;" width="2160" height="2160" viewBox="0 0 2160 2160"><defs><filter id="cshadow" x="-5%" y="-5%" width="110%" height="110%"><feGaussianBlur stdDeviation="9"/></filter><filter id="blur2"><feGaussianBlur stdDeviation="2"/></filter><filter id="blur5"><feGaussianBlur stdDeviation="5"/></filter><clipPath id="shirtclip"><path d="M768.9,721.2 C782,729 796,734 807.3,736.4 C827,740.4 848,740.6 867.9,740 C888,739.4 910,737.6 928.4,733.7 C944,730 960,722 971.8,714.2 C1000,722 1028,732 1051,742.7 C1092,756 1128,768 1159.9,785.4 C1196,806 1228,824 1258.2,844.9 L1365.6,922.6 L1246,1076.8 L1174.6,1038.6 C1177,1075 1179.6,1110 1180.4,1140 L1180.6,1200 L1183.1,1559.4 C980,1564 770,1562 569.3,1556 L573.2,1120 C573.6,1090 577,1062 580.4,1038.6 L509.2,1076.8 L381.6,930.3 L473.5,868.2 C512,842 552,815 592.6,790.6 C612,780 634,772 654.7,764.7 C684,754 710,745 732.3,736.2 C746,731 760,726 768.9,721.2 Z"/></clipPath></defs><rect x="262" y="546" width="1228" height="1228" fill="#000" opacity=".55" filter="url(#cshadow)"/><rect x="260" y="540" width="1227.4" height="1227.4" fill="#050505"/><rect x="260" y="540" width="1226" height="1226" fill="#f8f8f8"/><path d="M768.9,721.2 C782,729 796,734 807.3,736.4 C827,740.4 848,740.6 867.9,740 C888,739.4 910,737.6 928.4,733.7 C944,730 960,722 971.8,714.2 C1000,722 1028,732 1051,742.7 C1092,756 1128,768 1159.9,785.4 C1196,806 1228,824 1258.2,844.9 L1365.6,922.6 L1246,1076.8 L1174.6,1038.6 C1177,1075 1179.6,1110 1180.4,1140 L1180.6,1200 L1183.1,1559.4 C980,1564 770,1562 569.3,1556 L573.2,1120 C573.6,1090 577,1062 580.4,1038.6 L509.2,1076.8 L381.6,930.3 L473.5,868.2 C512,842 552,815 592.6,790.6 C612,780 634,772 654.7,764.7 C684,754 710,745 732.3,736.2 C746,731 760,726 768.9,721.2 Z" fill="#000" opacity=".07" filter="url(#blur5)" transform="translate(0,4)"/><path d="M768.9,721.2 C782,729 796,734 807.3,736.4 C827,740.4 848,740.6 867.9,740 C888,739.4 910,737.6 928.4,733.7 C944,730 960,722 971.8,714.2 C1000,722 1028,732 1051,742.7 C1092,756 1128,768 1159.9,785.4 C1196,806 1228,824 1258.2,844.9 L1365.6,922.6 L1246,1076.8 L1174.6,1038.6 C1177,1075 1179.6,1110 1180.4,1140 L1180.6,1200 L1183.1,1559.4 C980,1564 770,1562 569.3,1556 L573.2,1120 C573.6,1090 577,1062 580.4,1038.6 L509.2,1076.8 L381.6,930.3 L473.5,868.2 C512,842 552,815 592.6,790.6 C612,780 634,772 654.7,764.7 C684,754 710,745 732.3,736.2 C746,731 760,726 768.9,721.2 Z" fill="#121212"/><filter id="fabric" filterUnits="userSpaceOnUse" x="370" y="700" width="1010" height="880"><feTurbulence type="fractalNoise" baseFrequency="0.5 0.05" numOctaves="2" seed="2"/><feColorMatrix type="matrix" values="0 0 0 0 1  0 0 0 0 1  0 0 0 0 1  0 0 0 1.6 -0.62"/></filter><g clip-path="url(#shirtclip)"><rect x="370" y="700" width="1010" height="880" fill="#fff" filter="url(#fabric)" opacity=".045"/></g><g clip-path="url(#shirtclip)"><path d="M592,791 C612,850 622,930 600,1022" fill="none" stroke="#080808" stroke-width="2.4"/><path d="M1160,786 C1150,850 1148,940 1170,1034" fill="none" stroke="#080808" stroke-width="2.4"/><path d="M393,922 L520,1068" fill="none" stroke="#0a0a0a" stroke-width="2"/><path d="M1354,914 L1235,1068" fill="none" stroke="#0a0a0a" stroke-width="2"/><path d="M569,1537 C780,1543 980,1545 1183,1540" fill="none" stroke="#0a0a0a" stroke-width="2"/><path d="M776,728 C800,752 840,760 872,759 C906,758 944,748 964,724 C960,790 920,836 872,836 C826,836 782,790 776,728 Z" fill="#181818"/><path d="M765.5,722 C766,796 816,843.5 872,843.5 C928,843.5 977,794 979,716" fill="none" stroke="#161616" stroke-width="15"/><path d="M773.5,728 C776,792 822,836 872,836 C922,836 968,790 971,722" fill="none" stroke="#0b0b0b" stroke-width="1.5"/><path d="M757.5,728 C758,800 812,851 872,851 C932,851 985,800 986.5,722" fill="none" stroke="#0b0b0b" stroke-width="1.5"/><path d="M761.5,726 C762,798 814,847.6 872,847.6 C930,847.6 981.5,797 983,719" fill="none" stroke="#1e1e1e" stroke-width="1"/><path d="M776,729 C800,752 840,761 872,760 C906,759 944,749 966,725" fill="none" stroke="#0c0c0c" stroke-width="2"/><path d="M784,742 C808,757 842,765.6 872,765 C904,764.4 938,756 958,740" fill="none" stroke="#222" stroke-width="1.2"/></g><defs><linearGradient id="skg" x1="0" y1="0" x2="1" y2="1"><stop offset="0" stop-color="#f6f3f0"/><stop offset=".55" stop-color="#e6e3e0"/><stop offset="1" stop-color="#a9a6a3"/></linearGradient></defs><filter id="grunge" filterUnits="userSpaceOnUse" x="640" y="880" width="480" height="590"><feTurbulence type="fractalNoise" baseFrequency="0.55" numOctaves="2" seed="4" result="n"/><feDisplacementMap in="SourceGraphic" in2="n" scale="1.9" xChannelSelector="R" yChannelSelector="G" result="d"/><feTurbulence type="fractalNoise" baseFrequency="0.9" numOctaves="1" seed="9" result="n2"/><feColorMatrix in="n2" type="matrix" values="0 0 0 0 1  0 0 0 0 1  0 0 0 0 1  0 0 0 -14 10.9" result="mask"/><feComposite in="d" in2="mask" operator="in"/></filter><filter id="specks" filterUnits="userSpaceOnUse" x="640" y="880" width="480" height="590"><feTurbulence type="fractalNoise" baseFrequency="0.62" numOctaves="2" seed="5" result="n"/><feColorMatrix in="n" type="matrix" values="0 0 0 0 .94  0 0 0 0 .92  0 0 0 0 .9  0 0 0 20 -12.3" result="m"/><feComposite in="m" in2="SourceAlpha" operator="in"/></filter><filter id="dust" filterUnits="userSpaceOnUse" x="640" y="880" width="480" height="590"><feTurbulence type="fractalNoise" baseFrequency="0.75" numOctaves="1" seed="21" result="n"/><feColorMatrix in="n" type="matrix" values="0 0 0 0 0.93  0 0 0 0 0.92  0 0 0 0 0.9  0 0 0 22 -16.6"/></filter><rect x="640" y="880" width="480" height="590" fill="#fff" filter="url(#dust)" opacity=".55" clip-path="url(#shirtclip)"/><g filter="url(#specks)" fill="#fff"><path d="M694,906 L790,906 L796,1000 L688,1000 Z" opacity=".7"/><path d="M682,996 L760,996 L760,1070 L684,1070 Z" opacity=".85"/><path d="M690,1080 L724,1080 L724,1140 L690,1140 Z" opacity=".6"/><path d="M690,1180 L730,1180 L730,1250 L690,1250 Z" opacity=".5"/></g><g font-family="'Liberation Sans',sans-serif" filter="url(#grunge)"><clipPath id="headclip"><path d="M1000.0,923.0 L1018.0,926.0 L1031.0,929.0 L1049.0,938.0 L1064.0,950.0 L1073.0,962.0 L1080.0,975.0 L1083.0,988.0 L1084.0,1000.0 L1085.0,1012.0 L1091.0,1024.0 L1098.0,1036.0 L1094.0,1041.0 L1086.0,1046.0 L1085.5,1053.0 L1085.0,1059.0 L1083.0,1066.0 L1081.0,1074.0 L1080.5,1083.0 L1078.7,1091.0 L1075.0,1096.0 L1068.0,1099.0 L1050.0,1101.0 L1036.0,1103.0 L1029.0,1110.0 L1024.0,1124.0 L1025.0,1148.0 L1027.0,1160.0 L922.0,1160.0 L926.0,1150.0 L929.6,1140.0 L935.0,1132.0 L939.6,1124.0 L943.0,1115.0 L946.0,1105.0 L948.5,1095.0 L949.5,1086.0 L947.5,1075.0 L944.5,1061.0 L941.0,1040.0 L940.0,1025.0 L939.6,1012.0 L944.0,995.0 L949.5,975.0 L953.0,962.0 L957.0,950.0 L960.0,938.0 L966.0,929.0 L982.0,925.0 L1000.0,923.0 Z"/></clipPath><g clip-path="url(#headclip)"><path d="M1000.0,921.6 L981.6,925.5 L975.8,929.4 L974.8,933.3 L974.1,937.2 L974.0,941.1 L974.0,945.1 L973.8,949.0 L973.1,952.9 L972.5,956.8 L971.9,960.7 L971.3,964.6 L970.7,968.5 L970.1,972.4 L969.4,976.3 L968.6,980.3 L967.8,984.2 L966.9,988.1 L966.1,992.0 L965.2,995.9 L964.4,999.8 L963.6,1003.7 L962.8,1007.6 L963.0,1011.5 L963.4,1015.5 L963.8,1019.4 L964.4,1023.3 L965.0,1027.2 L965.6,1031.3 L965.4,1035.3 L965.1,1039.4 L965.0,1043.4 L965.5,1047.5 L966.1,1051.5 L966.5,1055.5 L967.0,1059.6 L967.6,1063.6 L968.1,1067.7 L968.7,1071.7 L969.3,1075.7 L969.9,1079.8 L969.9,1083.8 L969.4,1087.9 L968.4,1091.9 L965.4,1096.0 L960.4,1100.0 L958.8,1104.0 L957.3,1108.1 L956.0,1112.1 L954.5,1116.2 L953.0,1120.2 L951.1,1124.2 L949.2,1128.3 L947.0,1132.3 L944.7,1136.4 L943.5,1140.4 L942.3,1144.5 L941.1,1148.5 L939.9,1152.5 L938.6,1156.6 M1000.0,920.1 L987.3,924.0 L984.1,927.8 L984.4,931.7 L984.7,935.6 L985.4,939.5 L986.1,943.4 L986.5,947.3 L986.3,951.2 L986.2,955.0 L986.1,958.9 L985.9,962.8 L985.7,966.7 L985.5,970.6 L984.9,974.5 L984.4,978.4 L983.8,982.2 L983.2,986.1 L982.5,990.0 L981.8,993.9 L981.1,997.8 L980.5,1001.7 L979.8,1005.6 L980.3,1009.4 L980.9,1013.3 L981.6,1017.2 L982.3,1021.1 L983.2,1025.1 L984.0,1029.2 L983.5,1033.3 L982.5,1037.4 L981.9,1041.5 L982.3,1045.6 L982.7,1049.7 L983.1,1053.7 L983.3,1057.8 L983.6,1061.9 L984.0,1066.0 L984.4,1070.1 L984.9,1074.2 L985.3,1078.3 L985.2,1082.4 L984.5,1086.5 L983.3,1090.6 L978.8,1094.7 L970.8,1098.8 L968.9,1102.9 L967.3,1107.0 L965.9,1111.1 L964.4,1115.2 L962.9,1119.3 L961.3,1123.4 L959.7,1127.5 L957.8,1131.6 L955.9,1135.6 L954.9,1139.7 L953.9,1143.8 L952.9,1147.9 L952.0,1152.0 L951.0,1156.1 M1000.0,919.1 L992.4,923.0 L991.5,926.8 L992.9,930.7 L994.3,934.6 L995.6,938.5 L996.9,942.3 L997.9,946.2 L998.3,950.1 L998.6,954.0 L998.8,957.8 L999.0,961.7 L999.2,965.6 L999.3,969.5 L999.0,973.3 L998.6,977.2 L998.3,981.1 L997.8,985.0 L997.2,988.8 L996.7,992.7 L996.2,996.6 L995.7,1000.5 L995.2,1004.3 L995.8,1008.2 L996.7,1012.1 L997.5,1016.0 L998.5,1019.8 L999.6,1023.8 L1000.6,1028.0 L999.8,1032.1 L998.2,1036.2 L997.1,1040.4 L997.4,1044.5 L997.7,1048.6 L997.9,1052.8 L998.0,1056.9 L998.1,1061.0 L998.2,1065.1 L998.5,1069.3 L998.9,1073.4 L999.2,1077.5 L999.0,1081.7 L998.2,1085.8 L996.7,1089.9 L990.8,1094.1 L980.3,1098.2 L978.0,1102.3 L976.2,1106.5 L974.8,1110.6 L973.4,1114.7 L971.9,1118.8 L970.5,1123.0 L969.1,1127.1 L967.5,1131.2 L965.9,1135.4 L965.1,1139.5 L964.2,1143.6 L963.6,1147.8 L962.8,1151.9 L962.1,1156.0 M1000.0,918.6 L997.2,922.5 L998.5,926.3 L1000.9,930.2 L1003.3,934.1 L1005.2,938.0 L1007.0,941.9 L1008.6,945.7 L1009.4,949.6 L1010.1,953.5 L1010.8,957.4 L1011.3,961.2 L1011.7,965.1 L1012.2,969.0 L1012.1,972.9 L1011.9,976.8 L1011.8,980.6 L1011.4,984.5 L1011.0,988.4 L1010.7,992.3 L1010.3,996.1 L1009.9,1000.0 L1009.5,1003.9 L1010.3,1007.8 L1011.4,1011.7 L1012.4,1015.5 L1013.6,1019.4 L1014.9,1023.4 L1016.1,1027.6 L1015.1,1031.7 L1012.9,1035.9 L1011.3,1040.0 L1011.5,1044.2 L1011.7,1048.3 L1011.8,1052.5 L1011.7,1056.6 L1011.6,1060.8 L1011.5,1064.9 L1011.7,1069.1 L1011.9,1073.2 L1012.1,1077.4 L1011.8,1081.5 L1011.0,1085.7 L1009.3,1089.8 L1002.1,1094.0 L989.0,1098.1 L986.5,1102.3 L984.5,1106.4 L983.2,1110.6 L981.7,1114.7 L980.2,1118.9 L979.1,1123.1 L978.0,1127.2 L976.6,1131.4 L975.3,1135.5 L974.6,1139.7 L973.9,1143.8 L973.5,1148.0 L973.0,1152.1 L972.4,1156.3 M1000.0,918.5 L1001.8,922.4 L1005.1,926.3 L1008.6,930.2 L1011.8,934.1 L1014.2,938.0 L1016.7,941.9 L1018.8,945.8 L1019.9,949.6 L1021.1,953.5 L1022.1,957.4 L1022.9,961.3 L1023.7,965.2 L1024.5,969.1 L1024.5,973.0 L1024.6,976.9 L1024.6,980.8 L1024.4,984.7 L1024.2,988.6 L1023.9,992.5 L1023.7,996.4 L1023.4,1000.2 L1023.1,1004.1 L1024.1,1008.0 L1025.3,1011.9 L1026.5,1015.8 L1027.9,1019.7 L1029.4,1023.7 L1030.9,1027.9 L1029.6,1032.0 L1026.8,1036.2 L1024.8,1040.4 L1024.9,1044.5 L1025.0,1048.7 L1025.0,1052.8 L1024.7,1057.0 L1024.4,1061.2 L1024.2,1065.3 L1024.2,1069.5 L1024.4,1073.6 L1024.5,1077.8 L1024.1,1082.0 L1023.1,1086.1 L1021.2,1090.3 L1012.8,1094.4 L997.4,1098.6 L994.6,1102.7 L992.4,1106.9 L991.1,1111.1 L989.6,1115.2 L988.1,1119.4 L987.2,1123.5 L986.3,1127.7 L985.3,1131.9 L984.2,1136.0 L983.7,1140.2 L983.2,1144.3 L982.9,1148.5 L982.6,1152.7 L982.3,1156.8 M1000.0,918.8 L1006.1,922.7 L1011.4,926.6 L1015.9,930.5 L1019.9,934.5 L1022.9,938.4 L1025.9,942.3 L1028.5,946.2 L1030.1,950.1 L1031.6,954.0 L1033.1,958.0 L1034.1,961.9 L1035.2,965.8 L1036.2,969.7 L1036.5,973.6 L1036.7,977.5 L1037.0,981.5 L1036.9,985.4 L1036.7,989.3 L1036.6,993.2 L1036.5,997.1 L1036.4,1001.0 L1036.2,1005.0 L1037.4,1008.9 L1038.8,1012.8 L1040.1,1016.7 L1041.7,1020.6 L1043.4,1024.7 L1045.0,1028.8 L1043.5,1033.0 L1040.2,1037.1 L1037.7,1041.3 L1037.7,1045.4 L1037.8,1049.6 L1037.7,1053.7 L1037.2,1057.9 L1036.7,1062.1 L1036.4,1066.2 L1036.2,1070.4 L1036.3,1074.5 L1036.3,1078.7 L1035.8,1082.8 L1034.8,1087.0 L1032.6,1091.1 L1023.1,1095.3 L1005.4,1099.5 L1002.4,1103.6 L1000.0,1107.8 L998.7,1111.9 L997.2,1116.1 L995.7,1120.2 L995.0,1124.4 L994.4,1128.5 L993.6,1132.7 L992.8,1136.9 L992.4,1141.0 L992.0,1145.2 L992.0,1149.3 L991.9,1153.5 L991.8,1157.6 M1000.0,919.3 L1010.4,923.3 L1017.6,927.2 L1023.0,931.2 L1027.8,935.1 L1031.4,939.1 L1034.9,943.0 L1038.0,947.0 L1039.9,950.9 L1041.8,954.9 L1043.6,958.8 L1045.0,962.8 L1046.3,966.7 L1047.6,970.7 L1048.1,974.6 L1048.5,978.6 L1048.9,982.5 L1049.0,986.5 L1048.9,990.4 L1048.9,994.4 L1048.9,998.3 L1048.9,1002.3 L1048.9,1006.2 L1050.2,1010.2 L1051.7,1014.1 L1053.3,1018.1 L1055.1,1022.0 L1056.9,1026.1 L1058.7,1030.2 L1056.9,1034.4 L1053.1,1038.5 L1050.2,1042.7 L1050.2,1046.8 L1050.1,1050.9 L1049.9,1055.1 L1049.3,1059.2 L1048.7,1063.4 L1048.1,1067.5 L1047.8,1071.7 L1047.8,1075.8 L1047.8,1079.9 L1047.1,1084.1 L1046.1,1088.2 L1043.7,1092.4 L1033.0,1096.5 L1013.2,1100.7 L1009.9,1104.8 L1007.4,1109.0 L1006.0,1113.1 L1004.6,1117.2 L1003.1,1121.4 L1002.6,1125.5 L1002.2,1129.7 L1001.6,1133.8 L1001.1,1138.0 L1000.8,1142.1 L1000.6,1146.2 L1000.7,1150.4 L1000.8,1154.5 L1000.9,1158.7 M1000.0,920.1 L1014.5,924.1 L1023.6,928.1 L1029.8,932.1 L1035.5,936.1 L1039.6,940.1 L1043.6,944.0 L1047.1,948.0 L1049.4,952.0 L1051.8,956.0 L1053.9,960.0 L1055.5,964.0 L1057.1,968.0 L1058.7,972.0 L1059.3,976.0 L1059.9,979.9 L1060.5,983.9 L1060.7,987.9 L1060.8,991.9 L1060.9,995.9 L1061.0,999.9 L1061.1,1003.9 L1061.2,1007.9 L1062.7,1011.9 L1064.4,1015.9 L1066.1,1019.8 L1068.0,1023.8 L1070.0,1027.9 L1072.0,1032.0 L1070.0,1036.1 L1065.7,1040.3 L1062.4,1044.4 L1062.3,1048.5 L1062.1,1052.6 L1061.9,1056.7 L1061.0,1060.9 L1060.3,1065.0 L1059.6,1069.1 L1059.1,1073.2 L1059.0,1077.4 L1058.9,1081.5 L1058.2,1085.6 L1057.0,1089.7 L1054.5,1093.9 L1042.7,1098.0 L1020.7,1102.1 L1017.2,1106.2 L1014.6,1110.4 L1013.2,1114.5 L1011.7,1118.6 L1010.3,1122.7 L1010.0,1126.9 L1009.7,1131.0 L1009.4,1135.1 L1009.1,1139.2 L1009.0,1143.4 L1008.9,1147.5 L1009.2,1151.6 L1009.5,1155.7 L1009.8,1159.9 M1000.0,921.0 L1018.5,925.0 L1029.4,929.1 L1036.5,933.1 L1043.0,937.1 L1047.5,941.2 L1052.1,945.2 L1056.1,949.2 L1058.8,953.3 L1061.4,957.3 L1063.9,961.3 L1065.8,965.4 L1067.7,969.4 L1069.5,973.4 L1070.3,977.5 L1071.0,981.5 L1071.8,985.5 L1072.1,989.5 L1072.3,993.6 L1072.5,997.6 L1072.8,1001.6 L1073.0,1005.7 L1073.2,1009.7 L1074.8,1013.7 L1076.7,1017.8 L1078.5,1021.8 L1080.7,1025.8 L1082.8,1029.9 L1085.0,1034.0 L1082.7,1038.1 L1078.0,1042.2 L1074.3,1046.3 L1074.1,1050.4 L1073.8,1054.5 L1073.5,1058.6 L1072.5,1062.7 L1071.5,1066.8 L1070.7,1070.9 L1070.1,1075.0 L1070.0,1079.1 L1069.7,1083.2 L1068.9,1087.3 L1067.7,1091.4 L1064.9,1095.5 L1052.1,1099.6 L1028.0,1103.7 L1024.3,1107.8 L1021.5,1111.9 L1020.1,1116.0 L1018.7,1120.1 L1017.2,1124.2 L1017.1,1128.3 L1017.1,1132.4 L1017.0,1136.5 L1017.0,1140.6 L1017.0,1144.7 L1017.1,1148.8 L1017.5,1152.9 L1018.0,1157.0 L1018.5,1161.1 M965.3,931.1 L968.2,930.3 L971.2,929.6 L974.1,928.9 L977.1,928.3 L980.0,927.7 L983.0,927.1 L985.9,926.6 L988.9,926.2 L991.9,925.9 L994.8,925.6 L997.8,925.5 L1000.7,925.4 L1003.7,925.4 L1006.6,925.5 L1009.6,925.7 L1012.5,925.9 L1015.5,926.2 L1018.4,926.6 L1021.4,927.1 L1024.4,927.5 L1027.3,928.1 L1030.3,928.6 L1033.2,929.2 M960.3,938.4 L964.1,937.6 L967.9,936.9 L971.8,936.2 L975.6,935.5 L979.4,934.9 L983.2,934.3 L987.0,933.8 L990.8,933.4 L994.7,933.1 L998.5,932.8 L1002.3,932.6 L1006.1,932.6 L1009.9,932.6 L1013.7,932.7 L1017.5,932.9 L1021.4,933.2 L1025.2,933.5 L1029.0,933.9 L1032.8,934.4 L1036.6,934.9 L1040.4,935.5 L1044.3,936.1 L1048.1,936.7 M958.3,945.7 L962.6,944.9 L966.9,944.2 L971.2,943.4 L975.6,942.7 L979.9,942.1 L984.2,941.5 L988.5,941.0 L992.8,940.6 L997.2,940.2 L1001.5,940.0 L1005.8,939.8 L1010.1,939.7 L1014.5,939.8 L1018.8,939.9 L1023.1,940.1 L1027.4,940.4 L1031.8,940.8 L1036.1,941.3 L1040.4,941.8 L1044.7,942.4 L1049.1,943.0 L1053.4,943.6 L1057.7,944.2 M956.2,953.0 L961.0,952.2 L965.7,951.4 L970.5,950.7 L975.3,950.0 L980.0,949.3 L984.8,948.7 L989.6,948.2 L994.3,947.7 L999.1,947.4 L1003.9,947.1 L1008.6,947.0 L1013.4,946.9 L1018.1,947.0 L1022.9,947.1 L1027.7,947.4 L1032.4,947.7 L1037.2,948.1 L1042.0,948.6 L1046.7,949.1 L1051.5,949.8 L1056.3,950.4 L1061.0,951.1 L1065.8,951.8 M953.7,960.3 L958.8,959.5 L964.0,958.7 L969.1,957.9 L974.2,957.2 L979.3,956.5 L984.4,955.9 L989.5,955.3 L994.6,954.9 L999.8,954.5 L1004.9,954.3 L1010.0,954.1 L1015.1,954.1 L1020.2,954.2 L1025.3,954.3 L1030.4,954.6 L1035.6,954.9 L1040.7,955.4 L1045.8,955.9 L1050.9,956.5 L1056.0,957.2 L1061.1,957.9 L1066.2,958.6 L1071.4,959.3 M951.6,967.6 L957.0,966.8 L962.4,966.0 L967.8,965.2 L973.2,964.4 L978.6,963.7 L984.0,963.1 L989.4,962.5 L994.8,962.1 L1000.2,961.7 L1005.6,961.4 L1011.0,961.3 L1016.4,961.3 L1021.8,961.3 L1027.2,961.5 L1032.6,961.8 L1038.0,962.2 L1043.4,962.7 L1048.8,963.3 L1054.2,963.9 L1059.6,964.6 L1065.0,965.3 L1070.4,966.1 L1075.8,966.8 M949.6,975.0 L955.3,974.1 L960.9,973.2 L966.6,972.4 L972.2,971.6 L977.9,970.9 L983.6,970.3 L989.2,969.7 L994.9,969.2 L1000.5,968.9 L1006.2,968.6 L1011.9,968.5 L1017.5,968.4 L1023.2,968.5 L1028.9,968.7 L1034.5,969.1 L1040.2,969.5 L1045.8,970.0 L1051.5,970.6 L1057.2,971.2 L1062.8,972.0 L1068.5,972.8 L1074.2,973.6 L1079.8,974.4 M947.5,982.3 L953.4,981.4 L959.2,980.5 L965.0,979.6 L970.9,978.8 L976.7,978.1 L982.5,977.4 L988.4,976.9 L994.2,976.4 L1000.0,976.0 L1005.8,975.8 L1011.7,975.6 L1017.5,975.6 L1023.3,975.7 L1029.2,976.0 L1035.0,976.3 L1040.8,976.7 L1046.7,977.3 L1052.5,977.9 L1058.3,978.6 L1064.1,979.4 L1070.0,980.2 L1075.8,981.0 L1081.6,981.9 M945.5,989.6 L951.5,988.7 L957.5,987.8 L963.5,986.9 L969.4,986.1 L975.4,985.3 L981.4,984.6 L987.4,984.0 L993.4,983.6 L999.4,983.2 L1005.3,982.9 L1011.3,982.8 L1017.3,982.8 L1023.3,982.9 L1029.3,983.2 L1035.3,983.5 L1041.2,984.0 L1047.2,984.6 L1053.2,985.2 L1059.2,986.0 L1065.2,986.8 L1071.2,987.6 L1077.1,988.5 L1083.1,989.5 M943.5,996.9 L949.6,996.0 L955.7,995.0 L961.8,994.1 L967.9,993.3 L974.0,992.5 L980.1,991.8 L986.2,991.2 L992.3,990.7 L998.4,990.4 L1004.5,990.1 L1010.6,990.0 L1016.7,990.0 L1022.8,990.1 L1028.9,990.4 L1035.0,990.8 L1041.1,991.3 L1047.2,991.9 L1053.3,992.6 L1059.4,993.3 L1065.5,994.2 L1071.5,995.1 L1077.6,996.0 L1083.7,997.0 M941.6,1004.2 L947.8,1003.2 L954.0,1002.3 L960.2,1001.4 L966.4,1000.5 L972.6,999.7 L978.8,999.0 L985.0,998.4 L991.2,997.9 L997.4,997.5 L1003.7,997.3 L1009.9,997.1 L1016.1,997.2 L1022.3,997.3 L1028.5,997.6 L1034.7,998.0 L1040.9,998.5 L1047.1,999.2 L1053.3,999.9 L1059.5,1000.7 L1065.7,1001.6 L1071.9,1002.5 L1078.2,1003.5 L1084.4,1004.5 M939.7,1011.5 L946.0,1010.5 L952.3,1009.6 L958.6,1008.6 L964.9,1007.7 L971.2,1006.9 L977.6,1006.2 L983.9,1005.6 L990.2,1005.1 L996.5,1004.7 L1002.8,1004.4 L1009.2,1004.3 L1015.5,1004.3 L1021.8,1004.5 L1028.1,1004.8 L1034.4,1005.2 L1040.8,1005.8 L1047.1,1006.4 L1053.4,1007.2 L1059.7,1008.1 L1066.0,1009.0 L1072.3,1010.0 L1078.7,1011.0 L1085.0,1012.1 M939.8,1018.9 L946.3,1017.8 L952.8,1016.8 L959.2,1015.9 L965.7,1015.0 L972.2,1014.1 L978.6,1013.4 L985.1,1012.8 L991.6,1012.2 L998.0,1011.8 L1004.5,1011.6 L1011.0,1011.5 L1017.5,1011.5 L1023.9,1011.7 L1030.4,1012.0 L1036.9,1012.5 L1043.3,1013.0 L1049.8,1013.7 L1056.3,1014.5 L1062.7,1015.4 L1069.2,1016.4 L1075.7,1017.4 L1082.1,1018.5 L1088.6,1019.6 M940.1,1026.2 L946.7,1025.1 L953.4,1024.1 L960.0,1023.1 L966.6,1022.2 L973.2,1021.3 L979.9,1020.6 L986.5,1019.9 L993.1,1019.4 L999.8,1019.0 L1006.4,1018.8 L1013.0,1018.6 L1019.6,1018.7 L1026.3,1018.9 L1032.9,1019.2 L1039.5,1019.7 L1046.2,1020.3 L1052.8,1021.0 L1059.4,1021.9 L1066.0,1022.8 L1072.7,1023.8 L1079.3,1024.9 L1085.9,1026.0 L1092.5,1027.1 M940.6,1033.5 L947.4,1032.5 L954.2,1031.4 L961.0,1030.5 L967.8,1029.6 L974.6,1028.7 L981.4,1028.0 L988.2,1027.3 L995.0,1026.8 L1001.8,1026.5 L1008.5,1026.2 L1015.3,1026.1 L1022.1,1026.2 L1028.9,1026.4 L1035.7,1026.7 L1042.5,1027.2 L1049.3,1027.8 L1056.1,1028.5 L1062.9,1029.4 L1069.7,1030.3 L1076.5,1031.3 L1083.3,1032.4 L1090.1,1033.5 L1096.9,1034.7 M941.2,1040.8 L947.9,1039.8 L954.5,1038.8 L961.1,1037.9 L967.7,1037.0 L974.3,1036.2 L980.9,1035.5 L987.5,1034.9 L994.1,1034.5 L1000.7,1034.1 L1007.3,1033.9 L1013.9,1033.8 L1020.5,1033.9 L1027.1,1034.1 L1033.7,1034.4 L1040.3,1034.9 L1047.0,1035.5 L1053.6,1036.2 L1060.2,1037.0 L1066.8,1038.0 L1073.4,1039.0 L1080.0,1040.0 L1086.6,1041.1 L1093.2,1042.2 M942.5,1048.1 L948.7,1047.2 L954.9,1046.2 L961.2,1045.4 L967.4,1044.5 L973.6,1043.8 L979.9,1043.1 L986.1,1042.5 L992.3,1042.1 L998.6,1041.7 L1004.8,1041.5 L1011.0,1041.5 L1017.3,1041.5 L1023.5,1041.7 L1029.7,1042.1 L1035.9,1042.6 L1042.2,1043.2 L1048.4,1043.9 L1054.6,1044.7 L1060.9,1045.6 L1067.1,1046.6 L1073.3,1047.6 L1079.6,1048.7 L1085.8,1049.7 M943.7,1055.4 L949.9,1054.5 L956.0,1053.7 L962.2,1052.8 L968.3,1052.0 L974.5,1051.3 L980.6,1050.7 L986.8,1050.1 L992.9,1049.7 L999.1,1049.4 L1005.2,1049.2 L1011.4,1049.1 L1017.5,1049.2 L1023.7,1049.4 L1029.9,1049.8 L1036.0,1050.3 L1042.2,1050.8 L1048.3,1051.5 L1054.5,1052.3 L1060.6,1053.2 L1066.8,1054.2 L1072.9,1055.2 L1079.1,1056.2 L1085.2,1057.3 M945.1,1062.7 L951.1,1061.9 L957.1,1061.1 L963.2,1060.3 L969.2,1059.5 L975.2,1058.8 L981.2,1058.2 L987.3,1057.7 L993.3,1057.3 L999.3,1057.0 L1005.3,1056.9 L1011.4,1056.8 L1017.4,1056.9 L1023.4,1057.1 L1029.4,1057.5 L1035.4,1057.9 L1041.5,1058.5 L1047.5,1059.2 L1053.5,1060.0 L1059.5,1060.8 L1065.6,1061.8 L1071.6,1062.8 L1077.6,1063.8 L1083.6,1064.8 M946.7,1070.1 L952.6,1069.3 L958.4,1068.5 L964.3,1067.7 L970.2,1067.0 L976.0,1066.3 L981.9,1065.8 L987.8,1065.3 L993.6,1064.9 L999.5,1064.7 L1005.4,1064.5 L1011.3,1064.5 L1017.1,1064.6 L1023.0,1064.8 L1028.9,1065.2 L1034.7,1065.6 L1040.6,1066.2 L1046.5,1066.9 L1052.3,1067.6 L1058.2,1068.5 L1064.1,1069.4 L1070.0,1070.3 L1075.8,1071.3 L1081.7,1072.3 M948.2,1077.4 L953.9,1076.6 L959.7,1075.9 L965.5,1075.1 L971.2,1074.5 L977.0,1073.9 L982.7,1073.3 L988.5,1072.9 L994.3,1072.5 L1000.0,1072.3 L1005.8,1072.2 L1011.6,1072.2 L1017.3,1072.3 L1023.1,1072.5 L1028.9,1072.8 L1034.6,1073.3 L1040.4,1073.9 L1046.2,1074.5 L1051.9,1075.3 L1057.7,1076.1 L1063.4,1077.0 L1069.2,1077.9 L1075.0,1078.9 L1080.7,1079.9 M949.5,1084.7 L955.2,1084.0 L960.8,1083.3 L966.5,1082.6 L972.2,1082.0 L977.8,1081.4 L983.5,1080.9 L989.2,1080.5 L994.8,1080.2 L1000.5,1079.9 L1006.2,1079.8 L1011.8,1079.8 L1017.5,1080.0 L1023.2,1080.2 L1028.8,1080.5 L1034.5,1081.0 L1040.2,1081.5 L1045.8,1082.2 L1051.5,1082.9 L1057.1,1083.7 L1062.8,1084.6 L1068.5,1085.5 L1074.1,1086.5 L1079.8,1087.4 M948.7,1092.0 L954.2,1091.3 L959.8,1090.7 L965.4,1090.0 L971.0,1089.4 L976.5,1088.9 L982.1,1088.5 L987.7,1088.1 L993.3,1087.8 L998.8,1087.6 L1004.4,1087.5 L1010.0,1087.5 L1015.6,1087.6 L1021.1,1087.9 L1026.7,1088.2 L1032.3,1088.7 L1037.8,1089.2 L1043.4,1089.9 L1049.0,1090.6 L1054.6,1091.4 L1060.1,1092.2 L1065.7,1093.1 L1071.3,1094.0 L1076.9,1094.9 M947.0,1099.3 L951.5,1098.7 L956.0,1098.1 L960.6,1097.5 L965.1,1096.9 L969.6,1096.4 L974.1,1096.0 L978.6,1095.7 L983.1,1095.4 L987.6,1095.2 L992.2,1095.2 L996.7,1095.2 L1001.2,1095.3 L1005.7,1095.6 L1010.2,1095.9 L1014.7,1096.4 L1019.2,1096.9 L1023.7,1097.5 L1028.3,1098.2 L1032.8,1099.0 L1037.3,1099.8 L1041.8,1100.7 L1046.3,1101.6 L1050.8,1102.5 M945.0,1106.6 L948.7,1106.1 L952.4,1105.5 L956.2,1104.9 L959.9,1104.4 L963.6,1104.0 L967.3,1103.6 L971.1,1103.3 L974.8,1103.0 L978.5,1102.9 L982.2,1102.8 L986.0,1102.9 L989.7,1103.0 L993.4,1103.3 L997.1,1103.6 L1000.9,1104.0 L1004.6,1104.6 L1008.3,1105.2 L1012.0,1105.9 L1015.8,1106.6 L1019.5,1107.4 L1023.2,1108.3 L1026.9,1109.1 L1030.7,1110.0 M942.7,1114.0 L946.4,1113.4 L950.0,1112.9 L953.7,1112.4 L957.4,1111.9 L961.0,1111.5 L964.7,1111.1 L968.3,1110.8 L972.0,1110.6 L975.7,1110.5 L979.3,1110.5 L983.0,1110.5 L986.7,1110.7 L990.3,1110.9 L994.0,1111.3 L997.6,1111.7 L1001.3,1112.2 L1005.0,1112.9 L1008.6,1113.5 L1012.3,1114.3 L1016.0,1115.0 L1019.6,1115.9 L1023.3,1116.7 L1026.9,1117.6 M939.9,1121.3 L943.6,1120.8 L947.2,1120.3 L950.9,1119.8 L954.6,1119.4 L958.3,1119.0 L961.9,1118.7 L965.6,1118.4 L969.3,1118.3 L972.9,1118.2 L976.6,1118.1 L980.3,1118.2 L983.9,1118.4 L987.6,1118.6 L991.3,1119.0 L994.9,1119.4 L998.6,1119.9 L1002.3,1120.5 L1005.9,1121.2 L1009.6,1121.9 L1013.3,1122.6 L1017.0,1123.4 L1020.6,1124.3 L1024.3,1125.1 M935.8,1128.6 L939.6,1128.1 L943.5,1127.7 L947.3,1127.3 L951.2,1126.9 L955.0,1126.5 L958.9,1126.2 L962.7,1126.0 L966.6,1125.9 L970.4,1125.8 L974.3,1125.8 L978.1,1125.9 L982.0,1126.1 L985.8,1126.3 L989.7,1126.7 L993.5,1127.1 L997.3,1127.6 L1001.2,1128.2 L1005.0,1128.8 L1008.9,1129.5 L1012.7,1130.2 L1016.6,1131.0 L1020.4,1131.8 L1024.3,1132.6 M930.9,1135.9 L935.0,1135.5 L939.1,1135.1 L943.1,1134.7 L947.2,1134.4 L951.3,1134.1 L955.4,1133.8 L959.4,1133.6 L963.5,1133.5 L967.6,1133.4 L971.6,1133.5 L975.7,1133.6 L979.8,1133.7 L983.9,1134.0 L987.9,1134.4 L992.0,1134.8 L996.1,1135.3 L1000.2,1135.8 L1004.2,1136.5 L1008.3,1137.1 L1012.4,1137.9 L1016.4,1138.6 L1020.5,1139.4 L1024.6,1140.2 M927.6,1143.2 L931.9,1142.9 L936.1,1142.5 L940.3,1142.2 L944.5,1141.9 L948.8,1141.6 L953.0,1141.4 L957.2,1141.2 L961.5,1141.1 L965.7,1141.1 L969.9,1141.1 L974.1,1141.2 L978.4,1141.4 L982.6,1141.7 L986.8,1142.0 L991.1,1142.5 L995.3,1143.0 L999.5,1143.5 L1003.8,1144.1 L1008.0,1144.8 L1012.2,1145.5 L1016.4,1146.2 L1020.7,1146.9 L1024.9,1147.7 M924.8,1150.5 L929.2,1150.2 L933.6,1149.9 L938.0,1149.6 L942.4,1149.3 L946.8,1149.1 L951.2,1148.9 L955.6,1148.8 L960.0,1148.7 L964.4,1148.7 L968.7,1148.8 L973.1,1148.9 L977.5,1149.1 L981.9,1149.4 L986.3,1149.7 L990.7,1150.2 L995.1,1150.6 L999.5,1151.2 L1003.9,1151.8 L1008.3,1152.4 L1012.6,1153.1 L1017.0,1153.8 L1021.4,1154.5 L1025.8,1155.2 M952.0,1016.0 L980.5,952.1 M952.0,1016.0 L997.0,962.4 M952.0,1016.0 L1010.0,976.9 M952.0,1016.0 L1018.6,994.4 M952.0,1016.0 L1022.0,1013.6 M952.0,1016.0 L1019.9,1032.9 M952.0,1016.0 L1012.6,1051.0 M952.0,1016.0 L1000.6,1066.4 M952.0,1016.0 L984.9,1077.8 M952.0,1016.0 L966.6,1084.5" fill="none" stroke="#efebe7" stroke-width="1.15"/><path d="M998.3,923.1 L1000.2,926.8 L1002.7,930.4 L1005.0,934.1 L1006.9,937.7 L1008.8,941.3 L1010.6,945.0 L1011.4,948.6 L1012.2,952.3 L1012.9,955.9 L1013.5,959.6 L1014.0,963.2 L1014.5,966.8 L1014.7,970.5 L1014.6,974.1 L1014.5,977.8 L1014.5,981.4 L1014.1,985.1 L1013.7,988.7 L1013.4,992.4 L1013.1,996.0 L1012.7,999.6 L1012.4,1003.3 L1013.0,1006.9 L1014.0,1010.6 L1015.0,1014.2 L1016.1,1017.9 L1017.3,1021.5 L1018.5,1025.4 L1018.9,1029.3 L1017.6,1033.2 L1014.9,1037.1 L1014.1,1041.0 L1014.3,1044.9 L1014.5,1048.8 L1014.5,1052.7 L1014.4,1056.6 L1014.3,1060.5 L1014.2,1064.4 L1014.2,1068.3 L1014.5,1072.2 L1014.7,1076.1 L1014.6,1080.0 L1014.0,1083.9 L1012.7,1087.8 L1009.7,1091.7 L997.5,1095.6 L990.0,1099.5 L987.5,1103.4 L985.9,1107.3 M1000.2,923.1 L1002.7,926.7 L1005.5,930.4 L1008.2,934.0 L1010.2,937.7 L1012.3,941.3 L1014.3,945.0 L1015.2,948.6 L1016.2,952.3 L1017.1,955.9 L1017.7,959.6 L1018.3,963.2 L1018.9,966.9 L1019.3,970.5 L1019.2,974.2 L1019.2,977.8 L1019.2,981.5 L1018.9,985.1 L1018.6,988.8 L1018.3,992.4 L1018.0,996.0 L1017.7,999.7 L1017.4,1003.3 L1018.0,1007.0 L1019.1,1010.6 L1020.2,1014.3 L1021.3,1017.9 L1022.6,1021.6 L1023.9,1025.5 L1024.4,1029.4 L1022.9,1033.3 L1020.0,1037.2 L1019.1,1041.1 L1019.2,1045.0 L1019.4,1048.9 L1019.4,1052.8 L1019.2,1056.7 L1019.0,1060.6 L1018.9,1064.5 L1018.8,1068.4 L1019.0,1072.3 L1019.3,1076.2 L1019.1,1080.2 L1018.5,1084.1 L1017.1,1088.0 L1014.0,1091.9 L1001.0,1095.8 L993.0,1099.7 L990.5,1103.6 L988.8,1107.5 M1002.1,923.1 L1005.1,926.8 L1008.4,930.4 L1011.3,934.1 L1013.6,937.7 L1015.9,941.4 L1018.0,945.0 L1019.1,948.7 L1020.2,952.3 L1021.2,956.0 L1022.0,959.6 L1022.7,963.3 L1023.4,966.9 L1023.8,970.6 L1023.9,974.3 L1023.9,977.9 L1024.0,981.6 L1023.7,985.2 L1023.4,988.9 L1023.2,992.5 L1022.9,996.2 L1022.7,999.8 L1022.5,1003.5 L1023.1,1007.1 L1024.2,1010.8 L1025.4,1014.5 L1026.6,1018.1 L1028.0,1021.8 L1029.3,1025.7 L1029.8,1029.6 L1028.2,1033.5 L1025.1,1037.4 L1024.1,1041.3 L1024.2,1045.2 L1024.3,1049.1 L1024.3,1053.0 L1024.0,1056.9 L1023.7,1060.8 L1023.6,1064.7 L1023.5,1068.6 L1023.6,1072.5 L1023.8,1076.5 L1023.7,1080.4 L1023.0,1084.3 L1021.5,1088.2 L1018.2,1092.1 L1004.5,1096.0 L996.1,1099.9 L993.4,1103.8 L991.7,1107.7 M1004.0,923.2 L1007.6,926.8 L1011.2,930.5 L1014.4,934.1 L1016.9,937.8 L1019.4,941.5 L1021.7,945.1 L1023.0,948.8 L1024.2,952.5 L1025.4,956.1 L1026.2,959.8 L1027.1,963.4 L1027.9,967.1 L1028.4,970.8 L1028.5,974.4 L1028.6,978.1 L1028.7,981.8 L1028.5,985.4 L1028.3,989.1 L1028.1,992.7 L1027.9,996.4 L1027.7,1000.1 L1027.5,1003.7 L1028.2,1007.4 L1029.4,1011.1 L1030.6,1014.7 L1031.9,1018.4 L1033.3,1022.0 L1034.7,1025.9 L1035.2,1029.8 L1033.5,1033.8 L1030.1,1037.7 L1029.0,1041.6 L1029.1,1045.5 L1029.2,1049.4 L1029.1,1053.3 L1028.8,1057.2 L1028.5,1061.1 L1028.2,1065.0 L1028.1,1068.9 L1028.2,1072.8 L1028.4,1076.7 L1028.2,1080.6 L1027.5,1084.5 L1026.0,1088.4 L1022.5,1092.4 L1008.0,1096.3 L999.1,1100.2 L996.4,1104.1 L994.7,1108.0 M1005.8,923.3 L1010.1,927.0 L1014.0,930.6 L1017.6,934.3 L1020.3,938.0 L1022.9,941.6 L1025.5,945.3 L1026.8,949.0 L1028.2,952.7 L1029.5,956.3 L1030.5,960.0 L1031.4,963.7 L1032.3,967.3 L1032.9,971.0 L1033.1,974.7 L1033.3,978.3 L1033.5,982.0 L1033.3,985.7 L1033.1,989.4 L1033.0,993.0 L1032.8,996.7 L1032.7,1000.4 L1032.5,1004.0 L1033.3,1007.7 L1034.5,1011.4 L1035.8,1015.1 L1037.1,1018.7 L1038.6,1022.4 L1040.1,1026.3 L1040.6,1030.2 L1038.8,1034.1 L1035.2,1038.0 L1034.0,1041.9 L1034.0,1045.8 L1034.1,1049.7 L1034.0,1053.6 L1033.6,1057.5 L1033.2,1061.5 L1032.9,1065.4 L1032.7,1069.3 L1032.8,1073.2 L1032.9,1077.1 L1032.7,1081.0 L1032.0,1084.9 L1030.4,1088.8 L1026.8,1092.7 L1011.5,1096.6 L1002.2,1100.5 L999.3,1104.4 L997.6,1108.3 M1007.7,923.5 L1012.6,927.1 L1016.9,930.8 L1020.7,934.5 L1023.6,938.2 L1026.5,941.9 L1029.2,945.5 L1030.7,949.2 L1032.2,952.9 L1033.7,956.6 L1034.7,960.3 L1035.8,963.9 L1036.8,967.6 L1037.5,971.3 L1037.7,975.0 L1038.0,978.7 L1038.2,982.4 L1038.1,986.0 L1038.0,989.7 L1037.8,993.4 L1037.7,997.1 L1037.6,1000.8 L1037.5,1004.4 L1038.4,1008.1 L1039.7,1011.8 L1041.0,1015.5 L1042.4,1019.2 L1044.0,1022.9 L1045.5,1026.8 L1046.0,1030.7 L1044.1,1034.6 L1040.3,1038.5 L1039.0,1042.4 L1039.0,1046.3 L1039.0,1050.2 L1038.9,1054.1 L1038.4,1058.0 L1038.0,1061.9 L1037.6,1065.8 L1037.3,1069.7 L1037.4,1073.6 L1037.5,1077.5 L1037.2,1081.4 L1036.5,1085.3 L1034.8,1089.2 L1031.1,1093.1 L1015.0,1097.0 L1005.2,1100.9 L1002.3,1104.8 L1000.5,1108.7 M1009.6,923.7 L1015.1,927.4 L1019.7,931.1 L1023.9,934.7 L1026.9,938.4 L1030.0,942.1 L1032.9,945.8 L1034.5,949.5 L1036.2,953.2 L1037.8,956.9 L1039.0,960.6 L1040.1,964.3 L1041.3,968.0 L1042.0,971.7 L1042.3,975.4 L1042.6,979.1 L1043.0,982.8 L1042.9,986.5 L1042.8,990.1 L1042.7,993.8 L1042.7,997.5 L1042.6,1001.2 L1042.5,1004.9 L1043.4,1008.6 L1044.8,1012.3 L1046.2,1016.0 L1047.7,1019.7 L1049.3,1023.4 L1050.9,1027.3 L1051.4,1031.2 L1049.4,1035.1 L1045.3,1039.0 L1043.9,1042.9 L1043.9,1046.8 L1043.9,1050.7 L1043.7,1054.6 L1043.2,1058.5 L1042.7,1062.4 L1042.3,1066.3 L1042.0,1070.2 L1042.0,1074.1 L1042.1,1078.0 L1041.7,1081.9 L1041.0,1085.8 L1039.3,1089.7 L1035.4,1093.6 L1018.5,1097.5 L1008.2,1101.3 L1005.2,1105.2 L1003.4,1109.1 M1011.5,923.9 L1017.6,927.6 L1022.5,931.3 L1027.0,935.0 L1030.3,938.7 L1033.5,942.5 L1036.6,946.2 L1038.4,949.9 L1040.2,953.6 L1042.0,957.3 L1043.2,961.0 L1044.5,964.7 L1045.7,968.4 L1046.6,972.1 L1047.0,975.8 L1047.3,979.5 L1047.7,983.2 L1047.7,986.9 L1047.6,990.6 L1047.6,994.3 L1047.6,998.1 L1047.6,1001.8 L1047.6,1005.5 L1048.5,1009.2 L1049.9,1012.9 L1051.4,1016.6 L1052.9,1020.3 L1054.6,1024.0 L1056.3,1027.9 L1056.8,1031.8 L1054.7,1035.7 L1050.4,1039.6 L1048.9,1043.5 L1048.9,1047.4 L1048.8,1051.2 L1048.6,1055.1 L1048.0,1059.0 L1047.4,1062.9 L1046.9,1066.8 L1046.6,1070.7 L1046.6,1074.6 L1046.6,1078.5 L1046.2,1082.4 L1045.5,1086.3 L1043.7,1090.2 L1039.6,1094.1 L1022.0,1098.0 L1011.3,1101.9 L1008.2,1105.7 L1006.4,1109.6 M1013.4,924.2 L1020.0,927.9 L1025.3,931.7 L1030.1,935.4 L1033.6,939.1 L1037.0,942.8 L1040.3,946.5 L1042.3,950.3 L1044.2,954.0 L1046.1,957.7 L1047.5,961.4 L1048.9,965.1 L1050.2,968.9 L1051.1,972.6 L1051.6,976.3 L1052.0,980.0 L1052.5,983.7 L1052.5,987.5 L1052.5,991.2 L1052.5,994.9 L1052.5,998.6 L1052.6,1002.4 L1052.6,1006.1 L1053.6,1009.8 L1055.1,1013.5 L1056.6,1017.2 L1058.2,1021.0 L1060.0,1024.7 L1061.7,1028.6 L1062.3,1032.4 L1060.0,1036.3 L1055.5,1040.2 L1053.9,1044.1 L1053.8,1048.0 L1053.7,1051.9 L1053.5,1055.8 L1052.8,1059.7 L1052.2,1063.5 L1051.6,1067.4 L1051.2,1071.3 L1051.2,1075.2 L1051.2,1079.1 L1050.7,1083.0 L1050.0,1086.9 L1048.1,1090.7 L1043.9,1094.6 L1025.5,1098.5 L1014.3,1102.4 L1011.2,1106.3 L1009.3,1110.2 M1015.3,924.6 L1022.5,928.3 L1028.2,932.0 L1033.3,935.8 L1036.9,939.5 L1040.6,943.2 L1044.1,947.0 L1046.1,950.7 L1048.2,954.4 L1050.2,958.2 L1051.8,961.9 L1053.2,965.6 L1054.7,969.4 L1055.7,973.1 L1056.2,976.9 L1056.7,980.6 L1057.2,984.3 L1057.3,988.1 L1057.3,991.8 L1057.4,995.5 L1057.5,999.3 L1057.5,1003.0 L1057.6,1006.7 L1058.7,1010.5 L1060.2,1014.2 L1061.8,1017.9 L1063.5,1021.7 L1065.3,1025.4 L1067.1,1029.3 L1067.7,1033.2 L1065.3,1037.1 L1060.6,1040.9 L1058.8,1044.8 L1058.7,1048.7 L1058.6,1052.6 L1058.3,1056.4 L1057.6,1060.3 L1056.9,1064.2 L1056.3,1068.1 L1055.8,1072.0 L1055.8,1075.8 L1055.7,1079.7 L1055.3,1083.6 L1054.5,1087.5 L1052.6,1091.4 L1048.2,1095.2 L1029.0,1099.1 L1017.4,1103.0 L1014.1,1106.9 L1012.2,1110.8 M1017.2,924.9 L1025.0,928.7 L1031.0,932.4 L1036.4,936.2 L1040.3,939.9 L1044.1,943.7 L1047.8,947.4 L1050.0,951.2 L1052.2,954.9 L1054.4,958.7 L1056.0,962.4 L1057.6,966.2 L1059.1,969.9 L1060.2,973.7 L1060.8,977.4 L1061.4,981.2 L1062.0,984.9 L1062.1,988.7 L1062.2,992.4 L1062.3,996.2 L1062.4,999.9 L1062.5,1003.7 L1062.6,1007.5 L1063.7,1011.2 L1065.4,1015.0 L1067.0,1018.7 L1068.7,1022.5 L1070.6,1026.2 L1072.5,1030.1 L1073.1,1033.9 L1070.6,1037.8 L1065.6,1041.7 L1063.8,1045.6 L1063.7,1049.4 L1063.5,1053.3 L1063.2,1057.2 L1062.4,1061.0 L1061.7,1064.9 L1061.0,1068.8 L1060.5,1072.7 L1060.4,1076.5 L1060.3,1080.4 L1059.8,1084.3 L1059.0,1088.1 L1057.0,1092.0 L1052.5,1095.9 L1032.5,1099.8 L1020.4,1103.6 L1017.1,1107.5 L1015.1,1111.4 M1019.1,925.3 L1027.5,929.1 L1033.8,932.8 L1039.5,936.6 L1043.6,940.4 L1047.6,944.1 L1051.5,947.9 L1053.9,951.7 L1056.2,955.5 L1058.5,959.2 L1060.3,963.0 L1061.9,966.8 L1063.6,970.5 L1064.8,974.3 L1065.4,978.1 L1066.1,981.8 L1066.7,985.6 L1066.9,989.4 L1067.0,993.1 L1067.2,996.9 L1067.3,1000.7 L1067.5,1004.4 L1067.7,1008.2 L1068.8,1012.0 L1070.5,1015.7 L1072.2,1019.5 L1074.0,1023.3 L1076.0,1027.0 L1077.9,1030.9 L1078.5,1034.8 L1075.9,1038.6 L1070.7,1042.5 L1068.8,1046.4 L1068.6,1050.2 L1068.4,1054.1 L1068.1,1057.9 L1067.2,1061.8 L1066.4,1065.7 L1065.7,1069.5 L1065.1,1073.4 L1065.0,1077.3 L1064.9,1081.1 L1064.3,1085.0 L1063.5,1088.8 L1061.4,1092.7 L1056.8,1096.6 L1036.0,1100.4 L1023.5,1104.3 L1020.0,1108.1 L1018.0,1112.0 M1020.9,925.7 L1030.0,929.5 L1036.7,933.3 L1042.7,937.1 L1046.9,940.9 L1051.2,944.6 L1055.2,948.4 L1057.7,952.2 L1060.2,956.0 L1062.7,959.8 L1064.5,963.6 L1066.3,967.4 L1068.1,971.1 L1069.3,974.9 L1070.0,978.7 L1070.8,982.5 L1071.5,986.3 L1071.7,990.1 L1071.9,993.9 L1072.1,997.6 L1072.3,1001.4 L1072.5,1005.2 L1072.7,1009.0 L1073.9,1012.8 L1075.6,1016.6 L1077.4,1020.3 L1079.3,1024.1 L1081.3,1027.9 L1083.3,1031.8 L1083.9,1035.6 L1081.2,1039.5 L1075.8,1043.3 L1073.7,1047.2 L1073.5,1051.0 L1073.3,1054.9 L1072.9,1058.7 L1072.0,1062.6 L1071.1,1066.4 L1070.3,1070.3 L1069.7,1074.1 L1069.6,1078.0 L1069.4,1081.9 L1068.8,1085.7 L1068.0,1089.6 L1065.9,1093.4 L1061.1,1097.3 L1039.5,1101.1 L1026.5,1105.0 L1023.0,1108.8 L1021.0,1112.7 M1022.8,926.1 L1032.5,929.9 L1039.5,933.7 L1045.8,937.5 L1050.3,941.4 L1054.7,945.2 L1058.9,949.0 L1061.6,952.8 L1064.2,956.6 L1066.8,960.4 L1068.8,964.2 L1070.7,968.0 L1072.5,971.8 L1073.9,975.6 L1074.7,979.4 L1075.4,983.2 L1076.2,987.0 L1076.4,990.8 L1076.7,994.6 L1076.9,998.4 L1077.2,1002.2 L1077.4,1006.0 L1077.7,1009.8 L1079.0,1013.6 L1080.8,1017.4 L1082.6,1021.2 L1084.5,1025.0 L1086.6,1028.8 L1088.7,1032.7 L1089.3,1036.5 L1086.5,1040.3 L1080.8,1044.2 L1078.7,1048.0 L1078.5,1051.9 L1078.2,1055.7 L1077.8,1059.6 L1076.8,1063.4 L1075.9,1067.2 L1075.0,1071.1 L1074.3,1074.9 L1074.2,1078.8 L1074.0,1082.6 L1073.3,1086.5 L1072.5,1090.3 L1070.3,1094.1 L1065.3,1098.0 L1043.0,1101.8 L1029.6,1105.7 L1025.9,1109.5 L1023.9,1113.4 M1024.7,926.6 L1034.9,930.4 L1042.3,934.2 L1049.0,938.0 L1053.6,941.9 L1058.2,945.7 L1062.7,949.5 L1065.4,953.3 L1068.2,957.1 L1071.0,961.0 L1073.0,964.8 L1075.0,968.6 L1077.0,972.4 L1078.4,976.2 L1079.3,980.1 L1080.1,983.9 L1081.0,987.7 L1081.2,991.5 L1081.5,995.3 L1081.8,999.2 L1082.1,1003.0 L1082.4,1006.8 L1082.7,1010.6 L1084.1,1014.4 L1085.9,1018.3 L1087.8,1022.1 L1089.8,1025.9 L1092.0,1029.7 L1094.1,1033.6 L1094.7,1037.4 L1091.8,1041.2 L1085.9,1045.1 L1083.7,1048.9 L1083.4,1052.7 L1083.1,1056.6 L1082.7,1060.4 L1081.6,1064.2 L1080.6,1068.1 L1079.7,1071.9 L1078.9,1075.7 L1078.8,1079.6 L1078.6,1083.4 L1077.8,1087.2 L1077.0,1091.1 L1074.8,1094.9 L1069.6,1098.7 L1046.5,1102.6 L1032.6,1106.4 L1028.9,1110.2 L1026.8,1114.0 M1002.3,927.7 L1005.5,927.7 L1008.8,927.8 L1012.0,928.0 L1015.3,928.2 L1018.5,928.5 L1021.8,928.9 L1025.0,929.4 L1028.2,929.9 L1031.5,930.4 L1034.7,931.0 L1038.0,931.6 M1005.1,931.4 L1008.8,931.5 L1012.5,931.6 L1016.2,931.7 L1019.9,932.0 L1023.6,932.4 L1027.3,932.8 L1031.0,933.3 L1034.7,933.8 L1038.4,934.3 L1042.1,934.9 L1045.8,935.5 M1007.5,935.2 L1011.5,935.2 L1015.6,935.3 L1019.6,935.5 L1023.6,935.8 L1027.6,936.2 L1031.7,936.6 L1035.7,937.1 L1039.7,937.7 L1043.8,938.3 L1047.8,938.9 L1051.8,939.5 M1009.6,939.0 L1013.8,939.0 L1018.1,939.1 L1022.4,939.3 L1026.7,939.6 L1031.0,940.0 L1035.3,940.5 L1039.6,941.0 L1043.9,941.6 L1048.1,942.2 L1052.4,942.8 L1056.7,943.4 M1011.6,942.7 L1016.2,942.8 L1020.7,942.9 L1025.2,943.1 L1029.8,943.5 L1034.3,943.9 L1038.9,944.3 L1043.4,944.9 L1048.0,945.4 L1052.5,946.1 L1057.0,946.7 L1061.6,947.4 M1013.1,946.5 L1017.9,946.6 L1022.6,946.7 L1027.4,946.9 L1032.1,947.3 L1036.9,947.7 L1041.7,948.2 L1046.4,948.7 L1051.2,949.3 L1056.0,950.0 L1060.7,950.7 L1065.5,951.3 M1014.0,950.3 L1018.9,950.3 L1023.9,950.5 L1028.8,950.7 L1033.8,951.1 L1038.7,951.5 L1043.7,952.0 L1048.6,952.6 L1053.6,953.2 L1058.5,953.9 L1063.5,954.6 L1068.4,955.3 M1014.9,954.0 L1020.0,954.1 L1025.1,954.3 L1030.3,954.5 L1035.4,954.9 L1040.5,955.3 L1045.7,955.9 L1050.8,956.5 L1055.9,957.1 L1061.1,957.8 L1066.2,958.5 L1071.3,959.3 M1015.7,957.8 L1020.9,957.9 L1026.2,958.0 L1031.5,958.3 L1036.8,958.7 L1042.1,959.2 L1047.4,959.7 L1052.7,960.3 L1058.0,961.0 L1063.3,961.7 L1068.6,962.4 L1073.9,963.2 M1016.2,961.6 L1021.7,961.6 L1027.1,961.8 L1032.5,962.1 L1038.0,962.5 L1043.4,963.0 L1048.8,963.6 L1054.3,964.2 L1059.7,964.9 L1065.1,965.6 L1070.6,966.4 L1076.0,967.2 M1016.8,965.3 L1022.4,965.4 L1028.0,965.6 L1033.5,965.9 L1039.1,966.3 L1044.7,966.8 L1050.2,967.4 L1055.8,968.1 L1061.4,968.8 L1067.0,969.5 L1072.5,970.3 L1078.1,971.1 M1017.4,969.1 L1023.1,969.2 L1028.8,969.4 L1034.5,969.7 L1040.2,970.1 L1045.9,970.6 L1051.6,971.2 L1057.3,971.9 L1063.0,972.7 L1068.7,973.4 L1074.4,974.2 L1080.1,975.1 M1017.3,972.9 L1023.1,973.0 L1028.9,973.2 L1034.7,973.5 L1040.5,973.9 L1046.3,974.5 L1052.0,975.1 L1057.8,975.8 L1063.6,976.5 L1069.4,977.3 L1075.2,978.2 L1081.0,979.0 M1017.3,976.6 L1023.1,976.7 L1029.0,977.0 L1034.9,977.3 L1040.8,977.8 L1046.6,978.3 L1052.5,978.9 L1058.4,979.6 L1064.3,980.4 L1070.1,981.2 L1076.0,982.1 L1081.9,983.0 M1017.2,980.4 L1023.2,980.5 L1029.1,980.8 L1035.1,981.1 L1041.1,981.6 L1047.0,982.1 L1053.0,982.8 L1058.9,983.5 L1064.9,984.3 L1070.9,985.2 L1076.8,986.0 L1082.8,986.9 M1016.9,984.2 L1023.0,984.3 L1029.0,984.5 L1035.0,984.9 L1041.1,985.4 L1047.1,986.0 L1053.1,986.6 L1059.1,987.4 L1065.2,988.2 L1071.2,989.1 L1077.2,990.0 L1083.2,990.9 M1016.6,987.9 L1022.7,988.1 L1028.8,988.3 L1034.9,988.7 L1041.0,989.2 L1047.0,989.8 L1053.1,990.5 L1059.2,991.2 L1065.3,992.1 L1071.4,993.0 L1077.5,993.9 L1083.6,994.8 M1016.3,991.7 L1022.4,991.8 L1028.6,992.1 L1034.7,992.5 L1040.9,993.0 L1047.0,993.6 L1053.2,994.3 L1059.3,995.1 L1065.5,996.0 L1071.6,996.9 L1077.7,997.8 L1083.9,998.8 M1016.0,995.5 L1022.2,995.6 L1028.4,995.9 L1034.6,996.3 L1040.8,996.8 L1047.0,997.4 L1053.2,998.2 L1059.4,999.0 L1065.6,999.9 L1071.8,1000.8 L1078.0,1001.8 L1084.2,1002.8 M1015.7,999.2 L1021.9,999.4 L1028.2,999.7 L1034.4,1000.1 L1040.7,1000.6 L1047.0,1001.3 L1053.2,1002.0 L1059.5,1002.8 L1065.8,1003.7 L1072.0,1004.7 L1078.3,1005.7 L1084.5,1006.7 M1015.3,1003.0 L1021.7,1003.2 L1028.0,1003.5 L1034.3,1003.9 L1040.6,1004.4 L1046.9,1005.1 L1053.3,1005.9 L1059.6,1006.7 L1065.9,1007.6 L1072.2,1008.6 L1078.5,1009.6 L1084.9,1010.7 M1015.8,1006.8 L1022.2,1006.9 L1028.6,1007.2 L1035.0,1007.7 L1041.4,1008.2 L1047.8,1008.9 L1054.2,1009.7 L1060.6,1010.6 L1067.0,1011.5 L1073.4,1012.5 L1079.8,1013.6 L1086.2,1014.6 M1016.9,1010.5 L1023.4,1010.7 L1029.9,1011.0 L1036.3,1011.5 L1042.8,1012.0 L1049.3,1012.7 L1055.8,1013.5 L1062.2,1014.4 L1068.7,1015.4 L1075.2,1016.4 L1081.6,1017.5 L1088.1,1018.6 M1018.0,1014.3 L1024.5,1014.5 L1031.1,1014.8 L1037.6,1015.3 L1044.2,1015.9 L1050.7,1016.6 L1057.3,1017.4 L1063.9,1018.3 L1070.4,1019.3 L1077.0,1020.3 L1083.5,1021.4 L1090.1,1022.5 M1019.2,1018.1 L1025.8,1018.3 L1032.4,1018.6 L1039.1,1019.1 L1045.7,1019.7 L1052.4,1020.4 L1059.0,1021.2 L1065.6,1022.2 L1072.3,1023.2 L1078.9,1024.2 L1085.5,1025.4 L1092.2,1026.5 M1020.5,1021.9 L1027.2,1022.1 L1033.9,1022.4 L1040.6,1022.9 L1047.4,1023.5 L1054.1,1024.2 L1060.8,1025.1 L1067.5,1026.0 L1074.3,1027.1 L1081.0,1028.2 L1087.7,1029.3 L1094.4,1030.4 M1021.8,1025.9 L1028.6,1026.1 L1035.4,1026.4 L1042.2,1026.9 L1049.0,1027.5 L1055.8,1028.3 L1062.7,1029.1 L1069.5,1030.0 L1076.3,1031.1 L1083.1,1032.1 L1089.9,1033.3 L1096.7,1034.4 M1021.9,1029.9 L1028.7,1030.1 L1035.5,1030.5 L1042.2,1030.9 L1049.0,1031.6 L1055.8,1032.3 L1062.6,1033.1 L1069.4,1034.0 L1076.2,1035.1 L1083.0,1036.1 L1089.8,1037.2 L1096.6,1038.4 M1020.2,1034.0 L1026.8,1034.2 L1033.4,1034.5 L1040.1,1035.0 L1046.7,1035.6 L1053.3,1036.3 L1059.9,1037.1 L1066.5,1038.1 L1073.2,1039.0 L1079.8,1040.1 L1086.4,1041.2 L1093.0,1042.3 M1017.3,1038.0 L1023.6,1038.2 L1029.9,1038.5 L1036.2,1039.0 L1042.5,1039.6 L1048.9,1040.3 L1055.2,1041.1 L1061.5,1042.1 L1067.8,1043.0 L1074.2,1044.1 L1080.5,1045.2 L1086.8,1046.3 M1017.0,1042.0 L1023.3,1042.2 L1029.5,1042.6 L1035.8,1043.0 L1042.0,1043.6 L1048.3,1044.3 L1054.5,1045.2 L1060.8,1046.1 L1067.0,1047.0 L1073.3,1048.1 L1079.5,1049.1 L1085.8,1050.2 M1017.2,1046.1 L1023.4,1046.3 L1029.6,1046.6 L1035.8,1047.1 L1042.0,1047.7 L1048.2,1048.4 L1054.4,1049.2 L1060.6,1050.1 L1066.9,1051.0 L1073.1,1052.0 L1079.3,1053.1 L1085.5,1054.2 M1017.3,1050.1 L1023.5,1050.3 L1029.7,1050.6 L1035.8,1051.1 L1042.0,1051.7 L1048.2,1052.4 L1054.3,1053.2 L1060.5,1054.1 L1066.7,1055.0 L1072.8,1056.0 L1079.0,1057.1 L1085.2,1058.1 M1017.3,1054.1 L1023.4,1054.3 L1029.5,1054.7 L1035.6,1055.1 L1041.7,1055.7 L1047.8,1056.4 L1053.9,1057.2 L1060.0,1058.1 L1066.1,1059.0 L1072.2,1060.0 L1078.3,1061.0 L1084.4,1062.1 M1017.1,1058.2 L1023.1,1058.4 L1029.1,1058.7 L1035.1,1059.2 L1041.2,1059.8 L1047.2,1060.4 L1053.2,1061.2 L1059.2,1062.1 L1065.2,1063.0 L1071.3,1064.0 L1077.3,1065.0 L1083.3,1066.0 M1017.0,1062.2 L1022.9,1062.4 L1028.8,1062.7 L1034.8,1063.2 L1040.7,1063.8 L1046.6,1064.5 L1052.6,1065.2 L1058.5,1066.1 L1064.5,1067.0 L1070.4,1068.0 L1076.3,1069.0 L1082.3,1070.0 M1016.9,1066.2 L1022.7,1066.4 L1028.6,1066.8 L1034.4,1067.2 L1040.3,1067.8 L1046.1,1068.5 L1052.0,1069.2 L1057.9,1070.1 L1063.7,1071.0 L1069.6,1071.9 L1075.4,1072.9 L1081.3,1073.9 M1017.0,1070.3 L1022.8,1070.5 L1028.6,1070.8 L1034.4,1071.3 L1040.2,1071.8 L1046.0,1072.5 L1051.8,1073.3 L1057.6,1074.1 L1063.4,1075.0 L1069.2,1075.9 L1075.0,1076.9 L1080.9,1077.9 M1017.2,1074.3 L1023.0,1074.5 L1028.7,1074.9 L1034.5,1075.3 L1040.3,1075.9 L1046.0,1076.5 L1051.8,1077.3 L1057.6,1078.1 L1063.3,1079.0 L1069.1,1079.9 L1074.9,1080.9 L1080.6,1081.9 M1017.3,1078.3 L1023.0,1078.5 L1028.7,1078.9 L1034.5,1079.3 L1040.2,1079.9 L1045.9,1080.5 L1051.6,1081.3 L1057.3,1082.1 L1063.0,1083.0 L1068.7,1083.9 L1074.5,1084.8 L1080.2,1085.8 M1016.9,1082.3 L1022.5,1082.6 L1028.2,1082.9 L1033.9,1083.4 L1039.6,1083.9 L1045.2,1084.6 L1050.9,1085.3 L1056.6,1086.1 L1062.3,1087.0 L1067.9,1087.9 L1073.6,1088.8 L1079.3,1089.8 M1015.9,1086.4 L1021.5,1086.6 L1027.1,1087.0 L1032.7,1087.4 L1038.4,1088.0 L1044.0,1088.6 L1049.6,1089.3 L1055.3,1090.1 L1060.9,1091.0 L1066.5,1091.9 L1072.1,1092.8 L1077.8,1093.7 M1013.9,1090.4 L1019.5,1090.6 L1025.0,1091.0 L1030.5,1091.4 L1036.0,1092.0 L1041.5,1092.6 L1047.0,1093.3 L1052.5,1094.1 L1058.1,1095.0 L1063.6,1095.8 L1069.1,1096.7 L1074.6,1097.7 M1005.0,1094.4 L1009.9,1094.7 L1014.7,1095.0 L1019.6,1095.5 L1024.5,1096.0 L1029.3,1096.6 L1034.2,1097.3 L1039.0,1098.1 L1043.9,1098.9 L1048.7,1099.8 L1053.6,1100.7 L1058.4,1101.6 M992.4,1098.5 L996.3,1098.7 L1000.2,1099.1 L1004.0,1099.5 L1007.9,1100.0 L1011.8,1100.7 L1015.7,1101.4 L1019.5,1102.1 L1023.4,1102.9 L1027.3,1103.8 L1031.2,1104.7 L1035.0,1105.6 M989.9,1102.5 L993.6,1102.8 L997.4,1103.1 L1001.1,1103.5 L1004.9,1104.1 L1008.6,1104.7 L1012.4,1105.4 L1016.1,1106.1 L1019.9,1106.9 L1023.6,1107.8 L1027.4,1108.7 L1031.1,1109.5" fill="none" stroke="#efebe7" stroke-width="0.9" opacity=".9"/></g><path d="M1000.0,923.0 L1018.0,926.0 L1031.0,929.0 L1049.0,938.0 L1064.0,950.0 L1073.0,962.0 L1080.0,975.0 L1083.0,988.0 L1084.0,1000.0 L1085.0,1012.0 L1091.0,1024.0 L1098.0,1036.0 L1094.0,1041.0 L1086.0,1046.0 L1085.5,1053.0 L1085.0,1059.0 L1083.0,1066.0 L1081.0,1074.0 L1080.5,1083.0 L1078.7,1091.0 L1075.0,1096.0 L1068.0,1099.0 L1050.0,1101.0 L1036.0,1103.0 L1029.0,1110.0 L1024.0,1124.0 L1025.0,1148.0 L1027.0,1160.0 L922.0,1160.0 L926.0,1150.0 L929.6,1140.0 L935.0,1132.0 L939.6,1124.0 L943.0,1115.0 L946.0,1105.0 L948.5,1095.0 L949.5,1086.0 L947.5,1075.0 L944.5,1061.0 L941.0,1040.0 L940.0,1025.0 L939.6,1012.0 L944.0,995.0 L949.5,975.0 L953.0,962.0 L957.0,950.0 L960.0,938.0 L966.0,929.0 L982.0,925.0 L1000.0,923.0 Z" fill="none" stroke="#efebe7" stroke-width="1.4"/><ellipse cx="989" cy="1020" rx="13" ry="25" transform="rotate(-24 989 1020)" fill="#efebe7" opacity=".8"/><path d="M1010,1150 L1010,1205 M1014,1150 L1014,1215 M1018,1150 L1018,1195" stroke="#efebe7" stroke-width="1" opacity=".8"/><g transform="translate(904.2,1208.8) scale(23.60,35.10)"><path d="M-0.42,0.50 C-0.53,0.40 -0.54,0.04 0,0 C0.54,0.04 0.53,0.40 0.42,0.50 C0.47,0.58 0.42,0.66 0.37,0.70 L0.31,0.89 C0.22,1.01 -0.22,1.01 -0.31,0.89 L-0.37,0.70 C-0.42,0.66 -0.47,0.58 -0.42,0.50 Z" fill="url(#skg)"/><path d="M0.27,0.07 C0.50,0.18 0.52,0.40 0.42,0.50 C0.46,0.58 0.41,0.66 0.37,0.70 L0.31,0.89 C0.27,0.95 0.2,0.98 0.12,0.99 C0.24,0.9 0.24,0.72 0.3,0.6 C0.38,0.46 0.40,0.26 0.27,0.07 Z" fill="#777471" opacity=".55"/><path d="M-0.36,0.40 C-0.28,0.33 -0.12,0.33 -0.04,0.40 C-0.12,0.37 -0.28,0.37 -0.36,0.40 Z M0.04,0.39 C0.12,0.32 0.30,0.32 0.38,0.40 C0.30,0.36 0.12,0.36 0.04,0.39 Z" fill="#8a8784" opacity=".7"/><path d="M-0.335,0.43 C-0.30,0.37 -0.16,0.375 -0.075,0.42 C-0.06,0.47 -0.09,0.53 -0.17,0.545 C-0.27,0.55 -0.34,0.50 -0.335,0.43 Z" fill="#121212"/><path d="M0.345,0.42 C0.31,0.36 0.17,0.365 0.085,0.41 C0.07,0.46 0.10,0.52 0.18,0.535 C0.28,0.54 0.35,0.49 0.345,0.42 Z" fill="#121212"/><path d="M-0.26,0.50 C-0.2,0.53 -0.14,0.52 -0.10,0.49 C-0.13,0.535 -0.22,0.55 -0.26,0.50 Z" fill="#a8a5a2" opacity=".8"/><path d="M0.27,0.49 C0.21,0.52 0.15,0.51 0.11,0.48 C0.14,0.525 0.23,0.54 0.27,0.49 Z" fill="#a8a5a2" opacity=".8"/><path d="M0.0,0.49 C0.10,0.56 0.12,0.67 0.07,0.70 C0.035,0.71 0.01,0.68 0,0.64 C-0.01,0.68 -0.035,0.71 -0.07,0.70 C-0.12,0.67 -0.10,0.56 0,0.49 Z" fill="#121212"/><path d="M-0.37,0.62 C-0.30,0.66 -0.265,0.72 -0.285,0.81 C-0.34,0.75 -0.38,0.68 -0.37,0.62 Z" fill="#1c1c1c" opacity=".85"/><path d="M0.37,0.60 C0.30,0.66 0.265,0.72 0.285,0.83 C0.35,0.75 0.39,0.68 0.37,0.60 Z" fill="#161616" opacity=".95"/><path d="M-0.235,0.755 C-0.1,0.79 0.1,0.79 0.235,0.745 L0.22,0.86 C0.1,0.895 -0.1,0.895 -0.22,0.86 Z" fill="#55524f" opacity=".9"/><path d="M-0.190,0.772 L-0.190,0.818 M-0.180,0.838 L-0.180,0.878 M-0.148,0.772 L-0.148,0.818 M-0.140,0.838 L-0.140,0.878 M-0.106,0.772 L-0.106,0.818 M-0.100,0.838 L-0.100,0.878 M-0.063,0.772 L-0.063,0.818 M-0.060,0.838 L-0.060,0.878 M-0.021,0.772 L-0.021,0.818 M-0.020,0.838 L-0.020,0.878 M0.021,0.772 L0.021,0.818 M0.020,0.838 L0.020,0.878 M0.063,0.772 L0.063,0.818 M0.060,0.838 L0.060,0.878 M0.106,0.772 L0.106,0.818 M0.100,0.838 L0.100,0.878 M0.148,0.772 L0.148,0.818 M0.140,0.838 L0.140,0.878 M0.190,0.772 L0.190,0.818 M0.180,0.838 L0.180,0.878 " stroke="#f4f1ee" stroke-width="0.03" fill="none"/><path d="M-0.225,0.822 C-0.1,0.846 0.1,0.846 0.225,0.812" stroke="#1a1a1a" stroke-width="0.014" fill="none"/><path d="M-0.2,0.93 C-0.08,0.97 0.1,0.97 0.22,0.92 C0.14,0.99 -0.12,1.0 -0.2,0.93 Z" fill="#8a8784" opacity=".5"/></g><g transform="translate(934.9,1196.3) scale(31.70,47.20)"><path d="M-0.42,0.50 C-0.53,0.40 -0.54,0.04 0,0 C0.54,0.04 0.53,0.40 0.42,0.50 C0.47,0.58 0.42,0.66 0.37,0.70 L0.31,0.89 C0.22,1.01 -0.22,1.01 -0.31,0.89 L-0.37,0.70 C-0.42,0.66 -0.47,0.58 -0.42,0.50 Z" fill="url(#skg)"/><path d="M0.27,0.07 C0.50,0.18 0.52,0.40 0.42,0.50 C0.46,0.58 0.41,0.66 0.37,0.70 L0.31,0.89 C0.27,0.95 0.2,0.98 0.12,0.99 C0.24,0.9 0.24,0.72 0.3,0.6 C0.38,0.46 0.40,0.26 0.27,0.07 Z" fill="#777471" opacity=".55"/><path d="M-0.36,0.40 C-0.28,0.33 -0.12,0.33 -0.04,0.40 C-0.12,0.37 -0.28,0.37 -0.36,0.40 Z M0.04,0.39 C0.12,0.32 0.30,0.32 0.38,0.40 C0.30,0.36 0.12,0.36 0.04,0.39 Z" fill="#8a8784" opacity=".7"/><path d="M-0.335,0.43 C-0.30,0.37 -0.16,0.375 -0.075,0.42 C-0.06,0.47 -0.09,0.53 -0.17,0.545 C-0.27,0.55 -0.34,0.50 -0.335,0.43 Z" fill="#121212"/><path d="M0.345,0.42 C0.31,0.36 0.17,0.365 0.085,0.41 C0.07,0.46 0.10,0.52 0.18,0.535 C0.28,0.54 0.35,0.49 0.345,0.42 Z" fill="#121212"/><path d="M-0.26,0.50 C-0.2,0.53 -0.14,0.52 -0.10,0.49 C-0.13,0.535 -0.22,0.55 -0.26,0.50 Z" fill="#a8a5a2" opacity=".8"/><path d="M0.27,0.49 C0.21,0.52 0.15,0.51 0.11,0.48 C0.14,0.525 0.23,0.54 0.27,0.49 Z" fill="#a8a5a2" opacity=".8"/><path d="M0.0,0.49 C0.10,0.56 0.12,0.67 0.07,0.70 C0.035,0.71 0.01,0.68 0,0.64 C-0.01,0.68 -0.035,0.71 -0.07,0.70 C-0.12,0.67 -0.10,0.56 0,0.49 Z" fill="#121212"/><path d="M-0.37,0.62 C-0.30,0.66 -0.265,0.72 -0.285,0.81 C-0.34,0.75 -0.38,0.68 -0.37,0.62 Z" fill="#1c1c1c" opacity=".85"/><path d="M0.37,0.60 C0.30,0.66 0.265,0.72 0.285,0.83 C0.35,0.75 0.39,0.68 0.37,0.60 Z" fill="#161616" opacity=".95"/><path d="M-0.235,0.755 C-0.1,0.79 0.1,0.79 0.235,0.745 L0.22,0.86 C0.1,0.895 -0.1,0.895 -0.22,0.86 Z" fill="#55524f" opacity=".9"/><path d="M-0.190,0.772 L-0.190,0.818 M-0.180,0.838 L-0.180,0.878 M-0.148,0.772 L-0.148,0.818 M-0.140,0.838 L-0.140,0.878 M-0.106,0.772 L-0.106,0.818 M-0.100,0.838 L-0.100,0.878 M-0.063,0.772 L-0.063,0.818 M-0.060,0.838 L-0.060,0.878 M-0.021,0.772 L-0.021,0.818 M-0.020,0.838 L-0.020,0.878 M0.021,0.772 L0.021,0.818 M0.020,0.838 L0.020,0.878 M0.063,0.772 L0.063,0.818 M0.060,0.838 L0.060,0.878 M0.106,0.772 L0.106,0.818 M0.100,0.838 L0.100,0.878 M0.148,0.772 L0.148,0.818 M0.140,0.838 L0.140,0.878 M0.190,0.772 L0.190,0.818 M0.180,0.838 L0.180,0.878 " stroke="#f4f1ee" stroke-width="0.03" fill="none"/><path d="M-0.225,0.822 C-0.1,0.846 0.1,0.846 0.225,0.812" stroke="#1a1a1a" stroke-width="0.014" fill="none"/><path d="M-0.2,0.93 C-0.08,0.97 0.1,0.97 0.22,0.92 C0.14,0.99 -0.12,1.0 -0.2,0.93 Z" fill="#8a8784" opacity=".5"/></g><g transform="translate(977.8,1172.7) scale(47.80,71.20)"><path d="M-0.42,0.50 C-0.53,0.40 -0.54,0.04 0,0 C0.54,0.04 0.53,0.40 0.42,0.50 C0.47,0.58 0.42,0.66 0.37,0.70 L0.31,0.89 C0.22,1.01 -0.22,1.01 -0.31,0.89 L-0.37,0.70 C-0.42,0.66 -0.47,0.58 -0.42,0.50 Z" fill="url(#skg)"/><path d="M0.27,0.07 C0.50,0.18 0.52,0.40 0.42,0.50 C0.46,0.58 0.41,0.66 0.37,0.70 L0.31,0.89 C0.27,0.95 0.2,0.98 0.12,0.99 C0.24,0.9 0.24,0.72 0.3,0.6 C0.38,0.46 0.40,0.26 0.27,0.07 Z" fill="#777471" opacity=".55"/><path d="M-0.36,0.40 C-0.28,0.33 -0.12,0.33 -0.04,0.40 C-0.12,0.37 -0.28,0.37 -0.36,0.40 Z M0.04,0.39 C0.12,0.32 0.30,0.32 0.38,0.40 C0.30,0.36 0.12,0.36 0.04,0.39 Z" fill="#8a8784" opacity=".7"/><path d="M-0.335,0.43 C-0.30,0.37 -0.16,0.375 -0.075,0.42 C-0.06,0.47 -0.09,0.53 -0.17,0.545 C-0.27,0.55 -0.34,0.50 -0.335,0.43 Z" fill="#121212"/><path d="M0.345,0.42 C0.31,0.36 0.17,0.365 0.085,0.41 C0.07,0.46 0.10,0.52 0.18,0.535 C0.28,0.54 0.35,0.49 0.345,0.42 Z" fill="#121212"/><path d="M-0.26,0.50 C-0.2,0.53 -0.14,0.52 -0.10,0.49 C-0.13,0.535 -0.22,0.55 -0.26,0.50 Z" fill="#a8a5a2" opacity=".8"/><path d="M0.27,0.49 C0.21,0.52 0.15,0.51 0.11,0.48 C0.14,0.525 0.23,0.54 0.27,0.49 Z" fill="#a8a5a2" opacity=".8"/><path d="M0.0,0.49 C0.10,0.56 0.12,0.67 0.07,0.70 C0.035,0.71 0.01,0.68 0,0.64 C-0.01,0.68 -0.035,0.71 -0.07,0.70 C-0.12,0.67 -0.10,0.56 0,0.49 Z" fill="#121212"/><path d="M-0.37,0.62 C-0.30,0.66 -0.265,0.72 -0.285,0.81 C-0.34,0.75 -0.38,0.68 -0.37,0.62 Z" fill="#1c1c1c" opacity=".85"/><path d="M0.37,0.60 C0.30,0.66 0.265,0.72 0.285,0.83 C0.35,0.75 0.39,0.68 0.37,0.60 Z" fill="#161616" opacity=".95"/><path d="M-0.235,0.755 C-0.1,0.79 0.1,0.79 0.235,0.745 L0.22,0.86 C0.1,0.895 -0.1,0.895 -0.22,0.86 Z" fill="#55524f" opacity=".9"/><path d="M-0.190,0.772 L-0.190,0.818 M-0.180,0.838 L-0.180,0.878 M-0.148,0.772 L-0.148,0.818 M-0.140,0.838 L-0.140,0.878 M-0.106,0.772 L-0.106,0.818 M-0.100,0.838 L-0.100,0.878 M-0.063,0.772 L-0.063,0.818 M-0.060,0.838 L-0.060,0.878 M-0.021,0.772 L-0.021,0.818 M-0.020,0.838 L-0.020,0.878 M0.021,0.772 L0.021,0.818 M0.020,0.838 L0.020,0.878 M0.063,0.772 L0.063,0.818 M0.060,0.838 L0.060,0.878 M0.106,0.772 L0.106,0.818 M0.100,0.838 L0.100,0.878 M0.148,0.772 L0.148,0.818 M0.140,0.838 L0.140,0.878 M0.190,0.772 L0.190,0.818 M0.180,0.838 L0.180,0.878 " stroke="#f4f1ee" stroke-width="0.03" fill="none"/><path d="M-0.225,0.822 C-0.1,0.846 0.1,0.846 0.225,0.812" stroke="#1a1a1a" stroke-width="0.014" fill="none"/><path d="M-0.2,0.93 C-0.08,0.97 0.1,0.97 0.22,0.92 C0.14,0.99 -0.12,1.0 -0.2,0.93 Z" fill="#8a8784" opacity=".5"/></g><g transform="translate(1041.2,1125.5) scale(78.90,118.00)"><path d="M-0.42,0.50 C-0.53,0.40 -0.54,0.04 0,0 C0.54,0.04 0.53,0.40 0.42,0.50 C0.47,0.58 0.42,0.66 0.37,0.70 L0.31,0.89 C0.22,1.01 -0.22,1.01 -0.31,0.89 L-0.37,0.70 C-0.42,0.66 -0.47,0.58 -0.42,0.50 Z" fill="url(#skg)"/><path d="M0.27,0.07 C0.50,0.18 0.52,0.40 0.42,0.50 C0.46,0.58 0.41,0.66 0.37,0.70 L0.31,0.89 C0.27,0.95 0.2,0.98 0.12,0.99 C0.24,0.9 0.24,0.72 0.3,0.6 C0.38,0.46 0.40,0.26 0.27,0.07 Z" fill="#777471" opacity=".55"/><path d="M-0.36,0.40 C-0.28,0.33 -0.12,0.33 -0.04,0.40 C-0.12,0.37 -0.28,0.37 -0.36,0.40 Z M0.04,0.39 C0.12,0.32 0.30,0.32 0.38,0.40 C0.30,0.36 0.12,0.36 0.04,0.39 Z" fill="#8a8784" opacity=".7"/><path d="M-0.335,0.43 C-0.30,0.37 -0.16,0.375 -0.075,0.42 C-0.06,0.47 -0.09,0.53 -0.17,0.545 C-0.27,0.55 -0.34,0.50 -0.335,0.43 Z" fill="#121212"/><path d="M0.345,0.42 C0.31,0.36 0.17,0.365 0.085,0.41 C0.07,0.46 0.10,0.52 0.18,0.535 C0.28,0.54 0.35,0.49 0.345,0.42 Z" fill="#121212"/><path d="M-0.26,0.50 C-0.2,0.53 -0.14,0.52 -0.10,0.49 C-0.13,0.535 -0.22,0.55 -0.26,0.50 Z" fill="#a8a5a2" opacity=".8"/><path d="M0.27,0.49 C0.21,0.52 0.15,0.51 0.11,0.48 C0.14,0.525 0.23,0.54 0.27,0.49 Z" fill="#a8a5a2" opacity=".8"/><path d="M0.0,0.49 C0.10,0.56 0.12,0.67 0.07,0.70 C0.035,0.71 0.01,0.68 0,0.64 C-0.01,0.68 -0.035,0.71 -0.07,0.70 C-0.12,0.67 -0.10,0.56 0,0.49 Z" fill="#121212"/><path d="M-0.37,0.62 C-0.30,0.66 -0.265,0.72 -0.285,0.81 C-0.34,0.75 -0.38,0.68 -0.37,0.62 Z" fill="#1c1c1c" opacity=".85"/><path d="M0.37,0.60 C0.30,0.66 0.265,0.72 0.285,0.83 C0.35,0.75 0.39,0.68 0.37,0.60 Z" fill="#161616" opacity=".95"/><path d="M-0.235,0.755 C-0.1,0.79 0.1,0.79 0.235,0.745 L0.22,0.86 C0.1,0.895 -0.1,0.895 -0.22,0.86 Z" fill="#55524f" opacity=".9"/><path d="M-0.190,0.772 L-0.190,0.818 M-0.180,0.838 L-0.180,0.878 M-0.148,0.772 L-0.148,0.818 M-0.140,0.838 L-0.140,0.878 M-0.106,0.772 L-0.106,0.818 M-0.100,0.838 L-0.100,0.878 M-0.063,0.772 L-0.063,0.818 M-0.060,0.838 L-0.060,0.878 M-0.021,0.772 L-0.021,0.818 M-0.020,0.838 L-0.020,0.878 M0.021,0.772 L0.021,0.818 M0.020,0.838 L0.020,0.878 M0.063,0.772 L0.063,0.818 M0.060,0.838 L0.060,0.878 M0.106,0.772 L0.106,0.818 M0.100,0.838 L0.100,0.878 M0.148,0.772 L0.148,0.818 M0.140,0.838 L0.140,0.878 M0.190,0.772 L0.190,0.818 M0.180,0.838 L0.180,0.878 " stroke="#f4f1ee" stroke-width="0.03" fill="none"/><path d="M-0.225,0.822 C-0.1,0.846 0.1,0.846 0.225,0.812" stroke="#1a1a1a" stroke-width="0.014" fill="none"/><path d="M-0.2,0.93 C-0.08,0.97 0.1,0.97 0.22,0.92 C0.14,0.99 -0.12,1.0 -0.2,0.93 Z" fill="#8a8784" opacity=".5"/></g><path d="M880,1236 L893,1236 M915,1236 L921,1236 M948,1236 L958,1236" stroke="#efebe7" stroke-width="1.6"/><rect x="934.6" y="928.0" width="28.6" height="11.8" rx="4.9" fill="#efebe7"/><text x="948.9" y="938.4" font-size="13.5" font-weight="700" fill="#121212" text-anchor="middle" textLength="23.6" lengthAdjust="spacingAndGlyphs" font-family="'Liberation Mono',monospace">*001</text><rect x="915.3" y="954.7" width="29.2" height="11.1" rx="4.6" fill="#efebe7"/><text x="929.9" y="964.7" font-size="13.5" font-weight="700" fill="#121212" text-anchor="middle" textLength="24.2" lengthAdjust="spacingAndGlyphs" font-family="'Liberation Mono',monospace">*002</text><rect x="907.9" y="982.0" width="29.1" height="11.8" rx="4.9" fill="#efebe7"/><text x="922.5" y="992.4" font-size="13.5" font-weight="700" fill="#121212" text-anchor="middle" textLength="24.1" lengthAdjust="spacingAndGlyphs" font-family="'Liberation Mono',monospace">*003</text><rect x="904.8" y="1009.3" width="29.8" height="11.7" rx="4.9" fill="#efebe7"/><text x="919.7" y="1019.6" font-size="13.5" font-weight="700" fill="#121212" text-anchor="middle" textLength="24.8" lengthAdjust="spacingAndGlyphs" font-family="'Liberation Mono',monospace">*004</text><rect x="911.0" y="1037.3" width="29.8" height="11.7" rx="4.9" fill="#efebe7"/><text x="925.9" y="1047.6" font-size="13.5" font-weight="700" fill="#121212" text-anchor="middle" textLength="24.8" lengthAdjust="spacingAndGlyphs" font-family="'Liberation Mono',monospace">*005</text><rect x="922.2" y="1067.0" width="28.5" height="11.9" rx="5.0" fill="#efebe7"/><text x="936.5" y="1077.4" font-size="13.5" font-weight="700" fill="#121212" text-anchor="middle" textLength="23.5" lengthAdjust="spacingAndGlyphs" font-family="'Liberation Mono',monospace">*006</text><rect x="924.7" y="1093.8" width="29.8" height="11.2" rx="4.7" fill="#efebe7"/><text x="939.6" y="1103.9" font-size="13.5" font-weight="700" fill="#121212" text-anchor="middle" textLength="24.8" lengthAdjust="spacingAndGlyphs" font-family="'Liberation Mono',monospace">*007</text><rect x="919.0" y="1119.9" width="28.0" height="11.1" rx="4.6" fill="#efebe7"/><text x="933.0" y="1129.9" font-size="13.5" font-weight="700" fill="#121212" text-anchor="middle" textLength="23.0" lengthAdjust="spacingAndGlyphs" font-family="'Liberation Mono',monospace">*008</text><rect x="991.0" y="961.5" width="23.0" height="11.8" rx="5.9" fill="#efebe7"/><rect x="992.3" y="962.8" width="20.4" height="9.2" rx="4.6" fill="#121212"/><text x="1002.5" y="969.9" font-size="8.0" font-weight="700" fill="#efebe7" text-anchor="middle" textLength="15.0" lengthAdjust="spacingAndGlyphs">MIND</text><text x="885.5" y="1288.9" font-size="25.6" font-weight="700" fill="#efebe7" textLength="173.3" lengthAdjust="spacingAndGlyphs" font-family="'Liberation Sans',sans-serif" >ENERGY</text><text x="883.7" y="1310.0" font-size="25.6" font-weight="700" fill="#efebe7" textLength="176.3" lengthAdjust="spacingAndGlyphs" font-family="'Liberation Sans',sans-serif" >SYSTEM</text><text x="745.2" y="1450.6" font-size="10.6" font-weight="700" fill="#efebe7" textLength="259.6" lengthAdjust="spacingAndGlyphs" font-family="'Liberation Sans',sans-serif" >ANOTHER DEPARTMENT © 2025</text><ellipse cx="694.6" cy="1380.3" rx="24.8" ry="52.6" fill="#efebe7" /><ellipse cx="697.0" cy="1380.3" rx="12.6" ry="41.0" fill="#121212" /><path d="M704.0,1362.0 L722.0,1362.0 L722.0,1385.0 L704.0,1385.0 Z" fill="#121212"/><circle cx="708.2" cy="1352.6" r="10.0" fill="#efebe7"/><g transform="rotate(20 708.2 1352.6)"><path d="M707.7,1348.1 a4.2,4.2 0 1 1 1.0,8.0" fill="none" stroke="#121212" stroke-width="3.0" stroke-linecap="round"/></g><circle cx="707.0" cy="1393.4" r="10.0" fill="#efebe7"/><g transform="rotate(200 707.0 1393.4)"><path d="M706.5,1388.9 a4.2,4.2 0 1 1 1.0,8.0" fill="none" stroke="#121212" stroke-width="3.0" stroke-linecap="round"/></g><path d="M709.0,1400.0 L719.6,1396.0 L718.0,1420.0 L706.0,1428.0 Z" fill="#efebe7"/><ellipse cx="749.4" cy="1379.3" rx="24.6" ry="54.0" fill="#efebe7" /><ellipse cx="749.6" cy="1380.0" rx="14.8" ry="43.4" fill="#121212" /><ellipse cx="748.6" cy="1374" rx="9.6" ry="30" fill="none" stroke="#efebe7" stroke-width="2" stroke-dasharray="70,22"/><ellipse cx="748.2" cy="1371" rx="5.6" ry="18" fill="none" stroke="#efebe7" stroke-width="2.2" stroke-dasharray="50,12"/><ellipse cx="748" cy="1369.6" rx="2" ry="7.6" fill="none" stroke="#efebe7" stroke-width="2"/><path d="M775.0,1327.0 L799.0,1327.0 L798.0,1336.5 L790.5,1338.0 L791.0,1423.0 L775.5,1433.0 L776.0,1424.0 L779.0,1421.0 L779.5,1338.0 L776.0,1336.0 Z" fill="#efebe7"/><path d="M775.5,1433.0 L776.5,1423.0 L800.0,1420.0 L824.0,1412.0 L825.0,1431.0 Z" fill="#efebe7"/><circle cx="808.6" cy="1397.4" r="13.7" fill="none" stroke="#efebe7" stroke-width="5.8"/><circle cx="808.1" cy="1397.6" r="5.0" fill="#efebe7"/><circle cx="808.6" cy="1397.2" r="1.7" fill="#121212"/><path d="M811.1,1399.1 Q809.6,1407.7 802.7,1406.0" fill="none" stroke="#efebe7" stroke-width="3.2"/><path d="M826.2,1327.0 L850.2,1327.0 L849.2,1336.5 L841.7,1338.0 L842.2,1423.0 L826.7,1433.0 L827.2,1424.0 L830.2,1421.0 L830.7,1338.0 L827.2,1336.0 Z" fill="#efebe7"/><path d="M826.7,1433.0 L827.7,1423.0 L851.2,1420.0 L875.2,1412.0 L876.2,1431.0 Z" fill="#efebe7"/><circle cx="859.8" cy="1397.4" r="13.7" fill="none" stroke="#efebe7" stroke-width="5.8"/><circle cx="859.3" cy="1397.6" r="5.0" fill="#efebe7"/><circle cx="859.8" cy="1397.2" r="1.7" fill="#121212"/><path d="M862.3,1399.1 Q860.8,1407.7 853.9,1406.0" fill="none" stroke="#efebe7" stroke-width="3.2"/><path d="M880.7,1326.0 L919.0,1326.0 L917.5,1337.0 L882.0,1337.0 Z" fill="#efebe7"/><path d="M891.0,1330.0 L904.0,1330.0 L889.0,1428.0 L877.0,1428.0 Z" fill="#efebe7"/><path d="M900.0,1330.0 L913.0,1330.0 L925.0,1428.0 L911.0,1428.0 Z" fill="#efebe7"/><path d="M874.0,1423.0 L897.0,1423.0 L897.5,1433.0 L874.0,1433.0 Z" fill="#efebe7"/><path d="M905.0,1423.0 L926.0,1423.0 L926.0,1433.0 L905.0,1433.0 Z" fill="#efebe7"/><path d="M880.0,1363.0 L918.0,1362.0 L918.0,1370.5 L880.0,1371.5 Z" fill="#efebe7"/><circle cx="880.6" cy="1366.4" r="6.6" fill="#efebe7"/><g transform="rotate(0 880.6 1366.4)"><path d="M880.3,1363.4 a2.8,2.8 0 1 1 0.7,5.3" fill="none" stroke="#121212" stroke-width="2.0" stroke-linecap="round"/></g><circle cx="917.0" cy="1365.4" r="6.6" fill="#efebe7"/><g transform="rotate(180 917.0 1365.4)"><path d="M916.7,1362.4 a2.8,2.8 0 1 1 0.7,5.3" fill="none" stroke="#121212" stroke-width="2.0" stroke-linecap="round"/></g><circle cx="898.8" cy="1368.0" r="6.2" fill="#efebe7"/><ellipse cx="896.0" cy="1365.0" rx="1.8" ry="4.6" fill="#121212" transform="rotate(20 896 1365)"/><circle cx="905.6" cy="1406.8" r="6.2" fill="none" stroke="#efebe7" stroke-width="4.4"/><circle cx="905.0" cy="1407.0" r="1.6" fill="#efebe7"/><path d="M930.0,1327.0 L951.0,1327.0 L950.0,1337.0 L947.0,1338.0 L947.5,1423.0 L956.0,1424.0 L956.5,1433.0 L930.0,1433.0 L930.0,1424.0 L936.0,1422.0 L936.5,1338.0 L930.5,1337.0 Z" fill="#efebe7"/><ellipse cx="957.4" cy="1364.6" rx="19.6" ry="37.6" fill="#efebe7" /><ellipse cx="959.6" cy="1364.0" rx="10.4" ry="27.6" fill="#121212" /><path d="M936.0,1330.0 L958.0,1327.4 L958.0,1340.0 L936.0,1344.0 Z" fill="#efebe7"/><path d="M936.4,1386.0 L956.0,1399.0 L956.0,1403.0 L936.4,1403.0 Z" fill="#efebe7"/><circle cx="952.4" cy="1371.0" r="7.4" fill="#efebe7"/><g transform="rotate(150 952.4 1371.0)"><path d="M952.0,1367.7 a3.1,3.1 0 1 1 0.7,5.9" fill="none" stroke="#121212" stroke-width="2.2" stroke-linecap="round"/></g><circle cx="933.0" cy="1377.6" r="5.2" fill="#efebe7"/><circle cx="933.0" cy="1377.6" r="1.6" fill="#121212"/><path d="M1024.5,1346 C1022,1334 1014,1331.6 1005,1331.6 C994,1331.6 986.4,1340 986.4,1351 C986.4,1362 996,1366 1006,1368" fill="none" stroke="#efebe7" stroke-width="10.4"/><path d="M1018.0,1338.0 L1029.0,1334.0 L1028.4,1352.0 L1019.0,1350.0 Z" fill="#efebe7"/><ellipse cx="1004.4" cy="1394.6" rx="19" ry="33.4" fill="none" stroke="#efebe7" stroke-width="9.6"/><circle cx="1000.0" cy="1393.6" r="8.4" fill="#efebe7"/><g transform="rotate(120 1000.0 1393.6)"><path d="M999.6,1389.8 a3.5,3.5 0 1 1 0.8,6.7" fill="none" stroke="#121212" stroke-width="2.5" stroke-linecap="round"/></g><path d="M991.0,1414.0 L1000.0,1402.0 L1006.0,1404.0 L996.0,1424.0 Z" fill="#efebe7"/><path d="M1035.0,1327.0 L1058.0,1327.0 L1056.0,1337.0 L1052.6,1338.0 L1053.0,1423.0 L1059.0,1424.0 L1059.0,1433.0 L1035.0,1433.0 L1035.0,1424.0 L1041.0,1422.0 L1041.6,1338.0 L1035.6,1337.0 Z" fill="#efebe7"/><path d="M1050.0,1327.0 L1087.6,1327.6 L1082.4,1350.0 L1076.0,1340.6 L1066.0,1337.6 L1050.0,1337.6 Z" fill="#efebe7"/><path d="M1050.0,1362.6 L1076.0,1361.6 L1076.0,1356.0 L1082.4,1356.0 L1082.4,1380.0 L1076.0,1380.0 L1076.0,1373.6 L1050.0,1374.6 Z" fill="#efebe7"/><circle cx="1038.6" cy="1371.4" r="4.8" fill="#efebe7"/><circle cx="1038.6" cy="1371.4" r="1.5" fill="#121212"/><circle cx="1067.8" cy="1397.0" r="14.9" fill="none" stroke="#efebe7" stroke-width="6.2"/><circle cx="1067.3" cy="1397.3" r="5.4" fill="#efebe7"/><circle cx="1067.8" cy="1396.7" r="1.8" fill="#121212"/><path d="M1070.5,1398.9 Q1068.9,1408.2 1061.3,1406.4" fill="none" stroke="#efebe7" stroke-width="3.4"/><path d="M1050.0,1423.0 L1064.0,1414.0 L1074.0,1416.0 L1079.0,1425.0 L1072.0,1433.0 L1050.0,1433.0 Z" fill="#efebe7"/><text x="756.2" y="1077.8" font-size="25.0" font-weight="700" fill="#efebe7" textLength="134.8" lengthAdjust="spacingAndGlyphs" font-family="'Liberation Mono',monospace" stroke="#efebe7" stroke-width="1.6">INTERNAL</text><text x="756.0" y="1133.0" font-size="25.0" font-weight="700" fill="#efebe7" textLength="135.0" lengthAdjust="spacingAndGlyphs" font-family="'Liberation Mono',monospace" stroke="#efebe7" stroke-width="1.6">INTERNAL</text><rect x="838.5" y="1080.5" width="52.0" height="14.0" rx="5.8" fill="#efebe7"/><text x="864.5" y="1091.6" font-size="12.5" font-weight="700" fill="#121212" text-anchor="middle" textLength="47.0" lengthAdjust="spacingAndGlyphs" font-family="'Liberation Mono',monospace">DIGITAL</text><rect x="831.0" y="1096.0" width="66.0" height="15.6" rx="6.5" fill="#efebe7"/><text x="864.0" y="1107.9" font-size="12.5" font-weight="700" fill="#121212" text-anchor="middle" textLength="61.0" lengthAdjust="spacingAndGlyphs" font-family="'Liberation Mono',monospace">AWAKENING</text><rect x="886.8" y="1252.2" width="56.5" height="10.6" rx="5.3" fill="#efebe7"/><rect x="888.1" y="1253.5" width="53.9" height="8.0" rx="4.0" fill="#121212"/><text x="915.0" y="1260.0" font-size="8.0" font-weight="700" fill="#efebe7" text-anchor="middle" textLength="48.0" lengthAdjust="spacingAndGlyphs">INTERNALIZED</text><rect x="946.4" y="1252.2" width="43.5" height="10.6" rx="5.3" fill="#efebe7"/><rect x="947.7" y="1253.5" width="40.9" height="8.0" rx="4.0" fill="#121212"/><text x="968.1" y="1260.0" font-size="8.0" font-weight="700" fill="#efebe7" text-anchor="middle" textLength="35.0" lengthAdjust="spacingAndGlyphs">CONSCIOUS</text><rect x="1017.8" y="1252.2" width="30.5" height="10.6" rx="5.3" fill="#efebe7"/><rect x="1019.1" y="1253.5" width="27.9" height="8.0" rx="4.0" fill="#121212"/><text x="1033.0" y="1260.0" font-size="8.0" font-weight="700" fill="#efebe7" text-anchor="middle" textLength="22.0" lengthAdjust="spacingAndGlyphs">UPLOAD</text><g fill="#efebe7"><rect x="887" y="1164" width="36" height="14" rx="6"/><rect x="887" y="1180" width="32" height="14" rx="6"/></g><g fill="#121212"><circle cx="895" cy="1171" r="2.2"/><circle cx="904" cy="1171" r="2.2"/><rect x="911" y="1167" width="2.4" height="8"/><circle cx="895" cy="1187" r="2.2"/><rect x="901" y="1183" width="2.4" height="8"/><circle cx="910" cy="1187" r="2.2"/></g><path d="M851,1136 L881,1139 L881,1226 L851,1242 Z" fill="#121212" stroke="#efebe7" stroke-width="1.2"/><path d="M722.8,1131.6 L851.3,1134 L851.3,1240 L734,1240 L722.8,1226 Z" fill="#121212" stroke="#efebe7" stroke-width="1.4"/><path d="M722.8,1131.6 L805.5,1133 L805.5,1144.4 L773,1146 L737,1147 L737,1222 L726,1226 L722.8,1222 Z" fill="#efebe7"/><rect x="738" y="1147.5" width="98" height="77" fill="#121212" stroke="#efebe7" stroke-width="1.2"/><rect x="751" y="1162.6" width="64" height="55.2" fill="#efebe7"/><text x="767" y="1175.6" font-size="6.5" font-weight="700" fill="#151515" textLength="32" lengthAdjust="spacingAndGlyphs">THROUGH</text><text x="768" y="1211" font-size="6.5" font-weight="700" fill="#151515" textLength="30" lengthAdjust="spacingAndGlyphs">SIGNAL</text><path d="M755,1214 L770,1180 L776,1196 L784,1182 L789,1200 M762,1214 L778,1190 M772,1186 L792,1202" stroke="#1a1a1a" stroke-width="1" fill="none"/><rect x="786" y="1183" width="9" height="11" fill="#1a1a1a"/><text x="772" y="1144" font-size="6.6" font-weight="700" fill="#151515" textLength="21" lengthAdjust="spacingAndGlyphs">DEAD</text><rect x="806" y="1134" width="45" height="9" fill="#121212"/><ellipse cx="834.5" cy="1236" rx="2.6" ry="1.6" fill="none" stroke="#efebe7" stroke-width="1"/><path d="M741,1240 L846,1240 L850,1246 L735,1246 Z" fill="#121212" stroke="#efebe7" stroke-width="1"/><rect x="731.5" y="1246" width="114.5" height="31.7" fill="#121212" stroke="#efebe7" stroke-width="1.4"/><path d="M846,1246 L881,1226 L881,1252 L846,1277.7" fill="#121212" stroke="#efebe7" stroke-width="1.2"/><path d="M733,1255.5 L845,1255.5 M790,1257.6 L828,1257.6" stroke="#efebe7" stroke-width="1.6"/><rect x="738.5" y="1259.0" width="82.5" height="10.0" rx="5.0" fill="#efebe7"/><rect x="739.8" y="1260.3" width="79.9" height="7.4" rx="3.7" fill="#121212"/><text x="779.8" y="1266.3" font-size="7.4" font-weight="700" fill="#efebe7" text-anchor="middle" textLength="70.0" lengthAdjust="spacingAndGlyphs">UPLOAD/DOWNLOAD</text><path d="M662.2,1302.5 L689.8,1277.7 L871.5,1284.4 L854,1314 L667,1308.6 Z" fill="#efebe7"/><path d="M697,1284.3 L862,1289.5" stroke="#151515" stroke-width="2.4" stroke-dasharray="3.6,2.2" stroke-dashoffset="0"/><path d="M692,1289.3 L858,1294.5" stroke="#151515" stroke-width="2.4" stroke-dasharray="3.6,2.2" stroke-dashoffset="1.3"/><path d="M686,1294.3 L855,1299.5" stroke="#151515" stroke-width="2.4" stroke-dasharray="3.6,2.2" stroke-dashoffset="2.6"/><path d="M680,1299.3 L852,1304.5" stroke="#151515" stroke-width="2.4" stroke-dasharray="3.6,2.2" stroke-dashoffset="3.9"/><path d="M676,1304 L848,1309.2" stroke="#151515" stroke-width="2.4" stroke-dasharray="3.6,2.2" stroke-dashoffset="5.2"/><path d="M664,1305.6 L853,1311.4" stroke="#151515" stroke-width="1.2"/><path d="M700,1302 L770,1304.2" stroke="#efebe7" stroke-width="2.6"/><rect x="691.8" y="1143" width="30.2" height="36.4" fill="#121212"/><path d="M697,1080 L697,1143 M700.5,1080 L700.5,1143 M704,1080 L704,1143 M707.5,1080 L707.5,1143 M711,1080 L711,1143 M714.5,1080 L714.5,1143 M718,1080 L718,1143 M697,1179.4 L696,1239 M700.5,1179.4 L699.5,1218 M704,1179.4 L703,1239 M711,1179.4 L713,1239 M714.5,1179.4 L716.5,1218 M718,1179.4 L720,1239 " fill="none" stroke="#efebe7" stroke-width="1.3" opacity=".9"/><path d="M691.8,1147 L678,1147 L670,1150 L652,1150 M691.8,1151.5 L678,1151.5 L670,1155 L657,1155 M691.8,1156 L678,1156 L670,1165 L647,1165 M691.8,1162 L678,1162 L670,1174 L650,1174 M691.8,1168 L678,1168 L670,1176 L652,1185 M691.8,1174 L678,1174 L670,1182 L659,1224 " fill="none" stroke="#efebe7" stroke-width="1.3"/><circle cx="652" cy="1150" r="1.8" fill="#efebe7"/><circle cx="657" cy="1155" r="1.8" fill="#efebe7"/><circle cx="647" cy="1165" r="1.8" fill="#efebe7"/><circle cx="650" cy="1174" r="1.8" fill="#efebe7"/><circle cx="652" cy="1185" r="1.8" fill="#efebe7"/><circle cx="659" cy="1224" r="1.8" fill="#efebe7"/><path d="M650,1104 L650,1134 L658,1141 L672,1141 L680,1147 M664,1248 L678,1248 L688,1238 L688,1192 L694,1185 M698,1246 L698,1216 M708,1240 L708,1200 M716,1256 L716,1206 M722,1266 L722,1210" fill="none" stroke="#efebe7" stroke-width="1.3"/><circle cx="650" cy="1104" r="1.8" fill="none" stroke="#efebe7" stroke-width="1.2"/><circle cx="664" cy="1248" r="3.2" fill="none" stroke="#efebe7" stroke-width="1.2"/><circle cx="698" cy="1246" r="3.2" fill="none" stroke="#efebe7" stroke-width="1.2"/><circle cx="708" cy="1240" r="3.4" fill="none" stroke="#efebe7" stroke-width="1.2"/><circle cx="716" cy="1256" r="2" fill="none" stroke="#efebe7" stroke-width="1.2"/><circle cx="722" cy="1266" r="2" fill="none" stroke="#efebe7" stroke-width="1.2"/><circle cx="666" cy="1165" r="3" fill="none" stroke="#efebe7" stroke-width="1.2"/><g transform="translate(679,1124)"><path d="M-5.4,-1 C-6,-9 6,-9 5.4,-1 C5.6,2 4,3.4 3.4,4.4 L3,8 C1.6,9.6 -1.6,9.6 -3,8 L-3.4,4.4 C-4,3.4 -5.6,2 -5.4,-1 Z" fill="#efebe7" opacity=".95"/><circle cx="-2.2" cy="0.6" r="1.4" fill="#151515"/><circle cx="2.2" cy="0.6" r="1.4" fill="#151515"/><path d="M0,2.6 L-1,4.6 L1,4.6 Z" fill="#151515"/></g><g transform="translate(734,1111.5)"><path d="M-5.4,-1 C-6,-9 6,-9 5.4,-1 C5.6,2 4,3.4 3.4,4.4 L3,8 C1.6,9.6 -1.6,9.6 -3,8 L-3.4,4.4 C-4,3.4 -5.6,2 -5.4,-1 Z" fill="#efebe7" opacity=".95"/><circle cx="-2.2" cy="0.6" r="1.4" fill="#151515"/><circle cx="2.2" cy="0.6" r="1.4" fill="#151515"/><path d="M0,2.6 L-1,4.6 L1,4.6 Z" fill="#151515"/></g><g transform="translate(677.5,1195)"><path d="M-5.4,-1 C-6,-9 6,-9 5.4,-1 C5.6,2 4,3.4 3.4,4.4 L3,8 C1.6,9.6 -1.6,9.6 -3,8 L-3.4,4.4 C-4,3.4 -5.6,2 -5.4,-1 Z" fill="#efebe7" opacity=".95"/><circle cx="-2.2" cy="0.6" r="1.4" fill="#151515"/><circle cx="2.2" cy="0.6" r="1.4" fill="#151515"/><path d="M0,2.6 L-1,4.6 L1,4.6 Z" fill="#151515"/></g><g transform="translate(706.5,1259)"><path d="M-5.4,-1 C-6,-9 6,-9 5.4,-1 C5.6,2 4,3.4 3.4,4.4 L3,8 C1.6,9.6 -1.6,9.6 -3,8 L-3.4,4.4 C-4,3.4 -5.6,2 -5.4,-1 Z" fill="#efebe7" opacity=".95"/><circle cx="-2.2" cy="0.6" r="1.4" fill="#151515"/><circle cx="2.2" cy="0.6" r="1.4" fill="#151515"/><path d="M0,2.6 L-1,4.6 L1,4.6 Z" fill="#151515"/></g><path d="M829,1046 C800,1060 776,1092 770,1132" fill="none" stroke="#efebe7" stroke-width="1.6"/><path d="M868,1127 A17,17 0 0 1 868,1162" fill="none" stroke="#efebe7" stroke-width="1.6"/><path d="M862,1130 A14,14 0 0 1 862,1158" fill="none" stroke="#efebe7" stroke-width="1.1"/><path d="M728,892 L751,892 L749,899.6 L726.5,899.6 Z" fill="#efebe7"/><path d="M730,898 l3,-5 M734,898 l3,-5 M738,898 l3,-5 M742,898 l3,-5" stroke="#111" stroke-width="1.2"/><path d="M734.5,914 C739,914 741,918 740,923 C746,926 748,934 746,948 L724,948 C721,934 724,926 729.5,923 C728.5,918 730.5,914 734.5,914 Z" fill="#efebe7" opacity=".8"/><path d="M692,925 C708,934 722,934 730,931 M786.7,920 C768,932 748,934 740,931 M700,934 C712,940 722,940 728,938 M772,934 C760,940 748,940 742,938 M692,947 C704,950 712,958 714,968 M776,948 C764,950 756,958 754,968" fill="none" stroke="#efebe7" stroke-width="1.8"/><path d="M703,941 C712,946 720,946 727,944 M766,941 C757,946 749,946 742,944" fill="none" stroke="#efebe7" stroke-width="2.6" opacity=".8"/><path d="M712,906 L712,918 M722,902 L722,912 M744,904 L760,904 L760,916 M770,908 L770,924 M700,918 L764,918 M716,960 L716,994 L760,994 L760,962 M690,972 L716,972 M760,972 L800,972 M790,930 L790,990" fill="none" stroke="#efebe7" stroke-width="1.1" opacity=".75"/><rect x="721.4" y="955.4" width="24.6" height="13.0" rx="6.5" fill="#efebe7"/><rect x="722.7" y="956.7" width="22.0" height="10.4" rx="5.2" fill="#121212"/><text x="733.7" y="964.8" font-size="9.0" font-weight="700" fill="#efebe7" text-anchor="middle" textLength="17.0" lengthAdjust="spacingAndGlyphs">HOPE</text><path d="M680,996 L748,996 L752,1004 L752,1062 L692,1062 L692,1010 Z" fill="none" stroke="#efebe7" stroke-width="1.2" opacity=".8"/><rect x="694" y="1006" width="53.5" height="61" rx="3" fill="#121212" stroke="#efebe7" stroke-width="1.8"/><path d="M704,1060 C702,1030 706,1012 721,1011 C736,1012 740,1030 738,1060" fill="none" stroke="#efebe7" stroke-width="1.8"/><rect x="709.6" y="1024" width="22" height="28" rx="6" fill="none" stroke="#efebe7" stroke-width="2"/><rect x="714" y="1030" width="13.4" height="16" rx="3" fill="none" stroke="#efebe7" stroke-width="1.6"/><path d="M706,1060 L736,1060 M709,1064 L733,1064" fill="none" stroke="#efebe7" stroke-width="1.4"/><path d="M692,1018 C684,1016 682,1030 686,1040 C689,1046 692,1044 692,1040 M750,1018 C758,1016 760,1030 756,1040" fill="none" stroke="#efebe7" stroke-width="1.6"/><rect x="696.8" y="1068.4" width="44.9" height="10.2" rx="5.1" fill="#efebe7"/><rect x="698.1" y="1069.7" width="42.3" height="7.6" rx="3.8" fill="#121212"/><text x="719.2" y="1076.0" font-size="8.0" font-weight="700" fill="#efebe7" text-anchor="middle" textLength="36.0" lengthAdjust="spacingAndGlyphs">IDENTITY</text><path d="M667,1066 L673,1073 L696,1073" fill="none" stroke="#efebe7" stroke-width="1.2"/><circle cx="686.5" cy="1083" r="3" fill="none" stroke="#efebe7" stroke-width="1.2"/><path d="M761,996 L822,996 L832,990 M761,996 L761,1058 M763,1036 L802,998" fill="none" stroke="#efebe7" stroke-width="1.3"/><rect x="833" y="951.7" width="41.3" height="41.3" rx="4" fill="#efebe7"/><rect x="835.6" y="954.3" width="36.1" height="36.1" rx="3" fill="none" stroke="#151515" stroke-width="1"/><text x="841" y="984" font-size="27" font-weight="400" fill="none" stroke="#151515" stroke-width="1.1" textLength="26" lengthAdjust="spacingAndGlyphs">AD</text><rect x="833.5" y="942.6" width="40.0" height="9.2" rx="4.6" fill="#efebe7"/><rect x="834.8" y="943.9" width="37.4" height="6.6" rx="3.3" fill="#121212"/><text x="853.5" y="949.4" font-size="7.2" font-weight="700" fill="#efebe7" text-anchor="middle" textLength="31.0" lengthAdjust="spacingAndGlyphs">ANOTHER</text><path d="M838.0,942 L838.0,916 M843.3,942 L843.3,920 M848.7,942 L848.7,924 M854.0,942 L854.0,916 M859.3,942 L859.3,920 M864.7,942 L864.7,924 M870.0,942 L870.0,916 M833,956.0 L806.0,956.0 M833,960.7 L810.0,960.7 M833,965.4 L806.0,965.4 M833,970.1 L810.0,970.1 M833,974.9 L806.0,974.9 M833,979.6 L810.0,979.6 M833,984.3 L806.0,984.3 M833,989.0 L810.0,989.0 M874.3,958 L885,958 L892,952 L900,952 L906,946 L932,936 M874.3,962 L888,962 L898,957 L914,957 M874.3,966 L890,966 L898,972 L914,972 M874.3,970 L886,970 L894,978 L906,978 M874.3,974 L884,974 L892,984 L905,984 M874.3,978 L882,978 L890,990 M874.3,982 L880,982 L886,990 L900,1008 M874.3,986 L878,986 M838.0,993 L838.0,1006 L816.0,1022 L816.0,1046 M842.0,993 L842.0,1006 L825.5,1022 L825.5,1046 M846.0,993 L846.0,1006 L835.0,1022 L835.0,1046 M850.0,993 L850.0,1006 L844.5,1022 L844.5,1046 M854.0,993 L854.0,1006 L854.0,1022 L854.0,1046 M858.0,993 L858.0,1006 L863.5,1022 L863.5,1046 M862.0,993 L862.0,1006 L873.0,1022 L873.0,1046 M866.0,993 L866.0,1006 L882.5,1022 L882.5,1046 M870.0,993 L870.0,1006 L892.0,1022 L892.0,1046 " fill="none" stroke="#efebe7" stroke-width="1.25"/><circle cx="838.0" cy="914.5" r="1.5" fill="none" stroke="#efebe7" stroke-width="1"/><circle cx="843.3" cy="918.5" r="1.5" fill="none" stroke="#efebe7" stroke-width="1"/><circle cx="848.7" cy="922.5" r="1.5" fill="none" stroke="#efebe7" stroke-width="1"/><circle cx="854.0" cy="914.5" r="1.5" fill="none" stroke="#efebe7" stroke-width="1"/><circle cx="859.3" cy="918.5" r="1.5" fill="none" stroke="#efebe7" stroke-width="1"/><circle cx="864.7" cy="922.5" r="1.5" fill="none" stroke="#efebe7" stroke-width="1"/><circle cx="870.0" cy="914.5" r="1.5" fill="none" stroke="#efebe7" stroke-width="1"/><g fill="#efebe7"><rect x="822" y="1014" width="5" height="3"/><rect x="822" y="1020" width="5" height="3"/><rect x="876" y="1018" width="3" height="6"/><rect x="881" y="1018" width="3" height="6"/><rect x="838" y="1028" width="4" height="10"/><rect x="884" y="1008" width="3" height="4"/><rect x="796" y="1040" width="2" height="5"/><rect x="800" y="1040" width="2" height="5"/><rect x="804" y="1040" width="2" height="5"/><rect x="808" y="1040" width="2" height="5"/><rect x="812" y="1040" width="2" height="5"/><rect x="808" y="1033" width="2.4" height="2.4"/><rect x="812" y="1033" width="2.4" height="2.4"/></g><g transform="rotate(-38 794 1020)"><rect x="787" y="1015.5" width="14" height="9" rx="1.5" fill="#efebe7"/><path d="M788,1014 v-2 M791,1014 v-2 M794,1014 v-2 M797,1014 v-2 M800,1014 v-2 M788,1026 v2 M791,1026 v2 M794,1026 v2 M797,1026 v2 M800,1026 v2" stroke="#efebe7" stroke-width="1"/></g><g fill="none" stroke="#efebe7" stroke-width="1"><circle cx="806" cy="1024" r="1.6"/><circle cx="810" cy="1020" r="1.6"/><circle cx="814" cy="1016" r="1.6"/><circle cx="817" cy="1026" r="1.6"/><circle cx="821" cy="1022" r="1.6"/></g><path d="M764,1028 l2,-3 M768,1025 l2,-3 M772,1021 l2,-3 M776,1018 l2,-3 M786,1006 l2,-3 M790,1003 l2,-3 M794,999 l2,-3" stroke="#efebe7" stroke-width="1.4"/><rect x="881" y="936" width="8" height="8" fill="#efebe7"/><path d="M882.5,937.5 l5,5" stroke="#111" stroke-width="1.4"/><path d="M762,1058 L905,1058 L925,1066 M895,1058 L920,1062" fill="none" stroke="#efebe7" stroke-width="1.2"/><path d="M736.5,956.0 h1.6 v1.0 h-1.6 z M745.5,1012.3 h2.1 v1.3 h-2.1 z M692.7,1049.1 h0.8 v0.5 h-0.8 z M740.7,1031.5 h2.1 v1.3 h-2.1 z M700.1,986.6 h0.8 v0.5 h-0.8 z M774.3,932.6 h1.0 v0.6 h-1.0 z M735.0,1010.3 h1.3 v0.8 h-1.3 z M731.2,955.1 h0.8 v0.5 h-0.8 z M707.4,967.7 h0.8 v0.5 h-0.8 z M756.9,1053.2 h0.8 v0.5 h-0.8 z M713.8,1038.0 h1.6 v1.0 h-1.6 z M692.5,962.9 h1.3 v0.8 h-1.3 z M716.3,1061.5 h1.0 v0.6 h-1.0 z M745.0,979.5 h2.1 v1.3 h-2.1 z M705.9,950.9 h1.0 v0.6 h-1.0 z M759.3,960.1 h2.1 v1.3 h-2.1 z M715.2,1054.0 h2.1 v1.3 h-2.1 z M705.1,1045.0 h1.3 v0.8 h-1.3 z M701.4,1030.0 h0.8 v0.5 h-0.8 z M757.0,1013.2 h2.1 v1.3 h-2.1 z M699.7,938.6 h1.3 v0.8 h-1.3 z M700.0,1041.3 h2.1 v1.3 h-2.1 z M706.8,995.0 h2.1 v1.3 h-2.1 z M723.9,988.1 h1.6 v1.0 h-1.6 z M713.8,982.4 h1.3 v0.8 h-1.3 z M744.3,992.9 h1.0 v0.6 h-1.0 z M710.5,955.9 h2.1 v1.3 h-2.1 z M692.6,921.2 h0.8 v0.5 h-0.8 z M689.4,991.0 h2.1 v1.3 h-2.1 z M751.9,1067.9 h2.1 v1.3 h-2.1 z M687.3,1060.1 h1.3 v0.8 h-1.3 z M795.7,902.1 h1.6 v1.0 h-1.6 z M691.4,1009.8 h1.3 v0.8 h-1.3 z M769.5,990.0 h1.0 v0.6 h-1.0 z M736.7,1059.1 h1.6 v1.0 h-1.6 z M687.1,1032.8 h1.6 v1.0 h-1.6 z M733.3,1069.3 h1.6 v1.0 h-1.6 z M768.5,938.8 h2.1 v1.3 h-2.1 z M737.1,946.3 h2.1 v1.3 h-2.1 z M771.0,903.0 h1.6 v1.0 h-1.6 z M743.7,1032.6 h1.6 v1.0 h-1.6 z M736.2,982.3 h1.0 v0.6 h-1.0 z M771.4,934.3 h1.6 v1.0 h-1.6 z M787.4,932.7 h1.0 v0.6 h-1.0 z M757.6,980.4 h1.0 v0.6 h-1.0 z M786.1,938.4 h1.3 v0.8 h-1.3 z M752.3,964.5 h0.8 v0.5 h-0.8 z M719.3,990.3 h1.0 v0.6 h-1.0 z M780.4,938.3 h1.3 v0.8 h-1.3 z M767.1,984.2 h1.3 v0.8 h-1.3 z M692.7,903.1 h0.8 v0.5 h-0.8 z M734.0,1022.0 h1.0 v0.6 h-1.0 z M731.0,919.0 h1.3 v0.8 h-1.3 z M732.6,1009.1 h2.1 v1.3 h-2.1 z M760.0,980.7 h1.0 v0.6 h-1.0 z M686.8,1011.9 h0.8 v0.5 h-0.8 z M737.6,1017.2 h2.1 v1.3 h-2.1 z M799.6,915.9 h1.0 v0.6 h-1.0 z M694.1,993.3 h1.0 v0.6 h-1.0 z M736.3,919.7 h0.8 v0.5 h-0.8 z M727.7,956.9 h1.3 v0.8 h-1.3 z M739.4,1050.0 h0.8 v0.5 h-0.8 z M708.7,990.0 h1.3 v0.8 h-1.3 z M753.3,1054.1 h1.3 v0.8 h-1.3 z M717.2,990.3 h0.8 v0.5 h-0.8 z M688.6,1018.6 h1.0 v0.6 h-1.0 z M738.6,1000.0 h2.1 v1.3 h-2.1 z M781.4,968.9 h1.6 v1.0 h-1.6 z M751.2,968.9 h1.6 v1.0 h-1.6 z M745.1,929.0 h1.0 v0.6 h-1.0 z M744.6,984.4 h1.3 v0.8 h-1.3 z M761.9,995.5 h2.1 v1.3 h-2.1 z M708.2,985.1 h2.1 v1.3 h-2.1 z M694.5,960.5 h1.6 v1.0 h-1.6 z M687.2,996.9 h1.6 v1.0 h-1.6 z M692.9,978.3 h2.1 v1.3 h-2.1 z M737.2,992.1 h1.6 v1.0 h-1.6 z M718.1,1049.7 h1.6 v1.0 h-1.6 z M688.2,988.6 h0.8 v0.5 h-0.8 z M707.0,1039.6 h1.0 v0.6 h-1.0 z M755.9,910.5 h0.8 v0.5 h-0.8 z M782.8,962.4 h2.1 v1.3 h-2.1 z M785.9,902.3 h2.1 v1.3 h-2.1 z M755.4,953.8 h2.1 v1.3 h-2.1 z M758.1,953.0 h2.1 v1.3 h-2.1 z M752.1,913.6 h1.3 v0.8 h-1.3 z M754.3,984.0 h1.0 v0.6 h-1.0 z M739.8,988.5 h0.8 v0.5 h-0.8 z M734.4,994.1 h1.0 v0.6 h-1.0 z M707.3,962.8 h0.8 v0.5 h-0.8 z M707.3,968.2 h1.3 v0.8 h-1.3 z M697.4,950.6 h2.1 v1.3 h-2.1 z M799.8,983.3 h1.6 v1.0 h-1.6 z M696.3,903.7 h2.1 v1.3 h-2.1 z M694.5,979.0 h1.0 v0.6 h-1.0 z M690.6,1064.7 h1.6 v1.0 h-1.6 z M717.6,999.0 h1.0 v0.6 h-1.0 z M753.7,901.3 h1.0 v0.6 h-1.0 z M705.0,945.4 h1.6 v1.0 h-1.6 z M744.6,995.6 h0.8 v0.5 h-0.8 z M777.0,970.5 h1.6 v1.0 h-1.6 z M750.1,919.1 h1.3 v0.8 h-1.3 z M777.4,925.8 h1.0 v0.6 h-1.0 z M778.5,940.6 h2.1 v1.3 h-2.1 z M764.6,976.7 h1.6 v1.0 h-1.6 z M708.0,918.5 h1.3 v0.8 h-1.3 z M733.3,1028.6 h1.0 v0.6 h-1.0 z M702.0,1004.7 h1.0 v0.6 h-1.0 z M745.8,939.0 h1.0 v0.6 h-1.0 z M765.3,976.2 h0.8 v0.5 h-0.8 z M718.8,1015.5 h1.0 v0.6 h-1.0 z M706.4,997.5 h2.1 v1.3 h-2.1 z M742.9,996.7 h0.8 v0.5 h-0.8 z M730.2,1043.5 h0.8 v0.5 h-0.8 z M757.8,1054.1 h2.1 v1.3 h-2.1 z M754.9,905.9 h1.6 v1.0 h-1.6 z M725.3,1013.2 h1.3 v0.8 h-1.3 z M749.0,928.4 h1.3 v0.8 h-1.3 z M687.1,977.2 h1.0 v0.6 h-1.0 z M709.3,1003.8 h2.1 v1.3 h-2.1 z M753.0,1007.2 h1.6 v1.0 h-1.6 z M693.3,1049.1 h1.6 v1.0 h-1.6 z M738.3,965.5 h1.6 v1.0 h-1.6 z M725.1,973.7 h1.6 v1.0 h-1.6 z M700.2,941.7 h2.1 v1.3 h-2.1 z M763.1,936.4 h1.0 v0.6 h-1.0 z M694.4,1058.2 h2.1 v1.3 h-2.1 z M736.7,1022.1 h2.1 v1.3 h-2.1 z M756.4,1015.2 h1.0 v0.6 h-1.0 z M706.0,1006.8 h2.1 v1.3 h-2.1 z M741.9,1060.4 h1.0 v0.6 h-1.0 z M721.4,983.2 h1.3 v0.8 h-1.3 z M741.4,913.3 h0.8 v0.5 h-0.8 z M735.9,982.2 h1.0 v0.6 h-1.0 z M697.2,976.9 h2.1 v1.3 h-2.1 z M721.7,954.9 h1.0 v0.6 h-1.0 z M750.8,968.6 h0.8 v0.5 h-0.8 z M734.1,956.8 h1.6 v1.0 h-1.6 z M701.8,1032.8 h0.8 v0.5 h-0.8 z M764.6,949.5 h1.3 v0.8 h-1.3 z M739.7,1000.3 h0.8 v0.5 h-0.8 z M721.4,944.1 h1.3 v0.8 h-1.3 z M709.5,1004.0 h2.1 v1.3 h-2.1 z M712.9,1003.5 h1.6 v1.0 h-1.6 z M714.9,977.0 h2.1 v1.3 h-2.1 z M749.3,917.7 h1.3 v0.8 h-1.3 z M697.7,992.5 h0.8 v0.5 h-0.8 z M726.5,1046.7 h0.8 v0.5 h-0.8 z M709.2,962.9 h1.0 v0.6 h-1.0 z M738.7,1013.8 h2.1 v1.3 h-2.1 z M745.7,996.6 h1.0 v0.6 h-1.0 z M741.3,953.7 h2.1 v1.3 h-2.1 z M790.1,941.1 h1.3 v0.8 h-1.3 z M783.0,980.6 h1.6 v1.0 h-1.6 z M795.1,964.0 h0.8 v0.5 h-0.8 z M696.8,1041.5 h1.6 v1.0 h-1.6 z M725.2,990.1 h0.8 v0.5 h-0.8 z M697.5,1061.2 h0.8 v0.5 h-0.8 z M745.2,994.4 h1.0 v0.6 h-1.0 z M739.1,1025.4 h1.0 v0.6 h-1.0 z M753.4,1063.1 h2.1 v1.3 h-2.1 z M793.3,955.0 h1.6 v1.0 h-1.6 z M726.5,1065.3 h1.6 v1.0 h-1.6 z M695.9,1047.8 h2.1 v1.3 h-2.1 z M776.2,977.4 h0.8 v0.5 h-0.8 z M721.0,1000.9 h1.0 v0.6 h-1.0 z M697.6,995.4 h1.3 v0.8 h-1.3 z M740.9,1028.1 h2.1 v1.3 h-2.1 z M746.0,915.1 h0.8 v0.5 h-0.8 z M695.5,998.7 h2.1 v1.3 h-2.1 z M720.7,1065.1 h2.1 v1.3 h-2.1 z M699.9,981.2 h0.8 v0.5 h-0.8 z M716.6,1014.4 h1.3 v0.8 h-1.3 z M720.7,940.5 h1.6 v1.0 h-1.6 z M696.4,1033.4 h1.6 v1.0 h-1.6 z M719.0,1055.0 h1.6 v1.0 h-1.6 z M686.8,1069.1 h1.0 v0.6 h-1.0 z M788.6,915.2 h2.1 v1.3 h-2.1 z M771.0,995.4 h2.1 v1.3 h-2.1 z M740.1,996.2 h1.3 v0.8 h-1.3 z M747.2,970.2 h1.0 v0.6 h-1.0 z M756.1,913.1 h1.0 v0.6 h-1.0 z M704.9,940.2 h2.1 v1.3 h-2.1 z M759.1,1007.7 h0.8 v0.5 h-0.8 z M723.6,982.3 h1.0 v0.6 h-1.0 z M759.1,976.7 h1.6 v1.0 h-1.6 z M740.0,992.1 h1.6 v1.0 h-1.6 z M755.1,931.8 h1.0 v0.6 h-1.0 z M710.5,997.6 h1.6 v1.0 h-1.6 z M696.3,937.8 h1.3 v0.8 h-1.3 z M742.7,1059.3 h2.1 v1.3 h-2.1 z M711.1,961.2 h2.1 v1.3 h-2.1 z M766.8,998.7 h1.0 v0.6 h-1.0 z M749.8,902.7 h0.8 v0.5 h-0.8 z M710.7,970.1 h1.3 v0.8 h-1.3 z M740.0,986.2 h2.1 v1.3 h-2.1 z M747.0,956.1 h1.3 v0.8 h-1.3 z M703.6,974.6 h1.3 v0.8 h-1.3 z M753.8,912.3 h1.3 v0.8 h-1.3 z M763.5,936.4 h1.3 v0.8 h-1.3 z M780.4,918.6 h0.8 v0.5 h-0.8 z M736.7,940.3 h1.0 v0.6 h-1.0 z M719.7,967.1 h1.6 v1.0 h-1.6 z M755.4,964.0 h1.0 v0.6 h-1.0 z M714.6,1022.6 h1.0 v0.6 h-1.0 z M754.9,965.9 h0.8 v0.5 h-0.8 z M722.8,971.3 h1.3 v0.8 h-1.3 z M731.7,962.4 h1.6 v1.0 h-1.6 z M771.2,948.6 h1.6 v1.0 h-1.6 z M755.5,996.3 h2.1 v1.3 h-2.1 z M690.0,1039.8 h1.6 v1.0 h-1.6 z M768.9,959.8 h1.3 v0.8 h-1.3 z M748.5,986.7 h1.6 v1.0 h-1.6 z M753.3,1019.9 h1.6 v1.0 h-1.6 z M793.1,988.0 h1.3 v0.8 h-1.3 z M784.5,942.1 h1.0 v0.6 h-1.0 z M691.3,1017.2 h1.0 v0.6 h-1.0 z M698.4,953.8 h0.8 v0.5 h-0.8 z M698.7,1008.5 h1.6 v1.0 h-1.6 z M729.3,965.0 h0.8 v0.5 h-0.8 z M696.6,1045.4 h1.6 v1.0 h-1.6 z M785.9,920.3 h0.8 v0.5 h-0.8 z M721.0,978.9 h2.1 v1.3 h-2.1 z M751.1,965.5 h0.8 v0.5 h-0.8 z M719.5,981.8 h1.3 v0.8 h-1.3 z M737.5,1063.2 h1.6 v1.0 h-1.6 z M732.2,916.9 h0.8 v0.5 h-0.8 z M703.4,1033.1 h1.3 v0.8 h-1.3 z M727.2,966.2 h2.1 v1.3 h-2.1 z M743.8,997.7 h1.0 v0.6 h-1.0 z M761.4,927.7 h0.8 v0.5 h-0.8 z M737.7,907.6 h0.8 v0.5 h-0.8 z M745.6,904.5 h1.3 v0.8 h-1.3 z M746.3,942.3 h1.0 v0.6 h-1.0 z M706.7,1020.3 h1.0 v0.6 h-1.0 z M775.7,915.1 h2.1 v1.3 h-2.1 z M754.8,1015.0 h1.0 v0.6 h-1.0 z M691.4,977.7 h1.3 v0.8 h-1.3 z M760.4,978.3 h2.1 v1.3 h-2.1 z M779.9,963.5 h2.1 v1.3 h-2.1 z M731.0,985.9 h1.6 v1.0 h-1.6 z M747.5,925.6 h1.0 v0.6 h-1.0 z M714.1,954.4 h2.1 v1.3 h-2.1 z M741.9,903.5 h0.8 v0.5 h-0.8 z M697.2,962.0 h1.6 v1.0 h-1.6 z M777.5,950.4 h0.8 v0.5 h-0.8 z M692.4,990.7 h2.1 v1.3 h-2.1 z M751.2,972.2 h0.8 v0.5 h-0.8 z M732.0,1017.8 h1.3 v0.8 h-1.3 z M772.8,949.8 h2.1 v1.3 h-2.1 z M737.1,1051.4 h1.6 v1.0 h-1.6 z M702.0,1066.8 h0.8 v0.5 h-0.8 z M698.9,975.5 h1.0 v0.6 h-1.0 z M700.8,945.5 h0.8 v0.5 h-0.8 z M684.4,941.0 h0.8 v0.5 h-0.8 z M691.7,963.8 h2.1 v1.3 h-2.1 z M710.7,925.3 h1.0 v0.6 h-1.0 z M708.9,1064.1 h2.1 v1.3 h-2.1 z M709.3,916.0 h0.8 v0.5 h-0.8 z M769.5,956.7 h2.1 v1.3 h-2.1 z " fill="#efebe7" opacity=".8"/></g><g filter="url(#specks)" fill="#fff"><path d="M852,1137 L880,1140 L880,1225 L852,1240 Z"/><path d="M739,1225.5 L850,1225.5 L850,1239 L739,1239 Z" opacity=".8"/><path d="M847,1247 L880,1228 L880,1251 L847,1276 Z" opacity=".8"/><path d="M807,1135 L850,1135 L850,1146 L807,1143.6 Z"/><path d="M837,1148 L850,1148 L850,1224 L837,1224 Z" opacity=".7"/><path d="M733,1257 L845,1257 L845,1276.6 L733,1276.6 Z" opacity=".35"/></g></svg>
<!-- p8_art -->

<!-- p9_finder -->
<div class="b" style="left:0.0px;top:2145.6px;width:2160.0px;height:14.4px;overflow:hidden;"><div class="b" style="left:22.0px;top:0.0px;width:291.0px;height:15.0px;background:linear-gradient(90deg,#151515,#222);"></div><div class="b" style="left:313.0px;top:0.0px;width:1847.0px;height:15.0px;background:#171717;"></div><div class="b" style="left:312.0px;top:0.0px;width:1.5px;height:15.0px;background:#0e0e0e;"></div><span class="t" style="left:374.6px;top:5.7px;font-size:24.4px;color:#5a5a5a;letter-spacing:-0.80px;">Macintosh HD</span><span class="t" style="left:589.0px;top:5.7px;font-size:24.4px;color:#5a5a5a;letter-spacing:-1.50px;">Users</span><span class="t" style="left:716.5px;top:5.7px;font-size:24.4px;color:#5a5a5a;letter-spacing:-1.05px;">Roberto</span><span class="t" style="left:868.0px;top:5.7px;font-size:24.4px;color:#5a5a5a;letter-spacing:-0.59px;">Another Dept</span><span class="t" style="left:1081.0px;top:5.7px;font-size:24.4px;color:#5a5a5a;letter-spacing:-2.54px;">GRAPHICS</span><span class="t" style="left:1260.0px;top:5.7px;font-size:24.4px;color:#5a5a5a;letter-spacing:-0.91px;">Designs</span><span class="t" style="left:1412.6px;top:5.7px;font-size:24.4px;color:#5a5a5a;letter-spacing:-0.42px;">energy system collapse.jpg</span><span class="t" style="left:530.0px;top:8.4px;font-size:22.0px;color:#4a4a4a;">›</span><span class="t" style="left:658.0px;top:8.4px;font-size:22.0px;color:#4a4a4a;">›</span><span class="t" style="left:808.0px;top:8.4px;font-size:22.0px;color:#4a4a4a;">›</span><span class="t" style="left:1017.0px;top:8.4px;font-size:22.0px;color:#4a4a4a;">›</span><span class="t" style="left:1202.0px;top:8.4px;font-size:22.0px;color:#4a4a4a;">›</span><span class="t" style="left:1355.0px;top:8.4px;font-size:22.0px;color:#4a4a4a;">›</span><svg class="b" style="left:0.0px;top:0.0px;" width="2160" height="15" viewBox="0 0 2160 15"><path d="M553.7,5 h8 l2.4,2.4 h12 q1.6,0 1.6,1.6 v14 h-25.6 v-16.4 q0,-1.6 1.6,-1.6 z" fill="#17587c"/><path d="M553.7,9.6 h25.6" stroke="#2477a3" stroke-width="1.6"/><path d="M681,5 h8 l2.4,2.4 h12 q1.6,0 1.6,1.6 v14 h-25.6 v-16.4 q0,-1.6 1.6,-1.6 z" fill="#17587c"/><path d="M681,9.6 h25.6" stroke="#2477a3" stroke-width="1.6"/><path d="M832,5 h8 l2.4,2.4 h12 q1.6,0 1.6,1.6 v14 h-25.6 v-16.4 q0,-1.6 1.6,-1.6 z" fill="#17587c"/><path d="M832,9.6 h25.6" stroke="#2477a3" stroke-width="1.6"/><path d="M1046,5 h8 l2.4,2.4 h12 q1.6,0 1.6,1.6 v14 h-25.6 v-16.4 q0,-1.6 1.6,-1.6 z" fill="#17587c"/><path d="M1046,9.6 h25.6" stroke="#2477a3" stroke-width="1.6"/><path d="M1225.3,5 h8 l2.4,2.4 h12 q1.6,0 1.6,1.6 v14 h-25.6 v-16.4 q0,-1.6 1.6,-1.6 z" fill="#17587c"/><path d="M1225.3,9.6 h25.6" stroke="#2477a3" stroke-width="1.6"/><path d="M341,4.4 h17 l3,12 v8 h-23 v-8 z" fill="#7a7a7a"/><path d="M338,16 h23" stroke="#555" stroke-width="1.4"/><path d="M1380,4 h13 l6,6 v16 h-19 z" fill="#7c7c7c"/><rect x="1383" y="11" width="9" height="8" fill="#4a6ea8"/></svg></div>
</body></html>
